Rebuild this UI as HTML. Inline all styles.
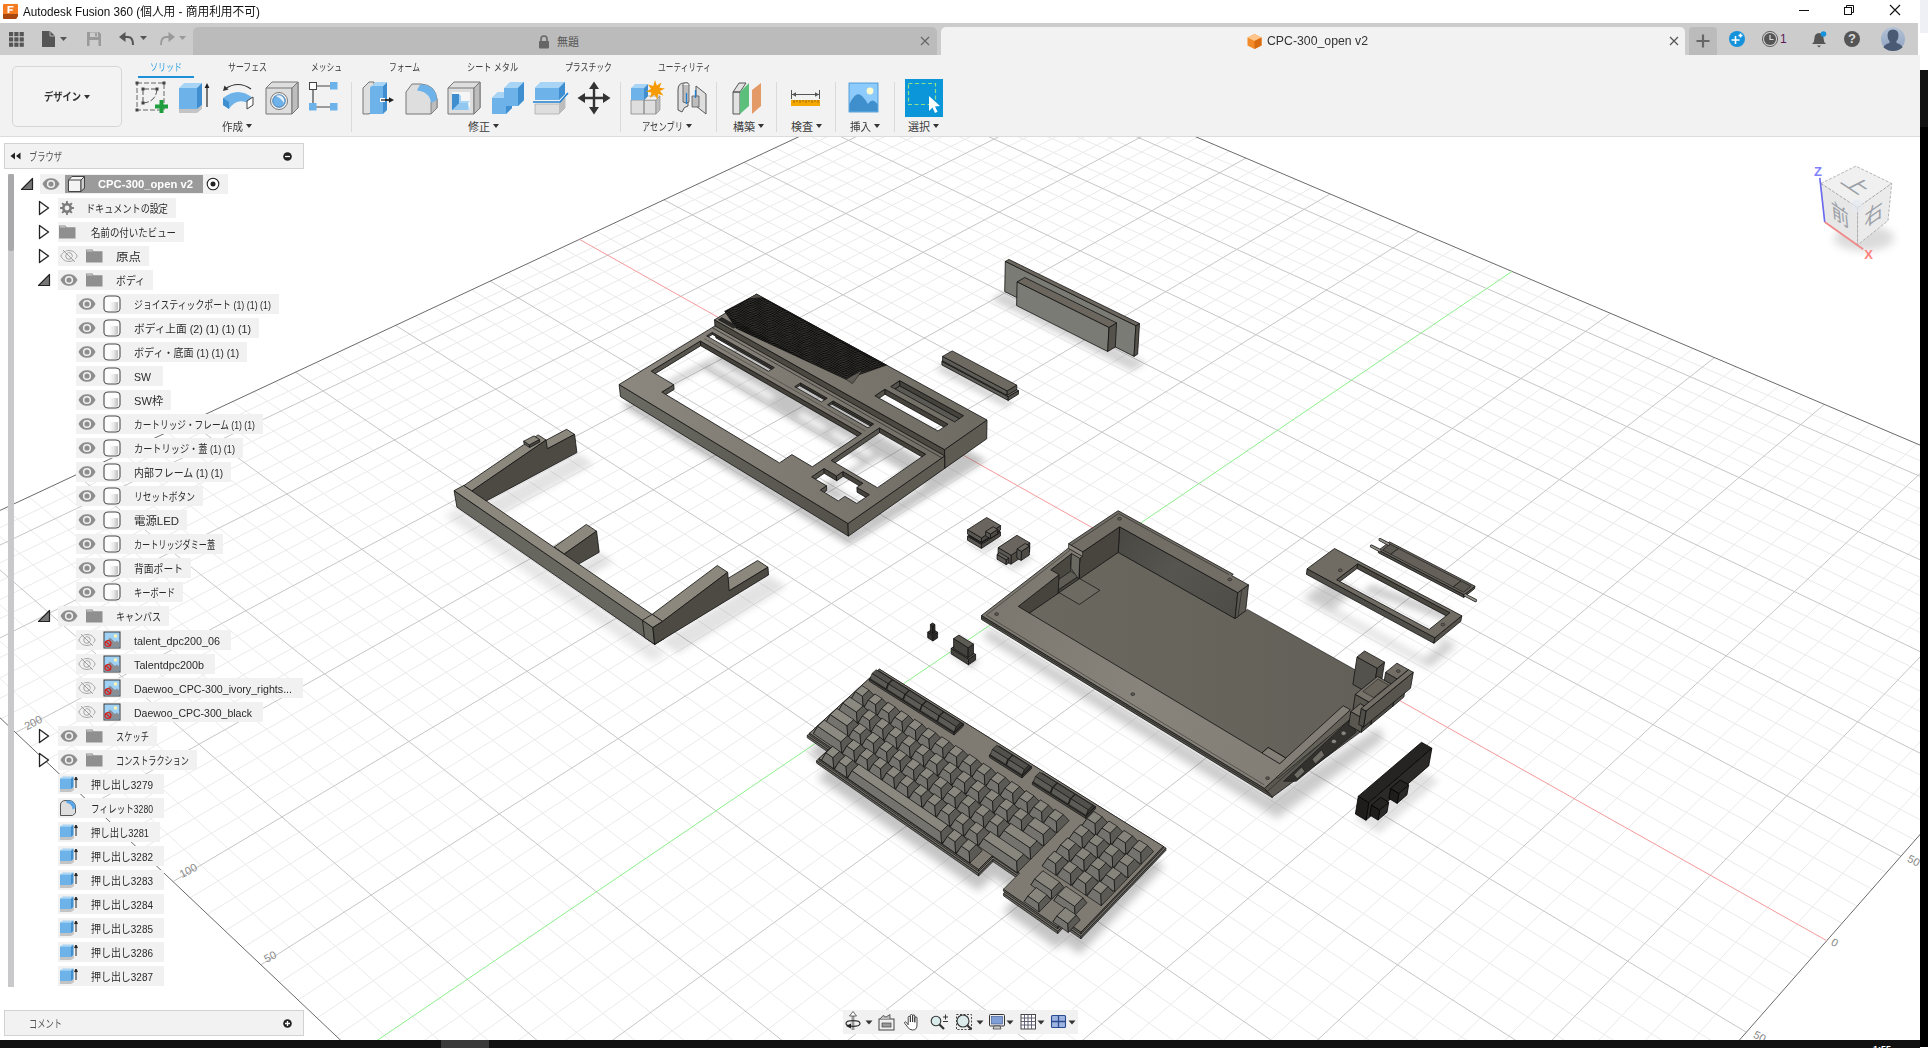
<!DOCTYPE html>
<html lang="ja"><head><meta charset="utf-8"><title>Autodesk Fusion 360</title>
<style>
html,body{margin:0;padding:0;background:#000;}html{width:1928px;height:1048px;overflow:hidden}
body{width:1928px;height:1048px;position:relative;overflow:hidden;font-family:"Liberation Sans","Noto Sans CJK JP",sans-serif;font-size:11px;color:#333;}
.abs{position:absolute;}
#win{position:absolute;left:0;top:0;width:1920px;height:1040px;background:#fff;overflow:hidden;}
#title{position:absolute;left:0;top:0;width:1920px;height:23px;background:#fff;}
#title .t{position:absolute;left:23px;top:2px;font-size:12px;color:#111;white-space:nowrap;display:inline-block}
#qbar{position:absolute;left:0;top:23px;width:1918px;height:32px;background:#cccccc;}
#tab1{position:absolute;left:193px;top:4px;width:744px;height:28px;background:#bbbbbb;border-radius:5px 5px 0 0;}
#tab2{position:absolute;left:941px;top:4px;width:744px;height:28px;background:#f2f2f2;border-radius:5px 5px 0 0;}
#plus{position:absolute;left:1689px;top:4px;width:28px;height:28px;background:#bbbbbb;border-radius:4px 4px 0 0;}
#tbar{position:absolute;left:0;top:55px;width:1920px;height:82px;background:#f2f2f2;border-bottom:1px solid #dcdcdc;box-sizing:border-box;}
.tabl{position:absolute;top:59px;font-size:10.5px;color:#3c3c3c;white-space:nowrap;display:inline-block}
.grp{position:absolute;top:118px;font-size:11px;color:#3c3c3c;white-space:nowrap;display:inline-block}
.dd{position:absolute;top:124px;border:3.5px solid transparent;border-top:4px solid #333;border-bottom:0}
.sep{position:absolute;top:82px;width:1px;height:50px;background:#dadada}
.ico{position:absolute;top:80px;width:36px;height:36px}
#design{position:absolute;left:12px;top:66px;width:108px;height:59px;border:1px solid #d6d6d6;border-radius:5px;background:#f3f3f3;box-sizing:content-box}
#design span{position:absolute;left:31px;top:21px;font-size:11px;font-weight:bold;color:#333;white-space:nowrap;display:inline-block}
#design i{position:absolute;left:71px;top:28px;border:3.5px solid transparent;border-top:4px solid #333;border-bottom:0}
#view{position:absolute;left:0;top:137px;width:1920px;height:903px;background:#fff;overflow:hidden}
.panel{position:absolute;left:4px;width:298px;height:24px;background:#f2f2f2;border:1px solid #d2d2d2;box-sizing:content-box}
.panel span{position:absolute;left:24px;top:4px;font-size:11px;color:#555;white-space:nowrap;display:inline-block}
.row{position:absolute;height:20px;background:#f1f1f1;white-space:nowrap}
.row .tx{position:absolute;top:3px;line-height:16px;height:16px;font-size:11px;color:#2a2a2a;white-space:nowrap;display:inline-block}
.row svg{position:absolute}
.arr{position:absolute}
#nav{position:absolute;left:843px;top:1010px;width:235px;height:24px;background:#f1f1f1}
</style></head><body>
<div id="win">

<div id="view"><svg width="1920" height="903" viewBox="0 137 1920 903" style="position:absolute;left:0;top:0"><defs><filter id="sh" x="-20%" y="-20%" width="140%" height="140%"><feGaussianBlur stdDeviation="4.5"/></filter><filter id="sh3" x="-20%" y="-20%" width="140%" height="140%"><feGaussianBlur stdDeviation="3.2"/></filter><filter id="sh2" x="-20%" y="-20%" width="140%" height="140%"><feGaussianBlur stdDeviation="3"/></filter></defs><path d="M-134.1 590.9L1002.0 54.3M-108.4 615.1L1030.5 66.5M-95.4 627.5L1044.9 72.6M-82.2 640.0L1059.5 78.8M-68.7 652.7L1074.3 85.1M-41.4 678.6L1104.1 97.8M-27.4 691.8L1119.3 104.2M-13.3 705.2L1134.5 110.8M1.1 718.8L1150.0 117.3M30.4 746.6L1181.3 130.7M45.3 760.7L1197.2 137.4M60.5 775.1L1213.2 144.2M75.9 789.7L1229.4 151.1M107.4 819.4L1262.3 165.1M123.4 834.6L1279.0 172.2M139.7 850.1L1295.8 179.4M156.3 865.7L1312.8 186.7M190.1 897.8L1347.4 201.4M207.4 914.2L1364.9 208.8M225.0 930.8L1382.6 216.4M242.8 947.7L1400.5 224.0M279.4 982.3L1436.9 239.5M298.0 1000.0L1455.4 247.3M317.0 1017.9L1474.0 255.3M336.3 1036.2L1492.9 263.3M375.9 1073.6L1531.2 279.6M396.1 1092.8L1550.7 287.9M416.7 1112.3L1570.4 296.3M437.6 1132.1L1590.3 304.8M480.5 1172.7L1630.7 322.0M502.5 1193.6L1651.3 330.7M524.9 1214.8L1672.1 339.6M547.7 1236.3L1693.1 348.5M594.5 1280.6L1735.8 366.7M618.5 1303.4L1757.6 376.0M643.0 1326.5L1779.6 385.4M667.8 1350.1L1801.8 394.8M719.0 1398.5L1847.1 414.1M745.3 1423.4L1870.1 423.9M772.1 1448.8L1893.4 433.8M799.4 1474.6L1917.0 443.8M855.6 1527.9L1965.0 464.3M884.6 1555.3L1989.4 474.7M914.1 1583.2L2014.1 485.2M944.2 1611.7L2039.1 495.8M1006.2 1670.4L2090.1 517.6M1038.2 1700.7L2116.1 528.6M1070.9 1731.6L2142.4 539.8M-120.5 566.8L1133.1 1730.2M-94.8 554.7L1161.5 1698.0M-69.4 542.9L1189.2 1666.5M-19.6 519.6L1242.8 1605.4M4.8 508.2L1268.8 1575.8M28.9 496.9L1294.3 1546.8M52.7 485.8L1319.3 1518.4M99.4 463.9L1367.7 1463.3M122.3 453.2L1391.1 1436.6M144.9 442.6L1414.2 1410.4M167.2 432.2L1436.7 1384.7M211.0 411.7L1480.6 1334.7M232.6 401.6L1501.9 1310.5M253.8 391.7L1522.8 1286.7M274.8 381.9L1543.3 1263.3M316.1 362.6L1583.3 1217.9M336.4 353.1L1602.7 1195.7M356.4 343.7L1621.8 1174.0M376.2 334.5L1640.5 1152.7M415.1 316.3L1677.0 1111.1M434.2 307.3L1694.8 1090.9M453.1 298.5L1712.3 1071.0M471.7 289.8L1729.5 1051.4M508.5 272.6L1763.0 1013.3M526.5 264.1L1779.3 994.7M544.4 255.8L1795.4 976.4M562.0 247.5L1811.2 958.4M596.8 231.3L1842.1 923.3M613.9 223.3L1857.1 906.1M630.8 215.4L1872.0 889.2M647.5 207.6L1886.6 872.6M680.4 192.2L1915.1 840.1M696.6 184.6L1929.0 824.3M712.6 177.1L1942.7 808.7M728.5 169.7L1956.3 793.3M759.7 155.1L1982.7 763.2M775.1 147.9L1995.6 748.5M790.3 140.8L2008.4 734.0M805.3 133.7L2020.9 719.7M835.0 119.9L2045.5 691.7M849.6 113.1L2057.5 678.0M864.0 106.3L2069.4 664.5M878.4 99.6L2081.0 651.2M906.6 86.4L2103.9 625.2M920.4 79.9L2115.2 612.4M934.2 73.5L2126.2 599.8M947.8 67.1L2137.1 587.4M974.7 54.5L2158.5 563.1" stroke="#eaeaea" stroke-width="1" fill="none"/>
<path d="M-121.3 602.9L1016.2 60.4M-55.2 665.6L1089.1 91.4M15.6 732.6L1165.6 124.0M91.5 804.4L1245.8 158.1M173.1 881.6L1330.0 194.0M261.0 964.8L1418.6 231.7M458.9 1152.2L1610.4 313.3M570.9 1258.3L1714.4 357.6M693.2 1374.1L1824.3 404.4M827.3 1501.0L1940.8 454.0M974.9 1640.8L2064.5 506.6M-44.3 531.1L1216.3 1635.6M76.2 474.8L1343.7 1490.6M189.3 421.9L1458.9 1359.5M295.6 372.2L1563.5 1240.4M395.7 325.3L1658.9 1131.7M490.2 281.1L1746.4 1032.2M664.0 199.8L1900.9 856.2M744.2 162.4L1969.6 778.1M820.2 126.8L2033.3 705.6M892.5 93.0L2092.6 638.1M961.3 60.8L2147.9 575.1" stroke="#c6c6c6" stroke-width="1" fill="none"/>
<polygon points="-146.6,579.0 1104.2,1763.2 2169.0,551.1 987.9,48.3" fill="none" stroke="#6a6a6a" stroke-width="1"/>
<path d="M579.5 239.4L1826.8 940.7" stroke="#f59a9a" stroke-width="1"/>
<path d="M355.9 1054.8L1512.0 271.4" stroke="#8cf08c" stroke-width="1"/>
<text x="35" y="726" transform="rotate(-28 35 726)" font-size="11" fill="#8a8a8a" font-family="Liberation Sans, sans-serif" text-anchor="middle">200</text>
<text x="190" y="874" transform="rotate(-28 190 874)" font-size="11" fill="#8a8a8a" font-family="Liberation Sans, sans-serif" text-anchor="middle">100</text>
<text x="272" y="960" transform="rotate(-28 272 960)" font-size="11" fill="#8a8a8a" font-family="Liberation Sans, sans-serif" text-anchor="middle">50</text>
<text x="1912" y="864" transform="rotate(28 1912 864)" font-size="11" fill="#8a8a8a" font-family="Liberation Sans, sans-serif" text-anchor="middle">50</text>
<text x="1833" y="946" transform="rotate(28 1833 946)" font-size="11" fill="#8a8a8a" font-family="Liberation Sans, sans-serif" text-anchor="middle">0</text>
<text x="1758" y="1040" transform="rotate(28 1758 1040)" font-size="11" fill="#8a8a8a" font-family="Liberation Sans, sans-serif" text-anchor="middle">50</text><defs><linearGradient id="tbTop" gradientUnits="userSpaceOnUse" x1="620" y1="0" x2="990" y2="0"><stop offset="0" stop-color="#8c887f"/><stop offset="0.5" stop-color="#7d7970"/><stop offset="1" stop-color="#6d6a62"/></linearGradient><linearGradient id="tbV" gradientUnits="userSpaceOnUse" x1="620" y1="0" x2="850" y2="0"><stop offset="0" stop-color="#6b6b63"/><stop offset="1" stop-color="#53504a"/></linearGradient><linearGradient id="bcFloor" gradientUnits="userSpaceOnUse" x1="1000" y1="0" x2="1400" y2="0"><stop offset="0" stop-color="#6b685f"/><stop offset="0.5" stop-color="#67645c"/><stop offset="1" stop-color="#625f58"/></linearGradient><linearGradient id="bcWall" gradientUnits="userSpaceOnUse" x1="1120" y1="530" x2="1240" y2="620"><stop offset="0" stop-color="#4a4843"/><stop offset="0.45" stop-color="#57554f"/><stop offset="1" stop-color="#4e4c46"/></linearGradient><linearGradient id="bcRim" gradientUnits="userSpaceOnUse" x1="980" y1="620" x2="1280" y2="790"><stop offset="0" stop-color="#7b776e"/><stop offset="0.5" stop-color="#88847b"/><stop offset="1" stop-color="#827e75"/></linearGradient><linearGradient id="kbTop" gradientUnits="userSpaceOnUse" x1="800" y1="0" x2="1170" y2="0"><stop offset="0" stop-color="#8d8a81"/><stop offset="1" stop-color="#85827a"/></linearGradient></defs><path d="M990.5 299.4 L1131.9 371.1 L1145.9 362.5 L1004.6 291.6Z" fill="#555" fill-rule="evenodd" opacity="0.25" filter="url(#sh2)"/>
<polygon points="1004.7,291.5 1134.0,356.4 1135.9,325.7 1005.3,261.4" fill="#7b7b75" stroke="#111" stroke-width="0.8" stroke-linejoin="round" />
<polygon points="1134.0,356.4 1137.6,354.2 1139.5,323.5 1135.9,325.7" fill="#55524b" stroke="#111" stroke-width="0.8" stroke-linejoin="round" />
<path d="M1005.3 261.4 L1135.9 325.7 L1139.5 323.5 L1008.9 259.4Z" fill="#6b675f" fill-rule="evenodd" stroke="#111" stroke-width="0.8" stroke-linejoin="round" />
<polygon points="1016.6,305.6 1107.7,351.5 1109.0,327.4 1017.1,281.8" fill="#7b7b75" stroke="#111" stroke-width="0.8" stroke-linejoin="round" />
<polygon points="1107.7,351.5 1115.3,347.0 1116.6,322.9 1109.0,327.4" fill="#55524b" stroke="#111" stroke-width="0.8" stroke-linejoin="round" />
<path d="M1017.1 281.8 L1109.0 327.4 L1116.6 322.9 L1024.8 277.5Z" fill="#6b675f" fill-rule="evenodd" stroke="#111" stroke-width="0.8" stroke-linejoin="round" />
<path d="M935.1 369.4 L1005.3 407.2 L1013.7 402.2 L943.5 364.6Z" fill="#555" fill-rule="evenodd" opacity="0.25" filter="url(#sh2)"/>
<polygon points="941.9,364.9 1008.2,400.4 1008.2,396.7 941.9,361.3" fill="#5d5c56" stroke="#111" stroke-width="0.8" stroke-linejoin="round" />
<polygon points="1008.2,400.4 1018.4,394.2 1018.5,390.6 1008.2,396.7" fill="#55524b" stroke="#111" stroke-width="0.8" stroke-linejoin="round" />
<path d="M941.9 361.3 L1008.2 396.7 L1018.5 390.6 L952.2 355.4Z" fill="#6e6a62" fill-rule="evenodd" stroke="#111" stroke-width="0.8" stroke-linejoin="round" />
<polygon points="942.6,360.9 1007.1,395.4 1007.2,390.9 942.6,356.4" fill="#5d5c56" stroke="#111" stroke-width="0.8" stroke-linejoin="round" />
<polygon points="1007.1,395.4 1016.7,389.6 1016.8,385.2 1007.2,390.9" fill="#55524b" stroke="#111" stroke-width="0.8" stroke-linejoin="round" />
<path d="M942.6 356.4 L1007.2 390.9 L1016.8 385.2 L952.2 350.9Z" fill="#6e6a62" fill-rule="evenodd" stroke="#111" stroke-width="0.8" stroke-linejoin="round" />
<path d="M621.5 405.7 L848.7 545.5 L986.5 460.5 L759.1 333.2Z M702.6 368.7 L653.4 394.7 L675.9 408.3 L663.9 414.7 L780.8 485.9 L793.2 478.7 L813.4 490.9 L862.3 462.0Z M708.8 364.2 L770.3 399.9 L776.0 396.7 L714.6 361.2Z M796.2 415.4 L822.7 430.7 L828.4 427.5 L801.9 412.2Z M828.7 433.6 L868.8 456.9 L874.3 453.6 L834.2 430.4Z M832.2 485.8 L878.0 513.2 L925.9 483.9 L880.1 457.4Z M812.8 500.3 L825.1 493.0 L837.5 500.5 L844.0 496.6 L863.7 508.4 L857.7 512.0 L870.1 519.4 L857.6 527.1 L845.8 519.9 L839.2 523.9 L821.3 513.0 L827.5 509.3Z M875.9 433.1 L938.2 468.7 L948.0 462.7 L885.7 427.3Z" fill="#555" fill-rule="evenodd" opacity="0.34" filter="url(#sh3)"/>
<polygon points="890.8,391.7 954.6,427.1 963.5,420.9 899.8,385.8" fill="#5b5953" stroke="#111" stroke-width="0.8" stroke-linejoin="round" />
<polygon points="899.8,385.8 890.8,391.7 890.7,386.6 899.7,380.6" fill="#55524b" stroke="#111" stroke-width="0.8" stroke-linejoin="round" />
<polygon points="963.5,420.9 899.8,385.8 899.7,380.6 963.6,415.7" fill="#45423c" stroke="#111" stroke-width="0.8" stroke-linejoin="round" />
<polygon points="885.0,394.3 875.1,400.9 874.9,395.8 884.9,389.2" fill="#55524b" stroke="#111" stroke-width="0.8" stroke-linejoin="round" />
<polygon points="948.0,429.4 885.0,394.3 884.9,389.2 948.0,424.2" fill="#45423c" stroke="#111" stroke-width="0.8" stroke-linejoin="round" />
<polygon points="715.9,337.9 944.7,468.4 944.6,449.6 714.5,319.8" fill="#4c4943" stroke="#111" stroke-width="0.8" stroke-linejoin="round" />
<polygon points="944.7,468.4 986.7,438.8 987.0,420.0 944.6,449.6" fill="#5e5b53" stroke="#111" stroke-width="0.8" stroke-linejoin="round" />
<path d="M714.5 319.8 L944.6 449.6 L987.0 420.0 L756.6 294.1Z M874.9 395.8 L938.0 431.0 L948.0 424.2 L884.9 389.2Z M890.7 386.6 L954.6 421.9 L963.6 415.7 L899.7 380.6Z" fill="url(#tbTop)" fill-rule="evenodd" stroke="#111" stroke-width="0.8" stroke-linejoin="round" />
<polygon points="756.5,294.3 724.7,311.3 736.2,328.3 845.9,379.3 886.5,365.1" fill="#2b2a28" stroke="#111" stroke-width="0.6"/>
<clipPath id="ventclip"><polygon points="756.5,294.3 724.7,311.3 736.2,328.3 845.9,379.3 886.5,365.1"/></clipPath>
<g clip-path="url(#ventclip)"><path d="M689.8 316.6 L693.4 313.8 L697.0 310.5 L700.6 309.0 L704.2 308.4 L707.8 306.0 L711.4 302.5 L715.0 300.7 L718.6 300.2 L722.2 298.2 L725.8 294.7 L729.4 292.4 L733.0 291.9 L736.6 290.3 L740.2 286.9 L743.8 284.2 L747.4 283.5 L751.0 282.3M692.1 317.6 L695.7 314.1 L699.3 311.6 L702.9 311.0 L706.5 309.6 L710.1 306.3 L713.7 303.5 L717.3 302.6 L720.9 301.6 L724.5 298.6 L728.1 295.4 L731.7 294.3 L735.3 293.5 L738.9 290.8 L742.5 287.4 L746.1 285.9 L749.7 285.3 L753.3 283.0M694.4 318.0 L698.0 314.7 L701.6 313.4 L705.2 312.7 L708.8 310.2 L712.4 306.7 L716.0 305.1 L719.6 304.5 L723.2 302.4 L726.8 298.9 L730.4 296.8 L734.0 296.2 L737.6 294.5 L741.2 291.1 L744.8 288.5 L748.4 287.9 L752.0 286.6 L755.6 283.3M696.7 318.3 L700.3 316.0 L703.9 315.4 L707.5 313.9 L711.1 310.5 L714.7 307.8 L718.3 307.0 L721.9 305.9 L725.5 302.7 L729.1 299.7 L732.7 298.7 L736.3 297.8 L739.9 295.0 L743.5 291.6 L747.1 290.3 L750.7 289.7 L754.3 287.2 L757.9 283.7M699.0 318.9 L702.6 317.8 L706.2 317.1 L709.8 314.4 L713.4 311.0 L717.0 309.4 L720.6 308.9 L724.2 306.6 L727.8 303.1 L731.4 301.1 L735.0 300.6 L738.6 298.7 L742.2 295.2 L745.8 292.9 L749.4 292.3 L753.0 290.8 L756.6 287.5 L760.2 284.7M701.3 320.3 L704.9 319.7 L708.5 318.1 L712.1 314.6 L715.7 312.1 L719.3 311.4 L722.9 310.1 L726.5 306.9 L730.1 303.9 L733.7 303.0 L737.3 302.1 L740.9 299.1 L744.5 295.9 L748.1 294.7 L751.7 294.0 L755.3 291.4 L758.9 287.9 L762.5 286.3M703.6 322.2 L707.2 321.3 L710.8 318.5 L714.4 315.2 L718.0 313.8 L721.6 313.2 L725.2 310.8 L728.8 307.3 L732.4 305.5 L736.0 304.9 L739.6 302.9 L743.2 299.4 L746.8 297.2 L750.4 296.6 L754.0 295.0 L757.6 291.6 L761.2 289.0 L764.8 288.3M705.9 324.1 L709.5 322.3 L713.1 318.8 L716.7 316.4 L720.3 315.8 L723.9 314.4 L727.5 311.0 L731.1 308.2 L734.7 307.4 L738.3 306.4 L741.9 303.3 L745.5 300.1 L749.1 299.0 L752.7 298.3 L756.3 295.5 L759.9 292.1 L763.5 290.7 L767.1 290.1M708.2 325.6 L711.8 322.7 L715.4 319.4 L719.0 318.2 L722.6 317.5 L726.2 314.9 L729.8 311.5 L733.4 309.8 L737.0 309.3 L740.6 307.1 L744.2 303.6 L747.8 301.5 L751.4 301.0 L755.0 299.3 L758.6 295.8 L762.2 293.3 L765.8 292.7 L769.4 291.3M710.5 326.5 L714.1 323.0 L717.7 320.7 L721.3 320.1 L724.9 318.6 L728.5 315.2 L732.1 312.5 L735.7 311.8 L739.3 310.6 L742.9 307.4 L746.5 304.4 L750.1 303.4 L753.7 302.6 L757.3 299.7 L760.9 296.4 L764.5 295.0 L768.1 294.4 L771.7 291.9M712.8 326.9 L716.4 323.7 L720.0 322.5 L723.6 321.8 L727.2 319.1 L730.8 315.7 L734.4 314.2 L738.0 313.6 L741.6 311.3 L745.2 307.8 L748.8 305.9 L752.4 305.4 L756.0 303.5 L759.6 300.0 L763.2 297.6 L766.8 297.0 L770.4 295.6 L774.0 292.2M715.1 327.2 L718.7 325.0 L722.3 324.5 L725.9 322.8 L729.5 319.4 L733.1 316.8 L736.7 316.2 L740.3 314.9 L743.9 311.6 L747.5 308.7 L751.1 307.8 L754.7 306.8 L758.3 303.8 L761.9 300.6 L765.5 299.4 L769.1 298.7 L772.7 296.1 L776.3 292.7M717.4 327.9 L721.0 326.9 L724.6 326.1 L728.2 323.3 L731.8 319.9 L735.4 318.6 L739.0 317.9 L742.6 315.5 L746.2 312.0 L749.8 310.2 L753.4 309.7 L757.0 307.7 L760.6 304.2 L764.2 301.9 L767.8 301.4 L771.4 299.8 L775.0 296.4 L778.6 293.7M719.7 329.4 L723.3 328.9 L726.9 327.0 L730.5 323.5 L734.1 321.1 L737.7 320.5 L741.3 319.1 L744.9 315.8 L748.5 313.0 L752.1 312.2 L755.7 311.1 L759.3 308.0 L762.9 304.9 L766.5 303.8 L770.1 303.0 L773.7 300.2 L777.3 296.9 L780.9 295.4M722.0 331.3 L725.6 330.4 L729.2 327.4 L732.8 324.2 L736.4 322.9 L740.0 322.3 L743.6 319.7 L747.2 316.2 L750.8 314.6 L754.4 314.0 L758.0 311.9 L761.6 308.3 L765.2 306.3 L768.8 305.8 L772.4 304.0 L776.0 300.5 L779.6 298.0 L783.2 297.4M724.3 333.2 L727.9 331.2 L731.5 327.7 L735.1 325.5 L738.7 324.9 L742.3 323.3 L745.9 319.9 L749.5 317.3 L753.1 316.6 L756.7 315.4 L760.3 312.2 L763.9 309.2 L767.5 308.2 L771.1 307.3 L774.7 304.4 L778.3 301.1 L781.9 299.8 L785.5 299.2M726.6 334.7 L730.2 331.6 L733.8 328.4 L737.4 327.3 L741.0 326.6 L744.6 323.8 L748.2 320.4 L751.8 318.9 L755.4 318.4 L759.0 316.0 L762.6 312.5 L766.2 310.6 L769.8 310.1 L773.4 308.2 L777.0 304.7 L780.6 302.4 L784.2 301.8 L787.8 300.3M728.9 335.4 L732.5 331.9 L736.1 329.8 L739.7 329.3 L743.3 327.6 L746.9 324.1 L750.5 321.6 L754.1 320.9 L757.7 319.6 L761.3 316.3 L764.9 313.4 L768.5 312.6 L772.1 311.6 L775.7 308.6 L779.3 305.4 L782.9 304.2 L786.5 303.5 L790.1 300.8M731.2 335.7 L734.8 332.7 L738.4 331.7 L742.0 330.8 L745.6 328.0 L749.2 324.7 L752.8 323.3 L756.4 322.7 L760.0 320.2 L763.6 316.7 L767.2 315.0 L770.8 314.5 L774.4 312.4 L778.0 308.9 L781.6 306.7 L785.2 306.2 L788.8 304.5 L792.4 301.1M733.5 336.1 L737.1 334.1 L740.7 333.6 L744.3 331.8 L747.9 328.3 L751.5 325.9 L755.1 325.3 L758.7 323.9 L762.3 320.5 L765.9 317.7 L769.5 316.9 L773.1 315.9 L776.7 312.7 L780.3 309.6 L783.9 308.6 L787.5 307.8 L791.1 305.0 L794.7 301.6M735.8 337.0 L739.4 336.1 L743.0 335.1 L746.6 332.2 L750.2 328.9 L753.8 327.7 L757.4 327.0 L761.0 324.4 L764.6 321.0 L768.2 319.3 L771.8 318.8 L775.4 316.6 L779.0 313.1 L782.6 311.0 L786.2 310.5 L789.8 308.7 L793.4 305.3 L797.0 302.8M738.1 338.5 L741.7 338.0 L745.3 336.0 L748.9 332.5 L752.5 330.2 L756.1 329.7 L759.7 328.1 L763.3 324.7 L766.9 322.0 L770.5 321.3 L774.1 320.1 L777.7 316.9 L781.3 313.9 L784.9 312.9 L788.5 312.1 L792.1 309.1 L795.7 305.9 L799.3 304.6M740.4 340.4 L744.0 339.4 L747.6 336.3 L751.2 333.2 L754.8 332.1 L758.4 331.3 L762.0 328.6 L765.6 325.2 L769.2 323.7 L772.8 323.1 L776.4 320.8 L780.0 317.3 L783.6 315.4 L787.2 314.9 L790.8 312.9 L794.4 309.4 L798.0 307.1 L801.6 306.6M742.7 342.3 L746.3 340.2 L749.9 336.6 L753.5 334.6 L757.1 334.0 L760.7 332.3 L764.3 328.8 L767.9 326.3 L771.5 325.7 L775.1 324.4 L778.7 321.1 L782.3 318.2 L785.9 317.3 L789.5 316.3 L793.1 313.3 L796.7 310.1 L800.3 309.0 L803.9 308.2M745.0 343.7 L748.6 340.5 L752.2 337.4 L755.8 336.4 L759.4 335.6 L763.0 332.7 L766.6 329.4 L770.2 328.1 L773.8 327.4 L777.4 324.9 L781.0 321.5 L784.6 319.7 L788.2 319.2 L791.8 317.1 L795.4 313.6 L799.0 311.5 L802.6 310.9 L806.2 309.3M747.3 344.3 L750.9 340.8 L754.5 338.9 L758.1 338.4 L761.7 336.5 L765.3 333.0 L768.9 330.6 L772.5 330.1 L776.1 328.6 L779.7 325.2 L783.3 322.5 L786.9 321.7 L790.5 320.6 L794.1 317.5 L797.7 314.4 L801.3 313.3 L804.9 312.5 L808.5 309.7M749.6 344.6 L753.2 341.7 L756.8 340.8 L760.4 339.9 L764.0 336.9 L767.6 333.7 L771.2 332.5 L774.8 331.8 L778.4 329.1 L782.0 325.7 L785.6 324.1 L789.2 323.6 L792.8 321.3 L796.4 317.8 L800.0 315.8 L803.6 315.3 L807.2 313.5 L810.8 310.0M751.9 345.0 L755.5 343.3 L759.1 342.7 L762.7 340.7 L766.3 337.2 L769.9 335.0 L773.5 334.4 L777.1 332.8 L780.7 329.4 L784.3 326.8 L787.9 326.1 L791.5 324.9 L795.1 321.6 L798.7 318.6 L802.3 317.7 L805.9 316.8 L809.5 313.9 L813.1 310.6M754.2 346.0 L757.8 345.2 L761.4 344.1 L765.0 341.0 L768.6 337.9 L772.2 336.8 L775.8 336.1 L779.4 333.3 L783.0 329.9 L786.6 328.5 L790.2 327.9 L793.8 325.5 L797.4 322.0 L801.0 320.1 L804.6 319.6 L808.2 317.7 L811.8 314.2 L815.4 311.9M756.5 347.6 L760.1 347.1 L763.7 344.9 L767.3 341.4 L770.9 339.3 L774.5 338.8 L778.1 337.0 L781.7 333.6 L785.3 331.1 L788.9 330.5 L792.5 329.1 L796.1 325.8 L799.7 322.9 L803.3 322.1 L806.9 321.1 L810.5 318.0 L814.1 314.9 L817.7 313.7M758.8 349.6 L762.4 348.4 L766.0 345.2 L769.6 342.2 L773.2 341.2 L776.8 340.3 L780.4 337.4 L784.0 334.2 L787.6 332.8 L791.2 332.2 L794.8 329.7 L798.4 326.2 L802.0 324.5 L805.6 324.0 L809.2 321.9 L812.8 318.3 L816.4 316.2 L820.0 315.7M761.1 351.4 L764.7 349.1 L768.3 345.6 L771.9 343.7 L775.5 343.1 L779.1 341.2 L782.7 337.7 L786.3 335.4 L789.9 334.8 L793.5 333.3 L797.1 329.9 L800.7 327.2 L804.3 326.5 L807.9 325.3 L811.5 322.2 L815.1 319.1 L818.7 318.1 L822.3 317.3M763.4 352.6 L767.0 349.4 L770.6 346.5 L774.2 345.6 L777.8 344.6 L781.4 341.6 L785.0 338.4 L788.6 337.2 L792.2 336.5 L795.8 333.8 L799.4 330.4 L803.0 328.9 L806.6 328.3 L810.2 326.1 L813.8 322.5 L817.4 320.6 L821.0 320.0 L824.6 318.2M765.7 353.2 L769.3 349.8 L772.9 348.0 L776.5 347.5 L780.1 345.4 L783.7 341.9 L787.3 339.7 L790.9 339.2 L794.5 337.6 L798.1 334.1 L801.7 331.5 L805.3 330.8 L808.9 329.6 L812.5 326.3 L816.1 323.4 L819.7 322.5 L823.3 321.6 L826.9 318.6M768.0 353.5 L771.6 350.8 L775.2 350.0 L778.8 348.9 L782.4 345.8 L786.0 342.7 L789.6 341.6 L793.2 340.8 L796.8 338.0 L800.4 334.7 L804.0 333.2 L807.6 332.6 L811.2 330.2 L814.8 326.7 L818.4 324.9 L822.0 324.4 L825.6 322.4 L829.2 318.9M770.3 354.0 L773.9 352.4 L777.5 351.8 L781.1 349.6 L784.7 346.1 L788.3 344.1 L791.9 343.6 L795.5 341.8 L799.1 338.3 L802.7 335.8 L806.3 335.2 L809.9 333.8 L813.5 330.5 L817.1 327.7 L820.7 326.9 L824.3 325.8 L827.9 322.8 L831.5 319.6M772.6 355.1 L776.2 354.4 L779.8 353.1 L783.4 349.9 L787.0 346.9 L790.6 346.0 L794.2 345.1 L797.8 342.2 L801.4 338.9 L805.0 337.6 L808.6 337.0 L812.2 334.4 L815.8 331.0 L819.4 329.3 L823.0 328.7 L826.6 326.6 L830.2 323.1 L833.8 321.0M774.9 356.7 L778.5 356.2 L782.1 353.8 L785.7 350.3 L789.3 348.4 L792.9 347.9 L796.5 346.0 L800.1 342.5 L803.7 340.2 L807.3 339.6 L810.9 338.1 L814.5 334.7 L818.1 332.0 L821.7 331.2 L825.3 330.1 L828.9 326.9 L832.5 323.9 L836.1 322.9M777.2 358.7 L780.8 357.4 L784.4 354.1 L788.0 351.2 L791.6 350.4 L795.2 349.4 L798.8 346.3 L802.4 343.1 L806.0 342.0 L809.6 341.3 L813.2 338.6 L816.8 335.2 L820.4 333.6 L824.0 333.1 L827.6 330.8 L831.2 327.3 L834.8 325.3 L838.4 324.8M779.5 360.5 L783.1 358.0 L786.7 354.5 L790.3 352.8 L793.9 352.2 L797.5 350.2 L801.1 346.6 L804.7 344.5 L808.3 344.0 L811.9 342.3 L815.5 338.8 L819.1 336.3 L822.7 335.6 L826.3 334.3 L829.9 331.1 L833.5 328.1 L837.1 327.2 L840.7 326.3M781.8 361.6 L785.4 358.3 L789.0 355.5 L792.6 354.7 L796.2 353.6 L799.8 350.5 L803.4 347.4 L807.0 346.4 L810.6 345.6 L814.2 342.7 L817.8 339.4 L821.4 338.0 L825.0 337.4 L828.6 335.0 L832.2 331.5 L835.8 329.7 L839.4 329.1 L843.0 327.1M784.1 362.1 L787.7 358.7 L791.3 357.1 L794.9 356.6 L798.5 354.4 L802.1 350.8 L805.7 348.8 L809.3 348.3 L812.9 346.5 L816.5 343.0 L820.1 340.6 L823.7 340.0 L827.3 338.6 L830.9 335.2 L834.5 332.4 L838.1 331.6 L841.7 330.6 L845.3 327.5M786.4 362.4 L790.0 359.8 L793.6 359.1 L797.2 357.9 L800.8 354.7 L804.4 351.7 L808.0 350.7 L811.6 349.8 L815.2 346.9 L818.8 343.6 L822.4 342.4 L826.0 341.7 L829.6 339.1 L833.2 335.7 L836.8 334.0 L840.4 333.5 L844.0 331.3 L847.6 327.8M788.7 363.0 L792.3 361.5 L795.9 360.9 L799.5 358.5 L803.1 355.0 L806.7 353.2 L810.3 352.7 L813.9 350.7 L817.5 347.2 L821.1 344.9 L824.7 344.4 L828.3 342.8 L831.9 339.4 L835.5 336.7 L839.1 336.0 L842.7 334.8 L846.3 331.6 L849.9 328.6M791.0 364.1 L794.6 363.5 L798.2 362.1 L801.8 358.8 L805.4 356.0 L809.0 355.1 L812.6 354.1 L816.2 351.1 L819.8 347.9 L823.4 346.7 L827.0 346.0 L830.6 343.3 L834.2 339.9 L837.8 338.4 L841.4 337.8 L845.0 335.5 L848.6 332.0 L852.2 330.1M793.3 365.9 L796.9 365.2 L800.5 362.7 L804.1 359.2 L807.7 357.5 L811.3 357.0 L814.9 354.9 L818.5 351.4 L822.1 349.2 L825.7 348.7 L829.3 347.0 L832.9 343.6 L836.5 341.0 L840.1 340.4 L843.7 339.1 L847.3 335.8 L850.9 332.9 L854.5 332.0M795.6 367.9 L799.2 366.4 L802.8 363.0 L806.4 360.3 L810.0 359.5 L813.6 358.4 L817.2 355.2 L820.8 352.2 L824.4 351.1 L828.0 350.3 L831.6 347.5 L835.2 344.1 L838.8 342.8 L842.4 342.1 L846.0 339.7 L849.6 336.2 L853.2 334.4 L856.8 333.9M797.9 369.5 L801.5 366.9 L805.1 363.5 L808.7 361.9 L812.3 361.3 L815.9 359.1 L819.5 355.6 L823.1 353.6 L826.7 353.1 L830.3 351.2 L833.9 347.7 L837.5 345.3 L841.1 344.7 L844.7 343.3 L848.3 340.0 L851.9 337.2 L855.5 336.4 L859.1 335.3M800.2 370.6 L803.8 367.1 L807.4 364.6 L811.0 363.9 L814.6 362.6 L818.2 359.4 L821.8 356.4 L825.4 355.5 L829.0 354.6 L832.6 351.6 L836.2 348.4 L839.8 347.1 L843.4 346.5 L847.0 343.9 L850.6 340.4 L854.2 338.8 L857.8 338.2 L861.4 336.1M802.5 371.0 L806.1 367.7 L809.7 366.3 L813.3 365.7 L816.9 363.3 L820.5 359.8 L824.1 357.9 L827.7 357.4 L831.3 355.4 L834.9 351.9 L838.5 349.7 L842.1 349.1 L845.7 347.5 L849.3 344.1 L852.9 341.5 L856.5 340.8 L860.1 339.6 L863.7 336.4M804.8 371.3 L808.4 368.9 L812.0 368.3 L815.6 366.9 L819.2 363.5 L822.8 360.7 L826.4 359.9 L830.0 358.9 L833.6 355.8 L837.2 352.6 L840.8 351.5 L844.4 350.8 L848.0 348.0 L851.6 344.6 L855.2 343.2 L858.8 342.6 L862.4 340.2 L866.0 336.7M807.1 371.9 L810.7 370.6 L814.3 370.0 L817.9 367.4 L821.5 364.0 L825.1 362.3 L828.7 361.8 L832.3 359.6 L835.9 356.1 L839.5 354.0 L843.1 353.5 L846.7 351.8 L850.3 348.3 L853.9 345.8 L857.5 345.1 L861.1 343.8 L864.7 340.5 L868.3 337.6M809.4 373.2 L813.0 372.6 L816.6 371.1 L820.2 367.7 L823.8 365.0 L827.4 364.3 L831.0 363.1 L834.6 359.9 L838.2 356.9 L841.8 355.9 L845.4 355.1 L849.0 352.2 L852.6 348.9 L856.2 347.5 L859.8 346.9 L863.4 344.4 L867.0 340.9 L870.6 339.2M811.7 375.0 L815.3 374.3 L818.9 371.6 L822.5 368.2 L826.1 366.7 L829.7 366.1 L833.3 363.8 L836.9 360.3 L840.5 358.3 L844.1 357.8 L847.7 356.0 L851.3 352.5 L854.9 350.1 L858.5 349.5 L862.1 348.1 L865.7 344.7 L869.3 341.9 L872.9 341.1M814.0 377.0 L817.6 375.3 L821.2 371.9 L824.8 369.3 L828.4 368.6 L832.0 367.4 L835.6 364.1 L839.2 361.2 L842.8 360.3 L846.4 359.3 L850.0 356.4 L853.6 353.1 L857.2 351.9 L860.8 351.2 L864.4 348.6 L868.0 345.2 L871.6 343.6 L875.2 343.0M816.3 378.6 L819.9 375.8 L823.5 372.4 L827.1 371.0 L830.7 370.4 L834.3 368.0 L837.9 364.5 L841.5 362.7 L845.1 362.2 L848.7 360.2 L852.3 356.7 L855.9 354.4 L859.5 353.9 L863.1 352.3 L866.7 348.9 L870.3 346.2 L873.9 345.5 L877.5 344.3M818.6 379.5 L822.2 376.1 L825.8 373.6 L829.4 373.0 L833.0 371.6 L836.6 368.3 L840.2 365.5 L843.8 364.7 L847.4 363.6 L851.0 360.5 L854.6 357.4 L858.2 356.3 L861.8 355.5 L865.4 352.8 L869.0 349.4 L872.6 347.9 L876.2 347.3 L879.8 345.0M820.9 379.9 L824.5 376.7 L828.1 375.4 L831.7 374.7 L835.3 372.2 L838.9 368.7 L842.5 367.1 L846.1 366.5 L849.7 364.4 L853.3 360.8 L856.9 358.8 L860.5 358.2 L864.1 356.5 L867.7 353.0 L871.3 350.5 L874.9 349.9 L878.5 348.6 L882.1 345.3M823.2 380.2 L826.8 377.9 L830.4 377.4 L834.0 375.8 L837.6 372.4 L841.2 369.8 L844.8 369.0 L848.4 367.9 L852.0 364.7 L855.6 361.6 L859.2 360.7 L862.8 359.8 L866.4 356.9 L870.0 353.6 L873.6 352.3 L877.2 351.7 L880.8 349.1 L884.4 345.7M825.5 380.9 L829.1 379.8 L832.7 379.0 L836.3 376.3 L839.9 372.9 L843.5 371.4 L847.1 370.9 L850.7 368.5 L854.3 365.0 L857.9 363.1 L861.5 362.6 L865.1 360.7 L868.7 357.2 L872.3 354.9 L875.9 354.3 L879.5 352.8 L883.1 349.4 L886.7 346.7M827.8 382.3 L831.4 381.7 L835.0 380.1 L838.6 376.6 L842.2 374.1 L845.8 373.4 L849.4 372.1 L853.0 368.8 L856.6 365.9 L860.2 365.0 L863.8 364.1 L867.4 361.1 L871.0 357.9 L874.6 356.7 L878.2 356.0 L881.8 353.3 L885.4 349.9 L889.0 348.3M830.1 384.2 L833.7 383.3 L837.3 380.5 L840.9 377.2 L844.5 375.8 L848.1 375.2 L851.7 372.7 L855.3 369.2 L858.9 367.5 L862.5 366.9 L866.1 364.9 L869.7 361.4 L873.3 359.2 L876.9 358.6 L880.5 357.0 L884.1 353.6 L887.7 351.0 L891.3 350.3M832.4 386.1 L836.0 384.3 L839.6 380.8 L843.2 378.4 L846.8 377.8 L850.4 376.4 L854.0 373.0 L857.6 370.2 L861.2 369.4 L864.8 368.3 L868.4 365.2 L872.0 362.1 L875.6 361.0 L879.2 360.3 L882.8 357.5 L886.4 354.1 L890.0 352.7 L893.6 352.1M834.7 387.6 L838.3 384.7 L841.9 381.4 L845.5 380.2 L849.1 379.5 L852.7 376.9 L856.3 373.5 L859.9 371.8 L863.5 371.3 L867.1 369.1 L870.7 365.6 L874.3 363.5 L877.9 363.0 L881.5 361.2 L885.1 357.8 L888.7 355.3 L892.3 354.7 L895.9 353.3M837.0 388.5 L840.6 385.0 L844.2 382.7 L847.8 382.1 L851.4 380.6 L855.0 377.2 L858.6 374.5 L862.2 373.8 L865.8 372.6 L869.4 369.4 L873.0 366.4 L876.6 365.4 L880.2 364.6 L883.8 361.7 L887.4 358.4 L891.0 357.1 L894.6 356.4 L898.2 353.9M839.3 388.8 L842.9 385.7 L846.5 384.5 L850.1 383.8 L853.7 381.1 L857.3 377.7 L860.9 376.2 L864.5 375.6 L868.1 373.3 L871.7 369.8 L875.3 367.9 L878.9 367.4 L882.5 365.4 L886.1 361.9 L889.7 359.6 L893.3 359.0 L896.9 357.5 L900.5 354.2M841.6 389.1 L845.2 387.0 L848.8 386.5 L852.4 384.8 L856.0 381.3 L859.6 378.8 L863.2 378.2 L866.8 376.9 L870.4 373.6 L874.0 370.7 L877.6 369.8 L881.2 368.8 L884.8 365.8 L888.4 362.6 L892.0 361.4 L895.6 360.7 L899.2 358.0 L902.8 354.6M843.9 389.9 L847.5 388.9 L851.1 388.1 L854.7 385.2 L858.3 381.9 L861.9 380.6 L865.5 379.9 L869.1 377.5 L872.7 374.0 L876.3 372.2 L879.9 371.7 L883.5 369.6 L887.1 366.1 L890.7 363.9 L894.3 363.4 L897.9 361.8 L901.5 358.3 L905.1 355.7M846.2 391.4 L849.8 390.9 L853.4 389.0 L857.0 385.5 L860.6 383.1 L864.2 382.5 L867.8 381.1 L871.4 377.7 L875.0 375.0 L878.6 374.2 L882.2 373.1 L885.8 370.0 L889.4 366.9 L893.0 365.8 L896.6 365.0 L900.2 362.2 L903.8 358.9 L907.4 357.4M848.5 393.3 L852.1 392.4 L855.7 389.4 L859.3 386.2 L862.9 384.9 L866.5 384.2 L870.1 381.6 L873.7 378.2 L877.3 376.6 L880.9 376.0 L884.5 373.8 L888.1 370.3 L891.7 368.3 L895.3 367.8 L898.9 366.0 L902.5 362.5 L906.1 360.0 L909.7 359.4M850.8 395.2 L854.4 393.2 L858.0 389.7 L861.6 387.5 L865.2 386.9 L868.8 385.3 L872.4 381.9 L876.0 379.3 L879.6 378.6 L883.2 377.4 L886.8 374.1 L890.4 371.1 L894.0 370.2 L897.6 369.3 L901.2 366.4 L904.8 363.1 L908.4 361.8 L912.0 361.2M853.1 396.6 L856.7 393.5 L860.3 390.4 L863.9 389.3 L867.5 388.5 L871.1 385.8 L874.7 382.4 L878.3 380.9 L881.9 380.4 L885.5 378.0 L889.1 374.5 L892.7 372.6 L896.3 372.1 L899.9 370.2 L903.5 366.7 L907.1 364.4 L910.7 363.8 L914.3 362.3M855.4 397.4 L859.0 393.9 L862.6 391.8 L866.2 391.3 L869.8 389.5 L873.4 386.1 L877.0 383.6 L880.6 382.9 L884.2 381.6 L887.8 378.3 L891.4 375.4 L895.0 374.6 L898.6 373.6 L902.2 370.5 L905.8 367.4 L909.4 366.2 L913.0 365.5 L916.6 362.8M857.7 397.7 L861.3 394.7 L864.9 393.7 L868.5 392.8 L872.1 390.0 L875.7 386.7 L879.3 385.3 L882.9 384.7 L886.5 382.2 L890.1 378.7 L893.7 377.0 L897.3 376.5 L900.9 374.4 L904.5 370.9 L908.1 368.7 L911.7 368.2 L915.3 366.5 L918.9 363.0M860.0 398.1 L863.6 396.1 L867.2 395.6 L870.8 393.7 L874.4 390.2 L878.0 387.9 L881.6 387.3 L885.2 385.8 L888.8 382.5 L892.4 379.7 L896.0 378.9 L899.6 377.8 L903.2 374.7 L906.8 371.6 L910.4 370.6 L914.0 369.8 L917.6 366.9 L921.2 363.6M862.3 399.0 L865.9 398.1 L869.5 397.1 L873.1 394.1 L876.7 390.9 L880.3 389.7 L883.9 389.0 L887.5 386.4 L891.1 382.9 L894.7 381.3 L898.3 380.8 L901.9 378.6 L905.5 375.0 L909.1 373.0 L912.7 372.5 L916.3 370.7 L919.9 367.2 L923.5 364.8M864.6 400.5 L868.2 400.0 L871.8 397.9 L875.4 394.4 L879.0 392.2 L882.6 391.7 L886.2 390.1 L889.8 386.6 L893.4 384.0 L897.0 383.3 L900.6 382.1 L904.2 378.9 L907.8 375.9 L911.4 374.9 L915.0 374.0 L918.6 371.1 L922.2 367.8 L925.8 366.6M866.9 402.4 L870.5 401.4 L874.1 398.3 L877.7 395.2 L881.3 394.1 L884.9 393.3 L888.5 390.5 L892.1 387.2 L895.7 385.7 L899.3 385.1 L902.9 382.7 L906.5 379.2 L910.1 377.4 L913.7 376.9 L917.3 374.9 L920.9 371.4 L924.5 369.1 L928.1 368.6M869.2 404.3 L872.8 402.1 L876.4 398.6 L880.0 396.6 L883.6 396.0 L887.2 394.3 L890.8 390.8 L894.4 388.3 L898.0 387.7 L901.6 386.3 L905.2 383.0 L908.8 380.2 L912.4 379.3 L916.0 378.3 L919.6 375.3 L923.2 372.1 L926.8 371.0 L930.4 370.2M871.5 405.6 L875.1 402.4 L878.7 399.4 L882.3 398.5 L885.9 397.6 L889.5 394.7 L893.1 391.4 L896.7 390.1 L900.3 389.4 L903.9 386.9 L907.5 383.5 L911.1 381.7 L914.7 381.2 L918.3 379.1 L921.9 375.6 L925.5 373.5 L929.1 372.9 L932.7 371.2" stroke="#0b0b0a" stroke-width="1.15" fill="none"/></g>
<g clip-path="url(#ventclip)"><path d="M724.0 313.0L859.0 388.6M726.1 311.9L861.1 387.5M728.2 310.7L863.2 386.3M730.3 309.6L865.3 385.2M732.4 308.4L867.4 384.0M734.5 307.2L869.5 382.9M736.6 306.1L871.6 381.7M738.7 304.9L873.7 380.6M740.8 303.8L875.8 379.4M742.9 302.6L877.9 378.2M745.0 301.5L880.0 377.1M747.1 300.4L882.1 376.0M749.2 299.2L884.2 374.8M751.3 298.1L886.3 373.7M753.4 296.9L888.4 372.5M755.5 295.8L890.5 371.4" stroke="#45433f" stroke-width="0.5" fill="none" opacity="0.8"/></g>
<polygon points="845.9,379.3 862.5,370 852.5,383.7" fill="#5f5c55" stroke="#111" stroke-width="0.5"/>
<polygon points="756.5,294.3 749,298.3 762,297.2" fill="#55524c" stroke="none"/>
<polygon points="718.3,319.8 733.5,328.3 737.0,326.1 721.9,317.6" fill="#2a2927" stroke="#111" stroke-width="0.5" stroke-linejoin="round" />
<polygon points="700.7,345.7 651.6,375.9 651.1,371.2 700.3,341.0" fill="#57544d" stroke="#111" stroke-width="0.8" stroke-linejoin="round" />
<polygon points="674.1,389.4 662.2,396.8 661.8,392.1 673.7,384.7" fill="#57544d" stroke="#111" stroke-width="0.8" stroke-linejoin="round" />
<polygon points="861.6,438.4 700.7,345.7 700.3,341.0 861.5,433.6" fill="#45423c" stroke="#111" stroke-width="0.8" stroke-linejoin="round" />
<polygon points="712.5,334.4 706.7,337.9 706.6,335.9 712.3,332.4" fill="#57544d" stroke="#111" stroke-width="0.8" stroke-linejoin="round" />
<polygon points="774.4,369.7 712.5,334.4 712.3,332.4 774.3,367.6" fill="#45423c" stroke="#111" stroke-width="0.8" stroke-linejoin="round" />
<polygon points="800.6,385.0 794.8,388.7 794.7,386.7 800.5,383.0" fill="#57544d" stroke="#111" stroke-width="0.8" stroke-linejoin="round" />
<polygon points="827.3,400.2 800.6,385.0 800.5,383.0 827.2,398.2" fill="#45423c" stroke="#111" stroke-width="0.8" stroke-linejoin="round" />
<polygon points="833.1,403.1 827.6,406.8 827.5,404.7 833.1,401.0" fill="#57544d" stroke="#111" stroke-width="0.8" stroke-linejoin="round" />
<polygon points="873.6,426.2 833.1,403.1 833.1,401.0 873.6,424.1" fill="#45423c" stroke="#111" stroke-width="0.8" stroke-linejoin="round" />
<polygon points="879.6,432.6 831.4,465.3 831.2,460.5 879.4,427.9" fill="#57544d" stroke="#111" stroke-width="0.8" stroke-linejoin="round" />
<polygon points="925.7,459.0 879.6,432.6 879.4,427.9 925.7,454.2" fill="#45423c" stroke="#111" stroke-width="0.8" stroke-linejoin="round" />
<polygon points="811.9,481.7 824.2,473.3 824.0,468.5 811.6,476.9" fill="#57544d" stroke="#111" stroke-width="0.8" stroke-linejoin="round" />
<polygon points="824.2,473.3 836.7,480.7 836.5,475.9 824.0,468.5" fill="#45423c" stroke="#111" stroke-width="0.8" stroke-linejoin="round" />
<polygon points="836.7,480.7 843.2,476.3 843.0,471.5 836.5,475.9" fill="#57544d" stroke="#111" stroke-width="0.8" stroke-linejoin="round" />
<polygon points="843.2,476.3 863.1,488.1 862.9,483.2 843.0,471.5" fill="#45423c" stroke="#111" stroke-width="0.8" stroke-linejoin="round" />
<polygon points="820.5,494.8 826.7,490.6 826.5,485.8 820.3,490.0" fill="#57544d" stroke="#111" stroke-width="0.8" stroke-linejoin="round" />
<polygon points="857.1,492.2 869.5,499.5 869.4,494.7 856.9,487.4" fill="#45423c" stroke="#111" stroke-width="0.8" stroke-linejoin="round" />
<polygon points="620.5,396.7 848.4,536.1 848.0,523.5 619.1,384.5" fill="url(#tbV)" stroke="#111" stroke-width="0.8" stroke-linejoin="round" />
<polygon points="848.4,536.1 944.7,468.4 944.7,455.9 848.0,523.5" fill="#5e5b53" stroke="#111" stroke-width="0.8" stroke-linejoin="round" />
<path d="M619.1 384.5 L848.0 523.5 L944.7 455.9 L715.0 325.9Z M700.3 341.0 L651.1 371.2 L673.7 384.7 L661.8 392.1 L779.5 462.9 L791.9 454.6 L812.3 466.8 L861.5 433.6Z M706.6 335.9 L768.5 371.3 L774.3 367.6 L712.3 332.4Z M794.7 386.7 L821.4 401.9 L827.2 398.2 L800.5 383.0Z M827.5 404.7 L868.0 427.9 L873.6 424.1 L833.1 401.0Z M831.2 460.5 L877.4 487.7 L925.7 454.2 L879.4 427.9Z M811.6 476.9 L824.0 468.5 L836.5 475.9 L843.0 471.5 L862.9 483.2 L856.9 487.4 L869.4 494.7 L856.8 503.5 L844.9 496.4 L838.3 500.9 L820.3 490.0 L826.5 485.8Z" fill="url(#tbTop)" fill-rule="evenodd" stroke="#111" stroke-width="0.8" stroke-linejoin="round" />
<polyline points="712.1,327.6 941.8,457.8" fill="none" stroke="#222" stroke-width="0.7"/>
<polyline points="704.1,338.7 865.3,431.0" fill="none" stroke="#333" stroke-width="0.5"/>
<path d="M475.6 508.3 L491.5 519.3 L594.2 463.7 L578.2 453.4Z" fill="#555" fill-rule="evenodd" opacity="0.16" filter="url(#sh2)"/><path d="M660.1 641.2 L678.1 653.6 L786.5 586.6 L768.5 575.0Z" fill="#555" fill-rule="evenodd" opacity="0.16" filter="url(#sh2)"/><path d="M566.5 571.0 L581.0 581.0 L613.7 562.1 L599.2 552.3Z" fill="#555" fill-rule="evenodd" opacity="0.16" filter="url(#sh2)"/><path d="M444.3 515.3 L653.1 661.8 L667.2 653.1 L458.2 507.9Z" fill="#555" fill-rule="evenodd" opacity="0.15" filter="url(#sh)"/>
<polygon points="566.6,429.3 574.6,434.4 547.3,448.8 539.4,443.7" fill="#8c887e" stroke="#111" stroke-width="0.8" stroke-linejoin="round" />
<polygon points="538.1,434.9 546.1,440.0 471.6,491.1 463.7,485.7" fill="#8c887e" stroke="#111" stroke-width="0.8" stroke-linejoin="round" />
<polygon points="463.7,485.7 471.6,491.1 474.3,507.4 466.5,502.0" fill="#67665f" stroke="#111" stroke-width="0.8" stroke-linejoin="round" />
<polygon points="474.3,507.4 576.9,452.6 574.6,434.4 547.3,448.8 546.1,440.0 471.6,491.1" fill="#4d4a44" stroke="#111" stroke-width="0.8" stroke-linejoin="round" />
<polygon points="524.0,443.8 529.6,447.4 529.3,444.9 523.7,441.2" fill="#67665f" stroke="#111" stroke-width="0.8" stroke-linejoin="round" />
<polygon points="529.6,447.4 539.9,442.0 539.5,439.5 529.3,444.9" fill="#4d4a44" stroke="#111" stroke-width="0.8" stroke-linejoin="round" />
<path d="M523.7 441.2 L529.3 444.9 L539.5 439.5 L534.0 435.9Z" fill="#8c887e" fill-rule="evenodd" stroke="#111" stroke-width="0.8" stroke-linejoin="round" />
<polygon points="586.3,524.4 596.6,531.2 564.2,554.0 554.0,547.1" fill="#8c887e" stroke="#111" stroke-width="0.8" stroke-linejoin="round" />
<polygon points="554.0,547.1 564.2,554.0 566.5,571.0 556.4,564.0" fill="#67665f" stroke="#111" stroke-width="0.8" stroke-linejoin="round" />
<polygon points="566.5,571.0 599.2,552.3 596.6,531.2 564.2,554.0" fill="#4d4a44" stroke="#111" stroke-width="0.8" stroke-linejoin="round" />
<polygon points="456.9,507.1 654.7,644.4 652.9,627.5 454.1,490.6" fill="#67665f" stroke="#111" stroke-width="0.8" stroke-linejoin="round" />
<polygon points="654.7,644.4 664.4,638.5 662.6,621.6 652.9,627.5" fill="#4d4a44" stroke="#111" stroke-width="0.8" stroke-linejoin="round" />
<path d="M454.1 490.6 L652.9 627.5 L662.6 621.6 L463.7 485.5Z" fill="#8c887e" fill-rule="evenodd" stroke="#111" stroke-width="0.8" stroke-linejoin="round" />
<polygon points="757.6,560.5 768.0,567.2 729.2,590.8 718.8,583.9" fill="#8c887e" stroke="#111" stroke-width="0.8" stroke-linejoin="round" />
<polygon points="717.3,565.5 727.7,572.3 662.6,621.4 652.2,614.3" fill="#8c887e" stroke="#111" stroke-width="0.8" stroke-linejoin="round" />
<polygon points="642.5,620.3 652.9,627.5 654.7,644.4 644.4,637.3" fill="#67665f" stroke="#111" stroke-width="0.8" stroke-linejoin="round" />
<polygon points="652.2,614.3 662.6,621.4 652.9,627.5 642.5,620.3" fill="#8c887e" stroke="#111" stroke-width="0.8" stroke-linejoin="round" />
<polygon points="654.7,644.4 768.5,575.0 768.0,567.2 729.2,590.8 727.7,572.3 662.6,621.4 652.9,627.5" fill="#4d4a44" stroke="#111" stroke-width="0.8" stroke-linejoin="round" />
<polygon points="1378.3,552.7 1463.7,597.4 1464.2,594.8 1378.7,550.2" fill="#504e48" stroke="#111" stroke-width="0.8" stroke-linejoin="round" />
<polygon points="1463.7,597.4 1474.5,588.7 1475.0,586.2 1464.2,594.8" fill="#55524b" stroke="#111" stroke-width="0.8" stroke-linejoin="round" />
<path d="M1378.7 550.2 L1464.2 594.8 L1475.0 586.2 L1389.6 541.9Z" fill="#6a665e" fill-rule="evenodd" stroke="#111" stroke-width="0.8" stroke-linejoin="round" />
<polygon points="1390.7,554.2 1453.3,586.9 1460.9,580.9 1398.3,548.4" fill="#65615a" stroke="#111" stroke-width="0.6" stroke-linejoin="round" />
<polygon points="1382.6,550.0 1390.7,554.2 1398.3,548.4 1390.2,544.2" fill="#5b5851" stroke="#111" stroke-width="0.6" stroke-linejoin="round" />
<polygon points="1453.3,586.9 1463.6,592.2 1471.2,586.2 1460.9,580.9" fill="#5b5851" stroke="#111" stroke-width="0.6" stroke-linejoin="round" />
<path d="M1380.1 539.7L1388.3 544.0" stroke="#222" stroke-width="3.2" stroke-linecap="round"/><path d="M1380.1 539.7L1388.3 544.0" stroke="#9a978f" stroke-width="1.8" stroke-linecap="round"/>
<path d="M1371.5 546.2L1379.8 550.5" stroke="#222" stroke-width="3.2" stroke-linecap="round"/><path d="M1371.5 546.2L1379.8 550.5" stroke="#9a978f" stroke-width="1.8" stroke-linecap="round"/>
<path d="M1465.2 595.1L1475.5 600.5" stroke="#222" stroke-width="3.2" stroke-linecap="round"/><path d="M1465.2 595.1L1475.5 600.5" stroke="#9a978f" stroke-width="1.8" stroke-linecap="round"/>
<path d="M1303.3 598.0 L1429.7 667.2 L1456.4 645.2 L1330.5 577.5Z M1332.6 608.9 L1424.1 658.9 L1444.7 642.1 L1353.4 592.9Z" fill="#555" fill-rule="evenodd" opacity="0.3" filter="url(#sh)"/>
<polygon points="1363,591 1372,584 1453,612 1444,621" fill="#666" opacity="0.3" filter="url(#sh2)"/>
<polygon points="1357.0,568.5 1336.0,584.4 1336.6,579.8 1357.7,563.8" fill="#57544d" stroke="#111" stroke-width="0.8" stroke-linejoin="round" />
<polygon points="1449.2,617.4 1357.0,568.5 1357.7,563.8 1450.0,612.7" fill="#494740" stroke="#111" stroke-width="0.8" stroke-linejoin="round" />
<polygon points="1306.4,574.3 1433.9,643.3 1434.9,637.7 1307.1,568.8" fill="#504e48" stroke="#111" stroke-width="0.8" stroke-linejoin="round" />
<polygon points="1433.9,643.3 1460.8,621.3 1461.8,615.8 1434.9,637.7" fill="#55524b" stroke="#111" stroke-width="0.8" stroke-linejoin="round" />
<path d="M1307.1 568.8 L1434.9 637.7 L1461.8 615.8 L1334.5 548.5Z M1336.6 579.8 L1429.2 629.5 L1450.0 612.7 L1357.7 563.8Z" fill="#706c64" fill-rule="evenodd" stroke="#111" stroke-width="0.8" stroke-linejoin="round" />
<ellipse cx="1340.3" cy="570.3" rx="1.9" ry="1.4" fill="#5f5c55" stroke="#222" stroke-width="0.6"/>
<ellipse cx="1442.9" cy="624.6" rx="1.9" ry="1.4" fill="#5f5c55" stroke="#222" stroke-width="0.6"/>
<path d="M967.1 543.3 L984.4 553.6 L1004.4 540.6 L987.1 530.5Z" fill="#555" fill-rule="evenodd" opacity="0.2" filter="url(#sh2)"/>
<path d="M997.0 559.9 L1014.7 570.4 L1033.8 557.7 L1016.1 547.4Z" fill="#555" fill-rule="evenodd" opacity="0.2" filter="url(#sh2)"/>
<path d="M948.2 654.6 L970.7 668.7 L980.5 662.0 L958.0 647.9Z" fill="#555" fill-rule="evenodd" opacity="0.2" filter="url(#sh2)"/>
<polygon points="981.4,548.4 1000.4,536.0 1000.5,532.1 981.4,544.4" fill="#4e4b45" stroke="#111" stroke-width="0.8" stroke-linejoin="round" />
<polygon points="967.5,540.2 981.4,548.4 981.4,544.4 967.5,536.2" fill="#5a5852" stroke="#111" stroke-width="0.8" stroke-linejoin="round" />
<path d="M967.5 536.2 L981.4 544.4 L1000.5 532.1 L986.6 524.0Z" fill="#6a665f" fill-rule="evenodd" stroke="#111" stroke-width="0.8" stroke-linejoin="round" />
<polygon points="981.2,543.4 999.5,531.5 999.6,529.4 981.2,541.3" fill="#2b2a27" stroke="#111" stroke-width="0.8" stroke-linejoin="round" />
<polygon points="969.2,536.3 981.2,543.4 981.2,541.3 969.2,534.2" fill="#2b2a27" stroke="#111" stroke-width="0.8" stroke-linejoin="round" />
<path d="M969.2 534.2 L981.2 541.3 L999.6 529.4 L987.6 522.5Z" fill="#6a665f" fill-rule="evenodd" stroke="#111" stroke-width="0.8" stroke-linejoin="round" />
<polygon points="981.4,542.3 1000.5,530.0 1000.6,525.6 981.5,537.9" fill="#4e4b45" stroke="#111" stroke-width="0.8" stroke-linejoin="round" />
<polygon points="967.5,534.1 981.4,542.3 981.5,537.9 967.6,529.7" fill="#5a5852" stroke="#111" stroke-width="0.8" stroke-linejoin="round" />
<path d="M967.6 529.7 L981.5 537.9 L1000.6 525.6 L986.7 517.5Z" fill="#6a665f" fill-rule="evenodd" stroke="#111" stroke-width="0.8" stroke-linejoin="round" />
<polygon points="990.3,538.5 997.6,533.8 997.6,529.4 990.4,534.1" fill="#4e4b45" stroke="#111" stroke-width="0.8" stroke-linejoin="round" />
<polygon points="985.6,535.8 990.3,538.5 990.4,534.1 985.7,531.4" fill="#5a5852" stroke="#111" stroke-width="0.8" stroke-linejoin="round" />
<path d="M985.7 531.4 L990.4 534.1 L997.6 529.4 L993.0 526.7Z" fill="#6a665f" fill-rule="evenodd" stroke="#111" stroke-width="0.8" stroke-linejoin="round" />
<polygon points="1010.9,564.2 1029.6,551.9 1029.9,542.9 1011.1,555.2" fill="#4e4b45" stroke="#111" stroke-width="0.8" stroke-linejoin="round" />
<polygon points="998.0,556.6 1010.9,564.2 1011.1,555.2 998.2,547.6" fill="#5a5852" stroke="#111" stroke-width="0.8" stroke-linejoin="round" />
<path d="M998.2 547.6 L1011.1 555.2 L1029.9 542.9 L1016.9 535.3Z" fill="#6a665f" fill-rule="evenodd" stroke="#111" stroke-width="0.8" stroke-linejoin="round" />
<polygon points="997.0,559.2 1006.2,564.6 1006.3,559.8 997.1,554.4" fill="#5a5852" stroke="#111" stroke-width="0.8" stroke-linejoin="round" />
<polygon points="1006.2,564.6 1008.8,563.0 1008.9,558.1 1006.3,559.8" fill="#4e4b45" stroke="#111" stroke-width="0.8" stroke-linejoin="round" />
<path d="M997.1 554.4 L1006.3 559.8 L1008.9 558.1 L999.6 552.7Z" fill="#6a665f" fill-rule="evenodd" stroke="#111" stroke-width="0.8" stroke-linejoin="round" />
<polygon points="1021.1,560.4 1029.3,555.1 1029.5,546.0 1021.4,551.4" fill="#4e4b45" stroke="#111" stroke-width="0.8" stroke-linejoin="round" />
<polygon points="1016.8,557.9 1021.1,560.4 1021.4,551.4 1017.0,548.9" fill="#5a5852" stroke="#111" stroke-width="0.8" stroke-linejoin="round" />
<path d="M1017.0 548.9 L1021.4 551.4 L1029.5 546.0 L1025.2 543.5Z" fill="#6a665f" fill-rule="evenodd" stroke="#111" stroke-width="0.8" stroke-linejoin="round" />
<polygon points="927.7,637.7 932.9,641.0 932.9,635.5 927.7,632.2" fill="#33322f" stroke="#111" stroke-width="0.8" stroke-linejoin="round" />
<polygon points="932.9,641.0 937.6,637.9 937.6,632.3 932.9,635.5" fill="#2b2a28" stroke="#111" stroke-width="0.8" stroke-linejoin="round" />
<path d="M927.7 632.2 L932.9 635.5 L937.6 632.3 L932.4 629.1Z" fill="#3a3936" fill-rule="evenodd" stroke="#111" stroke-width="0.8" stroke-linejoin="round" />
<polygon points="930.4,632.2 932.8,633.7 932.8,625.9 930.4,624.4" fill="#33322f" stroke="#111" stroke-width="0.8" stroke-linejoin="round" />
<polygon points="932.8,633.7 935.0,632.2 934.9,624.5 932.8,625.9" fill="#2b2a28" stroke="#111" stroke-width="0.8" stroke-linejoin="round" />
<path d="M930.4 624.4 L932.8 625.9 L934.9 624.5 L932.5 623.0Z" fill="#3a3936" fill-rule="evenodd" stroke="#111" stroke-width="0.8" stroke-linejoin="round" />
<polygon points="951.2,653.9 968.5,664.8 968.6,659.2 951.2,648.3" fill="#45433e" stroke="#111" stroke-width="0.8" stroke-linejoin="round" />
<polygon points="968.5,664.8 975.6,660.0 975.6,654.4 968.6,659.2" fill="#3a3936" stroke="#111" stroke-width="0.8" stroke-linejoin="round" />
<path d="M951.2 648.3 L968.6 659.2 L975.6 654.4 L958.3 643.5Z" fill="#5f5c55" fill-rule="evenodd" stroke="#111" stroke-width="0.8" stroke-linejoin="round" />
<polygon points="953.6,648.5 968.1,657.6 968.2,647.7 953.6,638.6" fill="#45433e" stroke="#111" stroke-width="0.8" stroke-linejoin="round" />
<polygon points="968.1,657.6 973.4,654.0 973.5,644.1 968.2,647.7" fill="#3a3936" stroke="#111" stroke-width="0.8" stroke-linejoin="round" />
<path d="M953.6 638.6 L968.2 647.7 L973.5 644.1 L958.9 635.1Z" fill="#5f5c55" fill-rule="evenodd" stroke="#111" stroke-width="0.8" stroke-linejoin="round" />
<path d="M983.4 637.2 L1277.1 818.6 L1383.9 739.5 L1378.8 727.0 L1270.9 796.2 L988.8 628.3Z" fill="#555" fill-rule="evenodd" opacity="0.3" filter="url(#sh)"/>
<polygon points="981.5,619.5 1272.3,797.7 1272.9,793.5 981.5,615.5" fill="#55534c" stroke="#111" stroke-width="0.8" stroke-linejoin="round" />
<polyline points="981.5,617.4 1272.6,795.5" fill="none" stroke="#111" stroke-width="0.6"/>
<polygon points="1264.4,788.4 1350.3,709.9 1359.9,732.3 1272.4,797.0" fill="#5b5851" stroke="#111" stroke-width="0.8" stroke-linejoin="round" />
<polyline points="1267.2,791.5 1352.7,714.8" fill="none" stroke="#222" stroke-width="0.6"/>
<polygon points="1283.6,781.2 1350.6,718.9 1356.3,732.1 1296.2,781.3" fill="#32312e" stroke="#111" stroke-width="0.6" stroke-linejoin="round" />
<polygon points="1293.9,774.7 1301.6,766.9 1304.9,771.4 1297.3,778.8" fill="#6f6c65" stroke="#111" stroke-width="0.5" stroke-linejoin="round" />
<polygon points="1312.1,759.2 1321.5,749.9 1324.6,755.2 1315.3,764.1" fill="#6f6c65" stroke="#111" stroke-width="0.5" stroke-linejoin="round" />
<ellipse cx="1333.9" cy="741.4" rx="2.6" ry="2.2" fill="#8a877f" stroke="#222" stroke-width="0.6"/>
<ellipse cx="1343.6" cy="733.2" rx="2.6" ry="2.2" fill="#8a877f" stroke="#222" stroke-width="0.6"/>
<polygon points="1017.9,620.9 1277.9,778.3 1387.9,688.2 1247.4,609.4 1235.1,618.5 1118.2,552.4" fill="url(#bcFloor)" stroke="#111" stroke-width="0.6" stroke-linejoin="round" />
<polygon points="1118.2,552.4 1235.1,618.5 1237.8,592.6 1119.7,526.8" fill="url(#bcWall)" stroke="#111" stroke-width="0.8" stroke-linejoin="round" />
<polygon points="1078.8,579.3 1118.2,552.4 1119.7,526.8 1080.0,553.6" fill="#48453f" stroke="#111" stroke-width="0.8" stroke-linejoin="round" />
<polygon points="1050.1,585.1 1058.4,590.0 1079.0,575.9 1070.7,571.2" fill="#5f5c55" stroke="#111" stroke-width="0.6" stroke-linejoin="round" />
<polygon points="1050.1,585.1 1070.7,571.2 1071.5,553.6 1050.7,569.8" fill="#4a4741" stroke="#111" stroke-width="0.6" stroke-linejoin="round" />
<polygon points="1070.7,571.2 1079.0,575.9 1080.0,553.6 1071.7,548.8" fill="#68675f" stroke="#111" stroke-width="0.6" stroke-linejoin="round" />
<polygon points="1078.7,579.2 1078.8,579.3 1080.0,553.6 1079.9,553.5" fill="#68675f" stroke="#111" stroke-width="0.6" stroke-linejoin="round" />
<polygon points="1017.9,620.9 1058.2,593.3 1059.0,574.7 1018.3,606.4" fill="#47443e" stroke="#111" stroke-width="0.8" stroke-linejoin="round" />
<polygon points="1058.2,593.3 1078.8,579.3 1079.0,575.9 1058.4,590.0" fill="#47443e" stroke="#111" stroke-width="0.8" stroke-linejoin="round" />
<polygon points="1070.9,568.2 1078.8,579.3 1080.0,553.6 1071.7,548.8" fill="#6a6962" stroke="#111" stroke-width="0.6" stroke-linejoin="round" />
<polygon points="1059.1,592.6 1079.4,604.5 1099.9,590.3 1079.7,578.6" fill="#6d6a61" stroke="#111" stroke-width="0.7" stroke-linejoin="round" />
<polygon points="1235.1,618.5 1245.7,610.7 1248.5,584.9 1237.8,592.6" fill="#5b5851" stroke="#111" stroke-width="0.8" stroke-linejoin="round" />
<polyline points="1238.0,616.4 1241.8,589.8" fill="none" stroke="#111" stroke-width="0.5"/>
<polygon points="981.5,615.5 1264.4,788.4 1350.4,709.8 1343.2,705.7 1279.7,763.6 1018.3,606.4 1059.0,574.7 1050.7,569.8 1071.5,553.6 1079.8,558.4 1082.5,556.3 1068.4,548.2" fill="url(#bcRim)" stroke="#111" stroke-width="0.8" stroke-linejoin="round" />
<polygon points="1068.4,548.3 1082.5,556.4 1082.7,551.8 1068.6,543.7" fill="#8a867d" stroke="#111" stroke-width="0.6" stroke-linejoin="round" />
<polygon points="1068.6,543.7 1082.7,551.8 1119.7,526.8 1237.8,592.6 1248.5,584.9 1231.6,575.5 1233.3,574.3 1118.1,510.7" fill="#726e66" stroke="#111" stroke-width="0.8" stroke-linejoin="round" />
<polyline points="1071.2,545.2 1118.6,513.5 1229.1,574.6" fill="none" stroke="#222" stroke-width="0.6"/>
<polyline points="1069.9,550.3 986.2,615.2 1264.3,784.9" fill="none" stroke="#333" stroke-width="0.6"/>
<ellipse cx="996.6" cy="614.1" rx="1.9" ry="1.4" fill="#5f5c55" stroke="#222" stroke-width="0.6"/>
<ellipse cx="1119.5" cy="518.8" rx="1.9" ry="1.4" fill="#5f5c55" stroke="#222" stroke-width="0.6"/>
<ellipse cx="1229.8" cy="579.5" rx="1.9" ry="1.4" fill="#5f5c55" stroke="#222" stroke-width="0.6"/>
<ellipse cx="1132.8" cy="694.2" rx="1.9" ry="1.4" fill="#5f5c55" stroke="#222" stroke-width="0.6"/>
<ellipse cx="1267.6" cy="778.2" rx="1.9" ry="1.4" fill="#5f5c55" stroke="#222" stroke-width="0.6"/>
<polygon points="1262.0,752.9 1279.7,763.6 1285.9,758.0 1268.1,747.4" fill="url(#bcRim)" stroke="#111" stroke-width="0.6" stroke-linejoin="round" />
<polyline points="1262.0,752.9 1268.1,747.4 1285.9,758.0" fill="none" stroke="#111" stroke-width="0.7"/>
<polygon points="1352.9,684.4 1372.8,695.7 1377.2,668.2 1357.0,657.0" fill="#54524c" stroke="#111" stroke-width="0.8" stroke-linejoin="round" />
<polygon points="1372.8,695.7 1380.2,689.6 1384.6,662.2 1377.2,668.2" fill="#4a4842" stroke="#111" stroke-width="0.8" stroke-linejoin="round" />
<path d="M1357.0 657.0 L1377.2 668.2 L1384.6 662.2 L1364.5 651.0Z" fill="#67635b" fill-rule="evenodd" stroke="#111" stroke-width="0.8" stroke-linejoin="round" />
<polygon points="1392.7,706.4 1403.8,697.1 1408.5,669.7 1397.2,678.9" fill="#58554e" stroke="#111" stroke-width="0.8" stroke-linejoin="round" />
<polygon points="1381.1,699.9 1392.7,706.4 1397.2,678.9 1385.6,672.4" fill="#514f49" stroke="#111" stroke-width="0.8" stroke-linejoin="round" />
<path d="M1385.6 672.4 L1397.2 678.9 L1408.5 669.7 L1396.9 663.2Z" fill="#726e66" fill-rule="evenodd" stroke="#111" stroke-width="0.8" stroke-linejoin="round" />
<polygon points="1370.7,724.6 1392.7,706.4 1395.9,686.7 1373.8,704.8" fill="#4f4d47" stroke="#111" stroke-width="0.8" stroke-linejoin="round" />
<polygon points="1352.3,714.1 1370.7,724.6 1373.8,704.8 1355.3,694.3" fill="#5a5750" stroke="#111" stroke-width="0.8" stroke-linejoin="round" />
<path d="M1355.3 694.3 L1373.8 704.8 L1395.9 686.7 L1377.5 676.4Z" fill="#77736a" fill-rule="evenodd" stroke="#111" stroke-width="0.8" stroke-linejoin="round" />
<polygon points="1362.8,691.4 1373.5,697.5 1388.8,685.0 1378.1,679.0" fill="#67635b" stroke="#111" stroke-width="0.5" stroke-linejoin="round" />
<polygon points="1361.2,732.4 1370.7,724.6 1372.9,710.9 1363.4,718.7" fill="#4f4d47" stroke="#111" stroke-width="0.8" stroke-linejoin="round" />
<polygon points="1348.7,725.2 1361.2,732.4 1363.4,718.7 1350.8,711.5" fill="#5a5750" stroke="#111" stroke-width="0.8" stroke-linejoin="round" />
<path d="M1350.8 711.5 L1363.4 718.7 L1372.9 710.9 L1360.3 703.7Z" fill="#77736a" fill-rule="evenodd" stroke="#111" stroke-width="0.8" stroke-linejoin="round" />
<polygon points="1363.5,727.1 1410.5,688.3 1413.3,672.3 1366.0,711.1" fill="#58554e" stroke="#111" stroke-width="0.8" stroke-linejoin="round" />
<polygon points="1358.7,724.4 1363.5,727.1 1366.0,711.1 1361.2,708.4" fill="#514f49" stroke="#111" stroke-width="0.8" stroke-linejoin="round" />
<path d="M1361.2 708.4 L1366.0 711.1 L1413.3 672.3 L1408.5 669.7Z" fill="#726e66" fill-rule="evenodd" stroke="#111" stroke-width="0.8" stroke-linejoin="round" />
<ellipse cx="1398.3" cy="671.1" rx="1.9" ry="1.4" fill="#5f5c55" stroke="#222" stroke-width="0.6"/>
<path d="M1353.9 818.6 L1379.0 833.8 L1439.0 781.1 L1414.1 766.7Z" fill="#555" fill-rule="evenodd" opacity="0.16" filter="url(#sh2)"/>
<polygon points="1365.9,820.3 1428.7,765.9 1431.9,748.2 1368.8,802.5" fill="#2b2a28" stroke="#000" stroke-width="0.8" stroke-linejoin="round" />
<polygon points="1355.4,814.0 1365.9,820.3 1368.8,802.5 1358.3,796.2" fill="#1e1d1b" stroke="#000" stroke-width="0.8" stroke-linejoin="round" />
<path d="M1358.3 796.2 L1368.8 802.5 L1431.9 748.2 L1421.5 742.3Z" fill="#252422" fill-rule="evenodd" stroke="#000" stroke-width="0.8" stroke-linejoin="round" />
<polygon points="1378.0,820.1 1387.0,812.3 1388.7,802.2 1379.7,810.0" fill="#2b2a28" stroke="#000" stroke-width="0.8" stroke-linejoin="round" />
<polygon points="1369.7,815.1 1378.0,820.1 1379.7,810.0 1371.4,805.1" fill="#1e1d1b" stroke="#000" stroke-width="0.8" stroke-linejoin="round" />
<path d="M1371.4 805.1 L1379.7 810.0 L1388.7 802.2 L1380.4 797.3Z" fill="#252422" fill-rule="evenodd" stroke="#000" stroke-width="0.8" stroke-linejoin="round" />
<polygon points="1397.1,803.4 1406.9,794.9 1408.7,784.9 1398.9,793.4" fill="#2b2a28" stroke="#000" stroke-width="0.8" stroke-linejoin="round" />
<polygon points="1388.9,798.5 1397.1,803.4 1398.9,793.4 1390.6,788.5" fill="#1e1d1b" stroke="#000" stroke-width="0.8" stroke-linejoin="round" />
<path d="M1390.6 788.5 L1398.9 793.4 L1408.7 784.9 L1400.4 780.1Z" fill="#252422" fill-rule="evenodd" stroke="#000" stroke-width="0.8" stroke-linejoin="round" />
<path d="M808.1 752.8 L829.1 767.3 L817.4 778.2 L978.4 891.1 L992.8 876.8 L1019.1 894.9 L1003.2 911.0 L1057.0 948.8 L1063.3 942.4 L1080.1 954.1 L1164.4 865.9 L879.8 686.8Z" fill="#555" fill-rule="evenodd" opacity="0.34" filter="url(#sh)"/>
<polygon points="807.3,737.8 828.4,752.3 828.3,749.9 807.2,735.4" fill="#66655f" stroke="#111" stroke-width="0.7" stroke-linejoin="round" />
<polygon points="816.7,763.2 978.6,875.9 978.7,873.5 816.5,760.8" fill="#66655f" stroke="#111" stroke-width="0.7" stroke-linejoin="round" />
<polygon points="978.6,875.9 993.0,861.6 993.1,859.2 978.7,873.5" fill="#5a5852" stroke="#111" stroke-width="0.7" stroke-linejoin="round" />
<polygon points="993.0,861.6 1019.5,879.7 1019.6,877.3 993.1,859.2" fill="#66655f" stroke="#111" stroke-width="0.7" stroke-linejoin="round" />
<polygon points="1080.9,938.8 1165.8,850.5 1166.0,848.1 1081.0,936.4" fill="#5a5852" stroke="#111" stroke-width="0.7" stroke-linejoin="round" />
<polygon points="1003.5,895.8 1057.7,933.6 1057.8,931.2 1003.6,893.4" fill="#66655f" stroke="#111" stroke-width="0.7" stroke-linejoin="round" />
<polygon points="1057.7,933.6 1064.0,927.1 1064.1,924.7 1057.8,931.2" fill="#5a5852" stroke="#111" stroke-width="0.7" stroke-linejoin="round" />
<polygon points="1064.0,927.1 1080.9,938.8 1081.0,936.4 1064.1,924.7" fill="#66655f" stroke="#111" stroke-width="0.7" stroke-linejoin="round" />
<path d="M807.2 735.4 L828.3 749.9 L816.5 760.8 L978.7 873.5 L993.1 859.2 L1019.6 877.3 L1003.6 893.4 L1057.8 931.2 L1064.1 924.7 L1081.0 936.4 L1166.0 848.1 L879.4 669.3Z" fill="#7a766d" fill-rule="evenodd" stroke="#111" stroke-width="0.7" stroke-linejoin="round" />
<polygon points="809.6,735.1 830.8,749.6 830.7,747.7 809.5,733.2" fill="#66655f" stroke="#111" stroke-width="0.7" stroke-linejoin="round" />
<polygon points="819.0,760.5 978.6,871.3 978.6,869.4 818.9,758.6" fill="#66655f" stroke="#111" stroke-width="0.7" stroke-linejoin="round" />
<polygon points="978.6,871.3 993.0,857.0 993.0,855.0 978.6,869.4" fill="#5a5852" stroke="#111" stroke-width="0.7" stroke-linejoin="round" />
<polygon points="993.0,857.0 1019.5,875.1 1019.5,873.1 993.0,855.0" fill="#66655f" stroke="#111" stroke-width="0.7" stroke-linejoin="round" />
<polygon points="1080.9,934.1 1163.2,848.4 1163.4,846.4 1081.0,932.1" fill="#5a5852" stroke="#111" stroke-width="0.7" stroke-linejoin="round" />
<polygon points="1003.5,891.2 1057.7,928.9 1057.8,926.9 1003.5,889.2" fill="#66655f" stroke="#111" stroke-width="0.7" stroke-linejoin="round" />
<polygon points="1057.7,928.9 1064.0,922.4 1064.1,920.4 1057.8,926.9" fill="#5a5852" stroke="#111" stroke-width="0.7" stroke-linejoin="round" />
<polygon points="1064.0,922.4 1080.9,934.1 1081.0,932.1 1064.1,920.4" fill="#66655f" stroke="#111" stroke-width="0.7" stroke-linejoin="round" />
<path d="M809.5 733.2 L830.7 747.7 L818.9 758.6 L978.6 869.4 L993.0 855.0 L1019.5 873.1 L1003.5 889.2 L1057.8 926.9 L1064.1 920.4 L1081.0 932.1 L1163.4 846.4 L879.4 669.1Z" fill="#7f7b72" fill-rule="evenodd" stroke="#111" stroke-width="0.7" stroke-linejoin="round" />
<polygon points="869.4,681.2 954.1,735.0 954.1,732.8 869.3,679.0" fill="#484641" stroke="#111" stroke-width="0.7" stroke-linejoin="round" />
<polygon points="954.1,735.0 963.5,726.0 963.5,723.8 954.1,732.8" fill="#3d3b38" stroke="#111" stroke-width="0.7" stroke-linejoin="round" />
<path d="M869.3 679.0 L954.1 732.8 L963.5 723.8 L878.5 670.6Z" fill="#4d4b46" fill-rule="evenodd" stroke="#111" stroke-width="0.7" stroke-linejoin="round" />
<polygon points="870.2,678.7 886.2,688.8 888.1,683.5 872.0,673.4" fill="#5d5b55" stroke="#111" stroke-width="0.6" stroke-linejoin="round" />
<polygon points="886.2,688.8 894.2,681.4 892.2,679.7 888.1,683.5" fill="#3b3936" stroke="#111" stroke-width="0.6" stroke-linejoin="round" />
<polygon points="872.0,673.4 888.1,683.5 892.2,679.7 876.2,669.7" fill="#52504b" stroke="#111" stroke-width="0.6" stroke-linejoin="round" />
<polygon points="886.8,689.2 902.9,699.4 904.9,694.1 888.7,683.9" fill="#5d5b55" stroke="#111" stroke-width="0.6" stroke-linejoin="round" />
<polygon points="902.9,699.4 911.0,691.9 909.0,690.2 904.9,694.1" fill="#3b3936" stroke="#111" stroke-width="0.6" stroke-linejoin="round" />
<polygon points="888.7,683.9 904.9,694.1 909.0,690.2 892.8,680.1" fill="#52504b" stroke="#111" stroke-width="0.6" stroke-linejoin="round" />
<polygon points="903.6,699.8 919.9,710.2 921.9,704.8 905.5,694.5" fill="#5d5b55" stroke="#111" stroke-width="0.6" stroke-linejoin="round" />
<polygon points="919.9,710.2 928.0,702.6 926.0,700.9 921.9,704.8" fill="#3b3936" stroke="#111" stroke-width="0.6" stroke-linejoin="round" />
<polygon points="905.5,694.5 921.9,704.8 926.0,700.9 909.6,690.6" fill="#52504b" stroke="#111" stroke-width="0.6" stroke-linejoin="round" />
<polygon points="920.5,710.6 937.1,721.0 939.0,715.6 922.5,705.2" fill="#5d5b55" stroke="#111" stroke-width="0.6" stroke-linejoin="round" />
<polygon points="937.1,721.0 945.2,713.3 943.2,711.7 939.0,715.6" fill="#3b3936" stroke="#111" stroke-width="0.6" stroke-linejoin="round" />
<polygon points="922.5,705.2 939.0,715.6 943.2,711.7 926.7,701.3" fill="#52504b" stroke="#111" stroke-width="0.6" stroke-linejoin="round" />
<polygon points="937.7,721.4 954.4,732.0 956.4,726.6 939.7,716.0" fill="#5d5b55" stroke="#111" stroke-width="0.6" stroke-linejoin="round" />
<polygon points="954.4,732.0 962.6,724.2 960.6,722.6 956.4,726.6" fill="#3b3936" stroke="#111" stroke-width="0.6" stroke-linejoin="round" />
<polygon points="939.7,716.0 956.4,726.6 960.6,722.6 943.9,712.1" fill="#52504b" stroke="#111" stroke-width="0.6" stroke-linejoin="round" />
<polygon points="989.4,757.3 1022.0,778.0 1022.1,775.8 989.4,755.1" fill="#484641" stroke="#111" stroke-width="0.7" stroke-linejoin="round" />
<polygon points="1022.0,778.0 1031.5,768.7 1031.6,766.5 1022.1,775.8" fill="#3d3b38" stroke="#111" stroke-width="0.7" stroke-linejoin="round" />
<path d="M989.4 755.1 L1022.1 775.8 L1031.6 766.5 L998.9 746.0Z" fill="#4d4b46" fill-rule="evenodd" stroke="#111" stroke-width="0.7" stroke-linejoin="round" />
<polygon points="990.4,754.7 1005.9,764.6 1008.0,759.1 992.4,749.3" fill="#5d5b55" stroke="#111" stroke-width="0.6" stroke-linejoin="round" />
<polygon points="1005.9,764.6 1014.2,756.5 1012.3,755.0 1008.0,759.1" fill="#3b3936" stroke="#111" stroke-width="0.6" stroke-linejoin="round" />
<polygon points="992.4,749.3 1008.0,759.1 1012.3,755.0 996.7,745.2" fill="#52504b" stroke="#111" stroke-width="0.6" stroke-linejoin="round" />
<polygon points="1006.6,765.0 1022.3,775.0 1024.5,769.5 1008.7,759.5" fill="#5d5b55" stroke="#111" stroke-width="0.6" stroke-linejoin="round" />
<polygon points="1022.3,775.0 1030.7,766.8 1028.8,765.3 1024.5,769.5" fill="#3b3936" stroke="#111" stroke-width="0.6" stroke-linejoin="round" />
<polygon points="1008.7,759.5 1024.5,769.5 1028.8,765.3 1013.0,755.4" fill="#52504b" stroke="#111" stroke-width="0.6" stroke-linejoin="round" />
<polygon points="1032.3,784.5 1085.8,818.5 1085.9,816.2 1032.4,782.3" fill="#484641" stroke="#111" stroke-width="0.7" stroke-linejoin="round" />
<polygon points="1085.8,818.5 1095.5,808.7 1095.6,806.5 1085.9,816.2" fill="#3d3b38" stroke="#111" stroke-width="0.7" stroke-linejoin="round" />
<path d="M1032.4 782.3 L1085.9 816.2 L1095.6 806.5 L1041.9 772.9Z" fill="#4d4b46" fill-rule="evenodd" stroke="#111" stroke-width="0.7" stroke-linejoin="round" />
<polygon points="1033.3,781.9 1050.3,792.7 1052.5,787.1 1035.5,776.4" fill="#5d5b55" stroke="#111" stroke-width="0.6" stroke-linejoin="round" />
<polygon points="1050.3,792.7 1058.7,784.4 1056.8,782.8 1052.5,787.1" fill="#3b3936" stroke="#111" stroke-width="0.6" stroke-linejoin="round" />
<polygon points="1035.5,776.4 1052.5,787.1 1056.8,782.8 1039.7,772.2" fill="#52504b" stroke="#111" stroke-width="0.6" stroke-linejoin="round" />
<polygon points="1051.0,793.1 1068.1,804.0 1070.4,798.4 1053.2,787.5" fill="#5d5b55" stroke="#111" stroke-width="0.6" stroke-linejoin="round" />
<polygon points="1068.1,804.0 1076.5,795.6 1074.7,794.1 1070.4,798.4" fill="#3b3936" stroke="#111" stroke-width="0.6" stroke-linejoin="round" />
<polygon points="1053.2,787.5 1070.4,798.4 1074.7,794.1 1057.5,783.3" fill="#52504b" stroke="#111" stroke-width="0.6" stroke-linejoin="round" />
<polygon points="1068.8,804.4 1086.2,815.4 1088.4,809.8 1071.1,798.8" fill="#5d5b55" stroke="#111" stroke-width="0.6" stroke-linejoin="round" />
<polygon points="1086.2,815.4 1094.6,806.9 1092.8,805.4 1088.4,809.8" fill="#3b3936" stroke="#111" stroke-width="0.6" stroke-linejoin="round" />
<polygon points="1071.1,798.8 1088.4,809.8 1092.8,805.4 1075.4,794.5" fill="#52504b" stroke="#111" stroke-width="0.6" stroke-linejoin="round" />
<polygon points="862.8,688.5 851.1,699.2 855.4,691.6 861.9,685.6" fill="#7d7c76" stroke="#111" stroke-width="0.7" stroke-linejoin="round" />
<polygon points="851.1,699.2 863.3,707.1 862.4,696.2 855.4,691.6" fill="#74736d" stroke="#111" stroke-width="0.7" stroke-linejoin="round" />
<polygon points="863.3,707.1 875.0,696.3 869.0,690.1 862.4,696.2" fill="#5c5a54" stroke="#111" stroke-width="0.7" stroke-linejoin="round" />
<polygon points="855.4,691.6 862.4,696.2 869.0,690.1 861.9,685.6" fill="url(#kbTop)" stroke="#111" stroke-width="0.7" stroke-linejoin="round" />
<polygon points="875.7,696.8 864.0,707.6 868.4,700.0 875.0,694.0" fill="#7d7c76" stroke="#111" stroke-width="0.7" stroke-linejoin="round" />
<polygon points="864.0,707.6 876.3,715.6 875.5,704.6 868.4,700.0" fill="#74736d" stroke="#111" stroke-width="0.7" stroke-linejoin="round" />
<polygon points="876.3,715.6 888.1,704.7 882.1,698.5 875.5,704.6" fill="#5c5a54" stroke="#111" stroke-width="0.7" stroke-linejoin="round" />
<polygon points="868.4,700.0 875.5,704.6 882.1,698.5 875.0,694.0" fill="url(#kbTop)" stroke="#111" stroke-width="0.7" stroke-linejoin="round" />
<polygon points="888.8,705.2 877.1,716.1 881.5,708.5 888.1,702.4" fill="#7d7c76" stroke="#111" stroke-width="0.7" stroke-linejoin="round" />
<polygon points="877.1,716.1 889.5,724.2 888.7,713.2 881.5,708.5" fill="#74736d" stroke="#111" stroke-width="0.7" stroke-linejoin="round" />
<polygon points="889.5,724.2 901.3,713.2 895.3,707.0 888.7,713.2" fill="#5c5a54" stroke="#111" stroke-width="0.7" stroke-linejoin="round" />
<polygon points="881.5,708.5 888.7,713.2 895.3,707.0 888.1,702.4" fill="url(#kbTop)" stroke="#111" stroke-width="0.7" stroke-linejoin="round" />
<polygon points="902.0,713.6 890.2,724.6 894.7,717.1 901.4,710.9" fill="#7d7c76" stroke="#111" stroke-width="0.7" stroke-linejoin="round" />
<polygon points="890.2,724.6 902.8,732.8 902.0,721.7 894.7,717.1" fill="#74736d" stroke="#111" stroke-width="0.7" stroke-linejoin="round" />
<polygon points="902.8,732.8 914.6,721.7 908.6,715.5 902.0,721.7" fill="#5c5a54" stroke="#111" stroke-width="0.7" stroke-linejoin="round" />
<polygon points="894.7,717.1 902.0,721.7 908.6,715.5 901.4,710.9" fill="url(#kbTop)" stroke="#111" stroke-width="0.7" stroke-linejoin="round" />
<polygon points="915.4,722.2 903.5,733.3 908.1,725.7 914.7,719.4" fill="#7d7c76" stroke="#111" stroke-width="0.7" stroke-linejoin="round" />
<polygon points="903.5,733.3 916.2,741.5 915.4,730.4 908.1,725.7" fill="#74736d" stroke="#111" stroke-width="0.7" stroke-linejoin="round" />
<polygon points="916.2,741.5 928.0,730.3 922.1,724.1 915.4,730.4" fill="#5c5a54" stroke="#111" stroke-width="0.7" stroke-linejoin="round" />
<polygon points="908.1,725.7 915.4,730.4 922.1,724.1 914.7,719.4" fill="url(#kbTop)" stroke="#111" stroke-width="0.7" stroke-linejoin="round" />
<polygon points="928.8,730.8 916.9,742.0 921.6,734.4 928.2,728.1" fill="#7d7c76" stroke="#111" stroke-width="0.7" stroke-linejoin="round" />
<polygon points="916.9,742.0 929.7,750.3 928.9,739.1 921.6,734.4" fill="#74736d" stroke="#111" stroke-width="0.7" stroke-linejoin="round" />
<polygon points="929.7,750.3 941.6,738.9 935.6,732.8 928.9,739.1" fill="#5c5a54" stroke="#111" stroke-width="0.7" stroke-linejoin="round" />
<polygon points="921.6,734.4 928.9,739.1 935.6,732.8 928.2,728.1" fill="url(#kbTop)" stroke="#111" stroke-width="0.7" stroke-linejoin="round" />
<polygon points="942.4,739.4 930.5,750.8 935.1,743.1 941.9,736.8" fill="#7d7c76" stroke="#111" stroke-width="0.7" stroke-linejoin="round" />
<polygon points="930.5,750.8 943.3,759.1 942.6,748.0 935.1,743.1" fill="#74736d" stroke="#111" stroke-width="0.7" stroke-linejoin="round" />
<polygon points="943.3,759.1 955.3,747.7 949.3,741.6 942.6,748.0" fill="#5c5a54" stroke="#111" stroke-width="0.7" stroke-linejoin="round" />
<polygon points="935.1,743.1 942.6,748.0 949.3,741.6 941.9,736.8" fill="url(#kbTop)" stroke="#111" stroke-width="0.7" stroke-linejoin="round" />
<polygon points="956.1,748.2 944.1,759.6 948.8,752.0 955.6,745.6" fill="#7d7c76" stroke="#111" stroke-width="0.7" stroke-linejoin="round" />
<polygon points="944.1,759.6 957.1,768.1 956.4,756.9 948.8,752.0" fill="#74736d" stroke="#111" stroke-width="0.7" stroke-linejoin="round" />
<polygon points="957.1,768.1 969.1,756.5 963.1,750.4 956.4,756.9" fill="#5c5a54" stroke="#111" stroke-width="0.7" stroke-linejoin="round" />
<polygon points="948.8,752.0 956.4,756.9 963.1,750.4 955.6,745.6" fill="url(#kbTop)" stroke="#111" stroke-width="0.7" stroke-linejoin="round" />
<polygon points="969.9,757.0 957.9,768.6 962.7,760.9 969.4,754.4" fill="#7d7c76" stroke="#111" stroke-width="0.7" stroke-linejoin="round" />
<polygon points="957.9,768.6 970.9,777.1 970.3,765.8 962.7,760.9" fill="#74736d" stroke="#111" stroke-width="0.7" stroke-linejoin="round" />
<polygon points="970.9,777.1 983.0,765.4 977.0,759.3 970.3,765.8" fill="#5c5a54" stroke="#111" stroke-width="0.7" stroke-linejoin="round" />
<polygon points="962.7,760.9 970.3,765.8 977.0,759.3 969.4,754.4" fill="url(#kbTop)" stroke="#111" stroke-width="0.7" stroke-linejoin="round" />
<polygon points="983.8,766.0 971.7,777.6 976.6,769.9 983.4,763.4" fill="#7d7c76" stroke="#111" stroke-width="0.7" stroke-linejoin="round" />
<polygon points="971.7,777.6 984.9,786.2 984.3,774.9 976.6,769.9" fill="#74736d" stroke="#111" stroke-width="0.7" stroke-linejoin="round" />
<polygon points="984.9,786.2 997.0,774.4 991.1,768.3 984.3,774.9" fill="#5c5a54" stroke="#111" stroke-width="0.7" stroke-linejoin="round" />
<polygon points="976.6,769.9 984.3,774.9 991.1,768.3 983.4,763.4" fill="url(#kbTop)" stroke="#111" stroke-width="0.7" stroke-linejoin="round" />
<polygon points="997.8,774.9 985.7,786.7 990.7,779.0 997.5,772.4" fill="#7d7c76" stroke="#111" stroke-width="0.7" stroke-linejoin="round" />
<polygon points="985.7,786.7 999.1,795.4 998.4,784.0 990.7,779.0" fill="#74736d" stroke="#111" stroke-width="0.7" stroke-linejoin="round" />
<polygon points="999.1,795.4 1011.2,783.5 1005.3,777.4 998.4,784.0" fill="#5c5a54" stroke="#111" stroke-width="0.7" stroke-linejoin="round" />
<polygon points="990.7,779.0 998.4,784.0 1005.3,777.4 997.5,772.4" fill="url(#kbTop)" stroke="#111" stroke-width="0.7" stroke-linejoin="round" />
<polygon points="1012.0,784.0 999.9,795.9 1004.9,788.2 1011.7,781.5" fill="#7d7c76" stroke="#111" stroke-width="0.7" stroke-linejoin="round" />
<polygon points="999.9,795.9 1013.3,804.6 1012.7,793.2 1004.9,788.2" fill="#74736d" stroke="#111" stroke-width="0.7" stroke-linejoin="round" />
<polygon points="1013.3,804.6 1025.5,792.6 1019.6,786.5 1012.7,793.2" fill="#5c5a54" stroke="#111" stroke-width="0.7" stroke-linejoin="round" />
<polygon points="1004.9,788.2 1012.7,793.2 1019.6,786.5 1011.7,781.5" fill="url(#kbTop)" stroke="#111" stroke-width="0.7" stroke-linejoin="round" />
<polygon points="1026.3,793.2 1014.1,805.2 1019.3,797.5 1026.1,790.7" fill="#7d7c76" stroke="#111" stroke-width="0.7" stroke-linejoin="round" />
<polygon points="1014.1,805.2 1027.7,814.0 1027.1,802.5 1019.3,797.5" fill="#74736d" stroke="#111" stroke-width="0.7" stroke-linejoin="round" />
<polygon points="1027.7,814.0 1039.9,801.9 1034.0,795.8 1027.1,802.5" fill="#5c5a54" stroke="#111" stroke-width="0.7" stroke-linejoin="round" />
<polygon points="1019.3,797.5 1027.1,802.5 1034.0,795.8 1026.1,790.7" fill="url(#kbTop)" stroke="#111" stroke-width="0.7" stroke-linejoin="round" />
<polygon points="1040.7,802.4 1028.5,814.5 1033.7,806.8 1040.6,800.0" fill="#7d7c76" stroke="#111" stroke-width="0.7" stroke-linejoin="round" />
<polygon points="1028.5,814.5 1042.2,823.4 1041.7,811.9 1033.7,806.8" fill="#74736d" stroke="#111" stroke-width="0.7" stroke-linejoin="round" />
<polygon points="1042.2,823.4 1054.5,811.2 1048.5,805.1 1041.7,811.9" fill="#5c5a54" stroke="#111" stroke-width="0.7" stroke-linejoin="round" />
<polygon points="1033.7,806.8 1041.7,811.9 1048.5,805.1 1040.6,800.0" fill="url(#kbTop)" stroke="#111" stroke-width="0.7" stroke-linejoin="round" />
<polygon points="1055.3,811.7 1043.1,823.9 1048.3,816.2 1055.2,809.4" fill="#7d7c76" stroke="#111" stroke-width="0.7" stroke-linejoin="round" />
<polygon points="1043.1,823.9 1056.9,832.9 1056.3,821.4 1048.3,816.2" fill="#74736d" stroke="#111" stroke-width="0.7" stroke-linejoin="round" />
<polygon points="1056.9,832.9 1069.1,820.6 1063.2,814.5 1056.3,821.4" fill="#5c5a54" stroke="#111" stroke-width="0.7" stroke-linejoin="round" />
<polygon points="1048.3,816.2 1056.3,821.4 1063.2,814.5 1055.2,809.4" fill="url(#kbTop)" stroke="#111" stroke-width="0.7" stroke-linejoin="round" />
<polygon points="850.4,699.8 838.6,710.6 842.9,703.1 849.5,697.0" fill="#7d7c76" stroke="#111" stroke-width="0.7" stroke-linejoin="round" />
<polygon points="838.6,710.6 857.3,722.9 856.4,712.0 842.9,703.1" fill="#74736d" stroke="#111" stroke-width="0.7" stroke-linejoin="round" />
<polygon points="857.3,722.9 869.1,712.0 863.1,705.8 856.4,712.0" fill="#5c5a54" stroke="#111" stroke-width="0.7" stroke-linejoin="round" />
<polygon points="842.9,703.1 856.4,712.0 863.1,705.8 849.5,697.0" fill="url(#kbTop)" stroke="#111" stroke-width="0.7" stroke-linejoin="round" />
<polygon points="869.8,712.5 858.0,723.4 862.4,715.9 869.0,709.7" fill="#7d7c76" stroke="#111" stroke-width="0.7" stroke-linejoin="round" />
<polygon points="858.0,723.4 870.3,731.6 869.5,720.5 862.4,715.9" fill="#74736d" stroke="#111" stroke-width="0.7" stroke-linejoin="round" />
<polygon points="870.3,731.6 882.2,720.5 876.2,714.4 869.5,720.5" fill="#5c5a54" stroke="#111" stroke-width="0.7" stroke-linejoin="round" />
<polygon points="862.4,715.9 869.5,720.5 876.2,714.4 869.0,709.7" fill="url(#kbTop)" stroke="#111" stroke-width="0.7" stroke-linejoin="round" />
<polygon points="882.9,721.0 871.1,732.1 875.5,724.5 882.2,718.3" fill="#7d7c76" stroke="#111" stroke-width="0.7" stroke-linejoin="round" />
<polygon points="871.1,732.1 883.5,740.3 882.7,729.2 875.5,724.5" fill="#74736d" stroke="#111" stroke-width="0.7" stroke-linejoin="round" />
<polygon points="883.5,740.3 895.4,729.1 889.4,723.0 882.7,729.2" fill="#5c5a54" stroke="#111" stroke-width="0.7" stroke-linejoin="round" />
<polygon points="875.5,724.5 882.7,729.2 889.4,723.0 882.2,718.3" fill="url(#kbTop)" stroke="#111" stroke-width="0.7" stroke-linejoin="round" />
<polygon points="896.2,729.6 884.3,740.8 888.7,733.2 895.4,726.9" fill="#7d7c76" stroke="#111" stroke-width="0.7" stroke-linejoin="round" />
<polygon points="884.3,740.8 896.8,749.0 896.0,737.9 888.7,733.2" fill="#74736d" stroke="#111" stroke-width="0.7" stroke-linejoin="round" />
<polygon points="896.8,749.0 908.7,737.8 902.7,731.7 896.0,737.9" fill="#5c5a54" stroke="#111" stroke-width="0.7" stroke-linejoin="round" />
<polygon points="888.7,733.2 896.0,737.9 902.7,731.7 895.4,726.9" fill="url(#kbTop)" stroke="#111" stroke-width="0.7" stroke-linejoin="round" />
<polygon points="909.5,738.3 897.6,749.5 902.1,742.0 908.8,735.6" fill="#7d7c76" stroke="#111" stroke-width="0.7" stroke-linejoin="round" />
<polygon points="897.6,749.5 910.2,757.9 909.4,746.8 902.1,742.0" fill="#74736d" stroke="#111" stroke-width="0.7" stroke-linejoin="round" />
<polygon points="910.2,757.9 922.2,746.6 916.2,740.4 909.4,746.8" fill="#5c5a54" stroke="#111" stroke-width="0.7" stroke-linejoin="round" />
<polygon points="902.1,742.0 909.4,746.8 916.2,740.4 908.8,735.6" fill="url(#kbTop)" stroke="#111" stroke-width="0.7" stroke-linejoin="round" />
<polygon points="923.0,747.1 911.0,758.4 915.6,750.8 922.3,744.4" fill="#7d7c76" stroke="#111" stroke-width="0.7" stroke-linejoin="round" />
<polygon points="911.0,758.4 923.7,766.8 923.0,755.7 915.6,750.8" fill="#74736d" stroke="#111" stroke-width="0.7" stroke-linejoin="round" />
<polygon points="923.7,766.8 935.7,755.4 929.7,749.2 923.0,755.7" fill="#5c5a54" stroke="#111" stroke-width="0.7" stroke-linejoin="round" />
<polygon points="915.6,750.8 923.0,755.7 929.7,749.2 922.3,744.4" fill="url(#kbTop)" stroke="#111" stroke-width="0.7" stroke-linejoin="round" />
<polygon points="936.5,755.9 924.5,767.3 929.2,759.7 936.0,753.3" fill="#7d7c76" stroke="#111" stroke-width="0.7" stroke-linejoin="round" />
<polygon points="924.5,767.3 937.4,775.8 936.7,764.6 929.2,759.7" fill="#74736d" stroke="#111" stroke-width="0.7" stroke-linejoin="round" />
<polygon points="937.4,775.8 949.4,764.3 943.4,758.1 936.7,764.6" fill="#5c5a54" stroke="#111" stroke-width="0.7" stroke-linejoin="round" />
<polygon points="929.2,759.7 936.7,764.6 943.4,758.1 936.0,753.3" fill="url(#kbTop)" stroke="#111" stroke-width="0.7" stroke-linejoin="round" />
<polygon points="950.2,764.8 938.2,776.4 942.9,768.7 949.7,762.2" fill="#7d7c76" stroke="#111" stroke-width="0.7" stroke-linejoin="round" />
<polygon points="938.2,776.4 951.1,784.9 950.4,773.7 942.9,768.7" fill="#74736d" stroke="#111" stroke-width="0.7" stroke-linejoin="round" />
<polygon points="951.1,784.9 963.3,773.3 957.3,767.1 950.4,773.7" fill="#5c5a54" stroke="#111" stroke-width="0.7" stroke-linejoin="round" />
<polygon points="942.9,768.7 950.4,773.7 957.3,767.1 949.7,762.2" fill="url(#kbTop)" stroke="#111" stroke-width="0.7" stroke-linejoin="round" />
<polygon points="964.0,773.8 951.9,785.5 956.8,777.8 963.6,771.3" fill="#7d7c76" stroke="#111" stroke-width="0.7" stroke-linejoin="round" />
<polygon points="951.9,785.5 965.0,794.1 964.4,782.8 956.8,777.8" fill="#74736d" stroke="#111" stroke-width="0.7" stroke-linejoin="round" />
<polygon points="965.0,794.1 977.2,782.3 971.2,776.2 964.4,782.8" fill="#5c5a54" stroke="#111" stroke-width="0.7" stroke-linejoin="round" />
<polygon points="956.8,777.8 964.4,782.8 971.2,776.2 963.6,771.3" fill="url(#kbTop)" stroke="#111" stroke-width="0.7" stroke-linejoin="round" />
<polygon points="978.0,782.9 965.8,794.6 970.7,787.0 977.6,780.4" fill="#7d7c76" stroke="#111" stroke-width="0.7" stroke-linejoin="round" />
<polygon points="965.8,794.6 979.1,803.4 978.4,792.0 970.7,787.0" fill="#74736d" stroke="#111" stroke-width="0.7" stroke-linejoin="round" />
<polygon points="979.1,803.4 991.2,791.5 985.3,785.4 978.4,792.0" fill="#5c5a54" stroke="#111" stroke-width="0.7" stroke-linejoin="round" />
<polygon points="970.7,787.0 978.4,792.0 985.3,785.4 977.6,780.4" fill="url(#kbTop)" stroke="#111" stroke-width="0.7" stroke-linejoin="round" />
<polygon points="992.1,792.0 979.9,803.9 984.9,796.3 991.7,789.6" fill="#7d7c76" stroke="#111" stroke-width="0.7" stroke-linejoin="round" />
<polygon points="979.9,803.9 993.2,812.7 992.6,801.3 984.9,796.3" fill="#74736d" stroke="#111" stroke-width="0.7" stroke-linejoin="round" />
<polygon points="993.2,812.7 1005.4,800.7 999.5,794.6 992.6,801.3" fill="#5c5a54" stroke="#111" stroke-width="0.7" stroke-linejoin="round" />
<polygon points="984.9,796.3 992.6,801.3 999.5,794.6 991.7,789.6" fill="url(#kbTop)" stroke="#111" stroke-width="0.7" stroke-linejoin="round" />
<polygon points="1006.3,801.2 994.0,813.2 999.1,805.6 1006.0,798.8" fill="#7d7c76" stroke="#111" stroke-width="0.7" stroke-linejoin="round" />
<polygon points="994.0,813.2 1007.5,822.1 1006.9,810.7 999.1,805.6" fill="#74736d" stroke="#111" stroke-width="0.7" stroke-linejoin="round" />
<polygon points="1007.5,822.1 1019.8,810.0 1013.8,803.9 1006.9,810.7" fill="#5c5a54" stroke="#111" stroke-width="0.7" stroke-linejoin="round" />
<polygon points="999.1,805.6 1006.9,810.7 1013.8,803.9 1006.0,798.8" fill="url(#kbTop)" stroke="#111" stroke-width="0.7" stroke-linejoin="round" />
<polygon points="1020.6,810.6 1008.3,822.7 1013.4,815.0 1020.3,808.2" fill="#7d7c76" stroke="#111" stroke-width="0.7" stroke-linejoin="round" />
<polygon points="1008.3,822.7 1021.9,831.7 1021.3,820.2 1013.4,815.0" fill="#74736d" stroke="#111" stroke-width="0.7" stroke-linejoin="round" />
<polygon points="1021.9,831.7 1034.2,819.4 1028.2,813.3 1021.3,820.2" fill="#5c5a54" stroke="#111" stroke-width="0.7" stroke-linejoin="round" />
<polygon points="1013.4,815.0 1021.3,820.2 1028.2,813.3 1020.3,808.2" fill="url(#kbTop)" stroke="#111" stroke-width="0.7" stroke-linejoin="round" />
<polygon points="1035.0,820.0 1022.7,832.2 1027.9,824.5 1034.9,817.6" fill="#7d7c76" stroke="#111" stroke-width="0.7" stroke-linejoin="round" />
<polygon points="1022.7,832.2 1043.8,846.1 1043.2,834.6 1027.9,824.5" fill="#74736d" stroke="#111" stroke-width="0.7" stroke-linejoin="round" />
<polygon points="1043.8,846.1 1056.1,833.7 1050.2,827.6 1043.2,834.6" fill="#5c5a54" stroke="#111" stroke-width="0.7" stroke-linejoin="round" />
<polygon points="1027.9,824.5 1043.2,834.6 1050.2,827.6 1034.9,817.6" fill="url(#kbTop)" stroke="#111" stroke-width="0.7" stroke-linejoin="round" />
<polygon points="837.9,711.3 826.1,722.1 830.3,714.6 836.9,708.5" fill="#7d7c76" stroke="#111" stroke-width="0.7" stroke-linejoin="round" />
<polygon points="826.1,722.1 847.9,736.8 847.0,725.8 830.3,714.6" fill="#74736d" stroke="#111" stroke-width="0.7" stroke-linejoin="round" />
<polygon points="847.9,736.8 859.8,725.7 853.7,719.6 847.0,725.8" fill="#5c5a54" stroke="#111" stroke-width="0.7" stroke-linejoin="round" />
<polygon points="830.3,714.6 847.0,725.8 853.7,719.6 836.9,708.5" fill="url(#kbTop)" stroke="#111" stroke-width="0.7" stroke-linejoin="round" />
<polygon points="860.5,726.2 848.6,737.3 853.0,729.7 859.7,723.5" fill="#7d7c76" stroke="#111" stroke-width="0.7" stroke-linejoin="round" />
<polygon points="848.6,737.3 860.9,745.5 860.1,734.5 853.0,729.7" fill="#74736d" stroke="#111" stroke-width="0.7" stroke-linejoin="round" />
<polygon points="860.9,745.5 872.9,734.4 866.8,728.2 860.1,734.5" fill="#5c5a54" stroke="#111" stroke-width="0.7" stroke-linejoin="round" />
<polygon points="853.0,729.7 860.1,734.5 866.8,728.2 859.7,723.5" fill="url(#kbTop)" stroke="#111" stroke-width="0.7" stroke-linejoin="round" />
<polygon points="873.6,734.9 861.7,746.0 866.1,738.5 872.8,732.2" fill="#7d7c76" stroke="#111" stroke-width="0.7" stroke-linejoin="round" />
<polygon points="861.7,746.0 874.1,754.4 873.3,743.3 866.1,738.5" fill="#74736d" stroke="#111" stroke-width="0.7" stroke-linejoin="round" />
<polygon points="874.1,754.4 886.1,743.1 880.0,737.0 873.3,743.3" fill="#5c5a54" stroke="#111" stroke-width="0.7" stroke-linejoin="round" />
<polygon points="866.1,738.5 873.3,743.3 880.0,737.0 872.8,732.2" fill="url(#kbTop)" stroke="#111" stroke-width="0.7" stroke-linejoin="round" />
<polygon points="886.8,743.6 874.9,754.9 879.3,747.3 886.1,741.0" fill="#7d7c76" stroke="#111" stroke-width="0.7" stroke-linejoin="round" />
<polygon points="874.9,754.9 887.4,763.3 886.6,752.1 879.3,747.3" fill="#74736d" stroke="#111" stroke-width="0.7" stroke-linejoin="round" />
<polygon points="887.4,763.3 899.4,751.9 893.3,745.8 886.6,752.1" fill="#5c5a54" stroke="#111" stroke-width="0.7" stroke-linejoin="round" />
<polygon points="879.3,747.3 886.6,752.1 893.3,745.8 886.1,741.0" fill="url(#kbTop)" stroke="#111" stroke-width="0.7" stroke-linejoin="round" />
<polygon points="900.2,752.4 888.1,763.8 892.7,756.2 899.4,749.8" fill="#7d7c76" stroke="#111" stroke-width="0.7" stroke-linejoin="round" />
<polygon points="888.1,763.8 900.8,772.3 900.0,761.1 892.7,756.2" fill="#74736d" stroke="#111" stroke-width="0.7" stroke-linejoin="round" />
<polygon points="900.8,772.3 912.8,760.8 906.8,754.7 900.0,761.1" fill="#5c5a54" stroke="#111" stroke-width="0.7" stroke-linejoin="round" />
<polygon points="892.7,756.2 900.0,761.1 906.8,754.7 899.4,749.8" fill="url(#kbTop)" stroke="#111" stroke-width="0.7" stroke-linejoin="round" />
<polygon points="913.6,761.3 901.5,772.8 906.1,765.2 912.9,758.7" fill="#7d7c76" stroke="#111" stroke-width="0.7" stroke-linejoin="round" />
<polygon points="901.5,772.8 914.3,781.3 913.5,770.1 906.1,765.2" fill="#74736d" stroke="#111" stroke-width="0.7" stroke-linejoin="round" />
<polygon points="914.3,781.3 926.4,769.8 920.3,763.6 913.5,770.1" fill="#5c5a54" stroke="#111" stroke-width="0.7" stroke-linejoin="round" />
<polygon points="906.1,765.2 913.5,770.1 920.3,763.6 912.9,758.7" fill="url(#kbTop)" stroke="#111" stroke-width="0.7" stroke-linejoin="round" />
<polygon points="927.2,770.3 915.1,781.8 919.7,774.2 926.6,767.7" fill="#7d7c76" stroke="#111" stroke-width="0.7" stroke-linejoin="round" />
<polygon points="915.1,781.8 927.9,790.5 927.2,779.2 919.7,774.2" fill="#74736d" stroke="#111" stroke-width="0.7" stroke-linejoin="round" />
<polygon points="927.9,790.5 940.1,778.8 934.0,772.7 927.2,779.2" fill="#5c5a54" stroke="#111" stroke-width="0.7" stroke-linejoin="round" />
<polygon points="919.7,774.2 927.2,779.2 934.0,772.7 926.6,767.7" fill="url(#kbTop)" stroke="#111" stroke-width="0.7" stroke-linejoin="round" />
<polygon points="940.9,779.3 928.7,791.0 933.4,783.4 940.3,776.8" fill="#7d7c76" stroke="#111" stroke-width="0.7" stroke-linejoin="round" />
<polygon points="928.7,791.0 941.7,799.7 941.0,788.4 933.4,783.4" fill="#74736d" stroke="#111" stroke-width="0.7" stroke-linejoin="round" />
<polygon points="941.7,799.7 953.9,787.9 947.8,781.8 941.0,788.4" fill="#5c5a54" stroke="#111" stroke-width="0.7" stroke-linejoin="round" />
<polygon points="933.4,783.4 941.0,788.4 947.8,781.8 940.3,776.8" fill="url(#kbTop)" stroke="#111" stroke-width="0.7" stroke-linejoin="round" />
<polygon points="954.7,788.5 942.5,800.2 947.3,792.6 954.2,786.0" fill="#7d7c76" stroke="#111" stroke-width="0.7" stroke-linejoin="round" />
<polygon points="942.5,800.2 955.6,809.0 954.9,797.7 947.3,792.6" fill="#74736d" stroke="#111" stroke-width="0.7" stroke-linejoin="round" />
<polygon points="955.6,809.0 967.8,797.1 961.8,791.0 954.9,797.7" fill="#5c5a54" stroke="#111" stroke-width="0.7" stroke-linejoin="round" />
<polygon points="947.3,792.6 954.9,797.7 961.8,791.0 954.2,786.0" fill="url(#kbTop)" stroke="#111" stroke-width="0.7" stroke-linejoin="round" />
<polygon points="968.6,797.7 956.4,809.6 961.3,801.9 968.1,795.2" fill="#7d7c76" stroke="#111" stroke-width="0.7" stroke-linejoin="round" />
<polygon points="956.4,809.6 969.6,818.4 968.9,807.0 961.3,801.9" fill="#74736d" stroke="#111" stroke-width="0.7" stroke-linejoin="round" />
<polygon points="969.6,818.4 981.8,806.4 975.8,800.3 968.9,807.0" fill="#5c5a54" stroke="#111" stroke-width="0.7" stroke-linejoin="round" />
<polygon points="961.3,801.9 968.9,807.0 975.8,800.3 968.1,795.2" fill="url(#kbTop)" stroke="#111" stroke-width="0.7" stroke-linejoin="round" />
<polygon points="982.7,807.0 970.4,819.0 975.3,811.3 982.3,804.6" fill="#7d7c76" stroke="#111" stroke-width="0.7" stroke-linejoin="round" />
<polygon points="970.4,819.0 983.7,827.9 983.1,816.5 975.3,811.3" fill="#74736d" stroke="#111" stroke-width="0.7" stroke-linejoin="round" />
<polygon points="983.7,827.9 996.0,815.8 990.0,809.7 983.1,816.5" fill="#5c5a54" stroke="#111" stroke-width="0.7" stroke-linejoin="round" />
<polygon points="975.3,811.3 983.1,816.5 990.0,809.7 982.3,804.6" fill="url(#kbTop)" stroke="#111" stroke-width="0.7" stroke-linejoin="round" />
<polygon points="996.8,816.3 984.5,828.5 989.6,820.8 996.5,814.0" fill="#7d7c76" stroke="#111" stroke-width="0.7" stroke-linejoin="round" />
<polygon points="984.5,828.5 998.0,837.5 997.4,826.0 989.6,820.8" fill="#74736d" stroke="#111" stroke-width="0.7" stroke-linejoin="round" />
<polygon points="998.0,837.5 1010.3,825.3 1004.3,819.2 997.4,826.0" fill="#5c5a54" stroke="#111" stroke-width="0.7" stroke-linejoin="round" />
<polygon points="989.6,820.8 997.4,826.0 1004.3,819.2 996.5,814.0" fill="url(#kbTop)" stroke="#111" stroke-width="0.7" stroke-linejoin="round" />
<polygon points="1011.2,825.8 998.8,838.0 1003.9,830.4 1010.9,823.5" fill="#7d7c76" stroke="#111" stroke-width="0.7" stroke-linejoin="round" />
<polygon points="998.8,838.0 1030.6,859.4 1030.0,847.8 1003.9,830.4" fill="#74736d" stroke="#111" stroke-width="0.7" stroke-linejoin="round" />
<polygon points="1030.6,859.4 1043.0,846.8 1037.0,840.8 1030.0,847.8" fill="#5c5a54" stroke="#111" stroke-width="0.7" stroke-linejoin="round" />
<polygon points="1003.9,830.4 1030.0,847.8 1037.0,840.8 1010.9,823.5" fill="url(#kbTop)" stroke="#111" stroke-width="0.7" stroke-linejoin="round" />
<polygon points="825.3,722.8 813.4,733.7 817.6,726.2 824.3,720.1" fill="#7d7c76" stroke="#111" stroke-width="0.7" stroke-linejoin="round" />
<polygon points="813.4,733.7 841.7,753.0 840.8,741.9 817.6,726.2" fill="#74736d" stroke="#111" stroke-width="0.7" stroke-linejoin="round" />
<polygon points="841.7,753.0 853.7,741.8 847.6,735.7 840.8,741.9" fill="#5c5a54" stroke="#111" stroke-width="0.7" stroke-linejoin="round" />
<polygon points="817.6,726.2 840.8,741.9 847.6,735.7 824.3,720.1" fill="url(#kbTop)" stroke="#111" stroke-width="0.7" stroke-linejoin="round" />
<polygon points="854.4,742.3 842.4,753.5 846.8,745.9 853.5,739.7" fill="#7d7c76" stroke="#111" stroke-width="0.7" stroke-linejoin="round" />
<polygon points="842.4,753.5 854.7,761.9 853.9,750.8 846.8,745.9" fill="#74736d" stroke="#111" stroke-width="0.7" stroke-linejoin="round" />
<polygon points="854.7,761.9 866.8,750.6 860.7,744.5 853.9,750.8" fill="#5c5a54" stroke="#111" stroke-width="0.7" stroke-linejoin="round" />
<polygon points="846.8,745.9 853.9,750.8 860.7,744.5 853.5,739.7" fill="url(#kbTop)" stroke="#111" stroke-width="0.7" stroke-linejoin="round" />
<polygon points="867.5,751.1 855.5,762.4 859.9,754.8 866.7,748.5" fill="#7d7c76" stroke="#111" stroke-width="0.7" stroke-linejoin="round" />
<polygon points="855.5,762.4 867.9,770.8 867.1,759.7 859.9,754.8" fill="#74736d" stroke="#111" stroke-width="0.7" stroke-linejoin="round" />
<polygon points="867.9,770.8 880.0,759.5 873.9,753.3 867.1,759.7" fill="#5c5a54" stroke="#111" stroke-width="0.7" stroke-linejoin="round" />
<polygon points="859.9,754.8 867.1,759.7 873.9,753.3 866.7,748.5" fill="url(#kbTop)" stroke="#111" stroke-width="0.7" stroke-linejoin="round" />
<polygon points="880.7,760.0 868.7,771.4 873.1,763.8 879.9,757.4" fill="#7d7c76" stroke="#111" stroke-width="0.7" stroke-linejoin="round" />
<polygon points="868.7,771.4 881.2,779.9 880.4,768.7 873.1,763.8" fill="#74736d" stroke="#111" stroke-width="0.7" stroke-linejoin="round" />
<polygon points="881.2,779.9 893.3,768.4 887.2,762.3 880.4,768.7" fill="#5c5a54" stroke="#111" stroke-width="0.7" stroke-linejoin="round" />
<polygon points="873.1,763.8 880.4,768.7 887.2,762.3 879.9,757.4" fill="url(#kbTop)" stroke="#111" stroke-width="0.7" stroke-linejoin="round" />
<polygon points="894.1,769.0 882.0,780.4 886.5,772.9 893.3,766.4" fill="#7d7c76" stroke="#111" stroke-width="0.7" stroke-linejoin="round" />
<polygon points="882.0,780.4 894.6,789.1 893.8,777.8 886.5,772.9" fill="#74736d" stroke="#111" stroke-width="0.7" stroke-linejoin="round" />
<polygon points="894.6,789.1 906.8,777.5 900.7,771.4 893.8,777.8" fill="#5c5a54" stroke="#111" stroke-width="0.7" stroke-linejoin="round" />
<polygon points="886.5,772.9 893.8,777.8 900.7,771.4 893.3,766.4" fill="url(#kbTop)" stroke="#111" stroke-width="0.7" stroke-linejoin="round" />
<polygon points="907.5,778.0 895.4,789.6 900.0,782.0 906.8,775.5" fill="#7d7c76" stroke="#111" stroke-width="0.7" stroke-linejoin="round" />
<polygon points="895.4,789.6 908.1,798.3 907.4,787.0 900.0,782.0" fill="#74736d" stroke="#111" stroke-width="0.7" stroke-linejoin="round" />
<polygon points="908.1,798.3 920.3,786.6 914.2,780.5 907.4,787.0" fill="#5c5a54" stroke="#111" stroke-width="0.7" stroke-linejoin="round" />
<polygon points="900.0,782.0 907.4,787.0 914.2,780.5 906.8,775.5" fill="url(#kbTop)" stroke="#111" stroke-width="0.7" stroke-linejoin="round" />
<polygon points="921.1,787.1 908.9,798.8 913.6,791.2 920.5,784.7" fill="#7d7c76" stroke="#111" stroke-width="0.7" stroke-linejoin="round" />
<polygon points="908.9,798.8 921.8,807.6 921.0,796.3 913.6,791.2" fill="#74736d" stroke="#111" stroke-width="0.7" stroke-linejoin="round" />
<polygon points="921.8,807.6 934.0,795.8 927.9,789.7 921.0,796.3" fill="#5c5a54" stroke="#111" stroke-width="0.7" stroke-linejoin="round" />
<polygon points="913.6,791.2 921.0,796.3 927.9,789.7 920.5,784.7" fill="url(#kbTop)" stroke="#111" stroke-width="0.7" stroke-linejoin="round" />
<polygon points="934.8,796.3 922.6,808.1 927.3,800.5 934.2,793.9" fill="#7d7c76" stroke="#111" stroke-width="0.7" stroke-linejoin="round" />
<polygon points="922.6,808.1 935.6,817.0 934.8,805.6 927.3,800.5" fill="#74736d" stroke="#111" stroke-width="0.7" stroke-linejoin="round" />
<polygon points="935.6,817.0 947.9,805.1 941.8,799.0 934.8,805.6" fill="#5c5a54" stroke="#111" stroke-width="0.7" stroke-linejoin="round" />
<polygon points="927.3,800.5 934.8,805.6 941.8,799.0 934.2,793.9" fill="url(#kbTop)" stroke="#111" stroke-width="0.7" stroke-linejoin="round" />
<polygon points="948.7,805.6 936.4,817.5 941.2,809.9 948.1,803.2" fill="#7d7c76" stroke="#111" stroke-width="0.7" stroke-linejoin="round" />
<polygon points="936.4,817.5 949.5,826.5 948.8,815.1 941.2,809.9" fill="#74736d" stroke="#111" stroke-width="0.7" stroke-linejoin="round" />
<polygon points="949.5,826.5 961.8,814.4 955.7,808.3 948.8,815.1" fill="#5c5a54" stroke="#111" stroke-width="0.7" stroke-linejoin="round" />
<polygon points="941.2,809.9 948.8,815.1 955.7,808.3 948.1,803.2" fill="url(#kbTop)" stroke="#111" stroke-width="0.7" stroke-linejoin="round" />
<polygon points="962.6,815.0 950.3,827.0 955.2,819.4 962.1,812.6" fill="#7d7c76" stroke="#111" stroke-width="0.7" stroke-linejoin="round" />
<polygon points="950.3,827.0 963.5,836.0 962.8,824.6 955.2,819.4" fill="#74736d" stroke="#111" stroke-width="0.7" stroke-linejoin="round" />
<polygon points="963.5,836.0 975.9,823.9 969.8,817.8 962.8,824.6" fill="#5c5a54" stroke="#111" stroke-width="0.7" stroke-linejoin="round" />
<polygon points="955.2,819.4 962.8,824.6 969.8,817.8 962.1,812.6" fill="url(#kbTop)" stroke="#111" stroke-width="0.7" stroke-linejoin="round" />
<polygon points="976.7,824.4 964.3,836.6 969.3,829.0 976.2,822.1" fill="#7d7c76" stroke="#111" stroke-width="0.7" stroke-linejoin="round" />
<polygon points="964.3,836.6 977.7,845.7 977.0,834.2 969.3,829.0" fill="#74736d" stroke="#111" stroke-width="0.7" stroke-linejoin="round" />
<polygon points="977.7,845.7 990.1,833.4 984.0,827.3 977.0,834.2" fill="#5c5a54" stroke="#111" stroke-width="0.7" stroke-linejoin="round" />
<polygon points="969.3,829.0 977.0,834.2 984.0,827.3 976.2,822.1" fill="url(#kbTop)" stroke="#111" stroke-width="0.7" stroke-linejoin="round" />
<polygon points="990.9,834.0 978.5,846.3 983.5,838.6 990.5,831.7" fill="#7d7c76" stroke="#111" stroke-width="0.7" stroke-linejoin="round" />
<polygon points="978.5,846.3 1017.3,872.7 1016.7,861.1 983.5,838.6" fill="#74736d" stroke="#111" stroke-width="0.7" stroke-linejoin="round" />
<polygon points="1017.3,872.7 1029.8,860.1 1023.7,854.1 1016.7,861.1" fill="#5c5a54" stroke="#111" stroke-width="0.7" stroke-linejoin="round" />
<polygon points="983.5,838.6 1016.7,861.1 1023.7,854.1 990.5,831.7" fill="url(#kbTop)" stroke="#111" stroke-width="0.7" stroke-linejoin="round" />
<polygon points="833.7,749.1 821.6,760.2 825.9,752.7 832.6,746.4" fill="#7d7c76" stroke="#111" stroke-width="0.7" stroke-linejoin="round" />
<polygon points="821.6,760.2 833.8,768.7 832.9,757.6 825.9,752.7" fill="#74736d" stroke="#111" stroke-width="0.7" stroke-linejoin="round" />
<polygon points="833.8,768.7 845.9,757.4 839.7,751.3 832.9,757.6" fill="#5c5a54" stroke="#111" stroke-width="0.7" stroke-linejoin="round" />
<polygon points="825.9,752.7 832.9,757.6 839.7,751.3 832.6,746.4" fill="url(#kbTop)" stroke="#111" stroke-width="0.7" stroke-linejoin="round" />
<polygon points="846.6,757.9 834.5,769.2 838.9,761.7 845.7,755.3" fill="#7d7c76" stroke="#111" stroke-width="0.7" stroke-linejoin="round" />
<polygon points="834.5,769.2 846.9,777.7 846.0,766.6 838.9,761.7" fill="#74736d" stroke="#111" stroke-width="0.7" stroke-linejoin="round" />
<polygon points="846.9,777.7 859.0,766.4 852.8,760.2 846.0,766.6" fill="#5c5a54" stroke="#111" stroke-width="0.7" stroke-linejoin="round" />
<polygon points="838.9,761.7 846.0,766.6 852.8,760.2 845.7,755.3" fill="url(#kbTop)" stroke="#111" stroke-width="0.7" stroke-linejoin="round" />
<polygon points="859.7,766.9 847.6,778.2 852.0,770.7 858.8,764.3" fill="#7d7c76" stroke="#111" stroke-width="0.7" stroke-linejoin="round" />
<polygon points="847.6,778.2 941.6,843.4 940.9,832.0 852.0,770.7" fill="#74736d" stroke="#111" stroke-width="0.7" stroke-linejoin="round" />
<polygon points="941.6,843.4 954.0,831.3 947.9,825.2 940.9,832.0" fill="#5c5a54" stroke="#111" stroke-width="0.7" stroke-linejoin="round" />
<polygon points="852.0,770.7 940.9,832.0 947.9,825.2 858.8,764.3" fill="url(#kbTop)" stroke="#111" stroke-width="0.7" stroke-linejoin="round" />
<polygon points="954.9,831.8 942.4,844.0 947.3,836.4 954.3,829.6" fill="#7d7c76" stroke="#111" stroke-width="0.7" stroke-linejoin="round" />
<polygon points="942.4,844.0 955.6,853.2 955.0,841.7 947.3,836.4" fill="#74736d" stroke="#111" stroke-width="0.7" stroke-linejoin="round" />
<polygon points="955.6,853.2 968.1,840.9 962.0,834.8 955.0,841.7" fill="#5c5a54" stroke="#111" stroke-width="0.7" stroke-linejoin="round" />
<polygon points="947.3,836.4 955.0,841.7 962.0,834.8 954.3,829.6" fill="url(#kbTop)" stroke="#111" stroke-width="0.7" stroke-linejoin="round" />
<polygon points="968.9,841.4 956.4,853.7 961.4,846.1 968.4,839.2" fill="#7d7c76" stroke="#111" stroke-width="0.7" stroke-linejoin="round" />
<polygon points="956.4,853.7 969.8,863.0 969.2,851.5 961.4,846.1" fill="#74736d" stroke="#111" stroke-width="0.7" stroke-linejoin="round" />
<polygon points="969.8,863.0 982.3,850.6 976.2,844.5 969.2,851.5" fill="#5c5a54" stroke="#111" stroke-width="0.7" stroke-linejoin="round" />
<polygon points="961.4,846.1 969.2,851.5 976.2,844.5 968.4,839.2" fill="url(#kbTop)" stroke="#111" stroke-width="0.7" stroke-linejoin="round" />
<polygon points="1093.7,813.9 1081.5,826.2 1087.0,818.5 1093.8,811.5" fill="#7d7c76" stroke="#111" stroke-width="0.7" stroke-linejoin="round" />
<polygon points="1081.5,826.2 1095.6,835.2 1095.1,823.6 1087.0,818.5" fill="#74736d" stroke="#111" stroke-width="0.7" stroke-linejoin="round" />
<polygon points="1095.6,835.2 1107.8,822.8 1102.0,816.7 1095.1,823.6" fill="#5c5a54" stroke="#111" stroke-width="0.7" stroke-linejoin="round" />
<polygon points="1087.0,818.5 1095.1,823.6 1102.0,816.7 1093.8,811.5" fill="url(#kbTop)" stroke="#111" stroke-width="0.7" stroke-linejoin="round" />
<polygon points="1108.7,823.3 1096.5,835.7 1102.0,828.0 1108.9,821.0" fill="#7d7c76" stroke="#111" stroke-width="0.7" stroke-linejoin="round" />
<polygon points="1096.5,835.7 1110.7,844.8 1110.2,833.2 1102.0,828.0" fill="#74736d" stroke="#111" stroke-width="0.7" stroke-linejoin="round" />
<polygon points="1110.7,844.8 1122.9,832.3 1117.1,826.2 1110.2,833.2" fill="#5c5a54" stroke="#111" stroke-width="0.7" stroke-linejoin="round" />
<polygon points="1102.0,828.0 1110.2,833.2 1117.1,826.2 1108.9,821.0" fill="url(#kbTop)" stroke="#111" stroke-width="0.7" stroke-linejoin="round" />
<polygon points="1123.8,832.8 1111.5,845.4 1117.1,837.6 1124.0,830.5" fill="#7d7c76" stroke="#111" stroke-width="0.7" stroke-linejoin="round" />
<polygon points="1111.5,845.4 1125.9,854.5 1125.4,842.9 1117.1,837.6" fill="#74736d" stroke="#111" stroke-width="0.7" stroke-linejoin="round" />
<polygon points="1125.9,854.5 1138.2,841.8 1132.4,835.8 1125.4,842.9" fill="#5c5a54" stroke="#111" stroke-width="0.7" stroke-linejoin="round" />
<polygon points="1117.1,837.6 1125.4,842.9 1132.4,835.8 1124.0,830.5" fill="url(#kbTop)" stroke="#111" stroke-width="0.7" stroke-linejoin="round" />
<polygon points="1139.0,842.4 1126.7,855.1 1132.4,847.3 1139.3,840.2" fill="#7d7c76" stroke="#111" stroke-width="0.7" stroke-linejoin="round" />
<polygon points="1126.7,855.1 1141.2,864.3 1140.8,852.6 1132.4,847.3" fill="#74736d" stroke="#111" stroke-width="0.7" stroke-linejoin="round" />
<polygon points="1141.2,864.3 1153.5,851.5 1147.7,845.5 1140.8,852.6" fill="#5c5a54" stroke="#111" stroke-width="0.7" stroke-linejoin="round" />
<polygon points="1132.4,847.3 1140.8,852.6 1147.7,845.5 1139.3,840.2" fill="url(#kbTop)" stroke="#111" stroke-width="0.7" stroke-linejoin="round" />
<polygon points="1080.8,827.0 1068.5,839.4 1073.9,831.6 1080.8,824.7" fill="#7d7c76" stroke="#111" stroke-width="0.7" stroke-linejoin="round" />
<polygon points="1068.5,839.4 1082.5,848.5 1082.0,836.9 1073.9,831.6" fill="#74736d" stroke="#111" stroke-width="0.7" stroke-linejoin="round" />
<polygon points="1082.5,848.5 1094.9,836.0 1089.0,829.9 1082.0,836.9" fill="#5c5a54" stroke="#111" stroke-width="0.7" stroke-linejoin="round" />
<polygon points="1073.9,831.6 1082.0,836.9 1089.0,829.9 1080.8,824.7" fill="url(#kbTop)" stroke="#111" stroke-width="0.7" stroke-linejoin="round" />
<polygon points="1095.7,836.5 1083.4,849.0 1088.9,841.3 1095.8,834.3" fill="#7d7c76" stroke="#111" stroke-width="0.7" stroke-linejoin="round" />
<polygon points="1083.4,849.0 1097.5,858.2 1097.1,846.6 1088.9,841.3" fill="#74736d" stroke="#111" stroke-width="0.7" stroke-linejoin="round" />
<polygon points="1097.5,858.2 1109.9,845.6 1104.0,839.5 1097.1,846.6" fill="#5c5a54" stroke="#111" stroke-width="0.7" stroke-linejoin="round" />
<polygon points="1088.9,841.3 1097.1,846.6 1104.0,839.5 1095.8,834.3" fill="url(#kbTop)" stroke="#111" stroke-width="0.7" stroke-linejoin="round" />
<polygon points="1110.8,846.1 1098.4,858.8 1104.0,851.1 1110.9,843.9" fill="#7d7c76" stroke="#111" stroke-width="0.7" stroke-linejoin="round" />
<polygon points="1098.4,858.8 1112.7,868.1 1112.3,856.4 1104.0,851.1" fill="#74736d" stroke="#111" stroke-width="0.7" stroke-linejoin="round" />
<polygon points="1112.7,868.1 1125.1,855.3 1119.2,849.2 1112.3,856.4" fill="#5c5a54" stroke="#111" stroke-width="0.7" stroke-linejoin="round" />
<polygon points="1104.0,851.1 1112.3,856.4 1119.2,849.2 1110.9,843.9" fill="url(#kbTop)" stroke="#111" stroke-width="0.7" stroke-linejoin="round" />
<polygon points="1126.0,855.9 1113.6,868.6 1119.2,860.9 1126.2,853.7" fill="#7d7c76" stroke="#111" stroke-width="0.7" stroke-linejoin="round" />
<polygon points="1113.6,868.6 1128.0,878.0 1127.6,866.3 1119.2,860.9" fill="#74736d" stroke="#111" stroke-width="0.7" stroke-linejoin="round" />
<polygon points="1128.0,878.0 1140.4,865.1 1134.6,859.1 1127.6,866.3" fill="#5c5a54" stroke="#111" stroke-width="0.7" stroke-linejoin="round" />
<polygon points="1119.2,860.9 1127.6,866.3 1134.6,859.1 1126.2,853.7" fill="url(#kbTop)" stroke="#111" stroke-width="0.7" stroke-linejoin="round" />
<polygon points="1067.7,840.1 1055.4,852.6 1060.7,844.9 1067.7,837.9" fill="#7d7c76" stroke="#111" stroke-width="0.7" stroke-linejoin="round" />
<polygon points="1055.4,852.6 1069.4,861.9 1068.9,850.3 1060.7,844.9" fill="#74736d" stroke="#111" stroke-width="0.7" stroke-linejoin="round" />
<polygon points="1069.4,861.9 1081.8,849.2 1075.8,843.2 1068.9,850.3" fill="#5c5a54" stroke="#111" stroke-width="0.7" stroke-linejoin="round" />
<polygon points="1060.7,844.9 1068.9,850.3 1075.8,843.2 1067.7,837.9" fill="url(#kbTop)" stroke="#111" stroke-width="0.7" stroke-linejoin="round" />
<polygon points="1082.6,849.8 1070.2,862.4 1075.7,854.7 1082.7,847.6" fill="#7d7c76" stroke="#111" stroke-width="0.7" stroke-linejoin="round" />
<polygon points="1070.2,862.4 1084.3,871.7 1083.9,860.1 1075.7,854.7" fill="#74736d" stroke="#111" stroke-width="0.7" stroke-linejoin="round" />
<polygon points="1084.3,871.7 1096.8,859.0 1090.9,852.9 1083.9,860.1" fill="#5c5a54" stroke="#111" stroke-width="0.7" stroke-linejoin="round" />
<polygon points="1075.7,854.7 1083.9,860.1 1090.9,852.9 1082.7,847.6" fill="url(#kbTop)" stroke="#111" stroke-width="0.7" stroke-linejoin="round" />
<polygon points="1097.7,859.6 1085.2,872.3 1090.7,864.6 1097.8,857.4" fill="#7d7c76" stroke="#111" stroke-width="0.7" stroke-linejoin="round" />
<polygon points="1085.2,872.3 1099.5,881.7 1099.0,870.0 1090.7,864.6" fill="#74736d" stroke="#111" stroke-width="0.7" stroke-linejoin="round" />
<polygon points="1099.5,881.7 1112.0,868.9 1106.0,862.8 1099.0,870.0" fill="#5c5a54" stroke="#111" stroke-width="0.7" stroke-linejoin="round" />
<polygon points="1090.7,864.6 1099.0,870.0 1106.0,862.8 1097.8,857.4" fill="url(#kbTop)" stroke="#111" stroke-width="0.7" stroke-linejoin="round" />
<polygon points="1112.8,869.4 1100.3,882.3 1106.0,874.6 1113.0,867.3" fill="#7d7c76" stroke="#111" stroke-width="0.7" stroke-linejoin="round" />
<polygon points="1100.3,882.3 1114.7,891.8 1114.3,880.0 1106.0,874.6" fill="#74736d" stroke="#111" stroke-width="0.7" stroke-linejoin="round" />
<polygon points="1114.7,891.8 1127.3,878.8 1121.3,872.8 1114.3,880.0" fill="#5c5a54" stroke="#111" stroke-width="0.7" stroke-linejoin="round" />
<polygon points="1106.0,874.6 1114.3,880.0 1121.3,872.8 1113.0,867.3" fill="url(#kbTop)" stroke="#111" stroke-width="0.7" stroke-linejoin="round" />
<polygon points="1054.6,853.4 1042.1,866.0 1047.5,858.3 1054.5,851.2" fill="#7d7c76" stroke="#111" stroke-width="0.7" stroke-linejoin="round" />
<polygon points="1042.1,866.0 1056.1,875.3 1055.6,863.7 1047.5,858.3" fill="#74736d" stroke="#111" stroke-width="0.7" stroke-linejoin="round" />
<polygon points="1056.1,875.3 1068.6,862.6 1062.6,856.6 1055.6,863.7" fill="#5c5a54" stroke="#111" stroke-width="0.7" stroke-linejoin="round" />
<polygon points="1047.5,858.3 1055.6,863.7 1062.6,856.6 1054.5,851.2" fill="url(#kbTop)" stroke="#111" stroke-width="0.7" stroke-linejoin="round" />
<polygon points="1069.5,863.2 1056.9,875.9 1062.4,868.2 1069.4,861.1" fill="#7d7c76" stroke="#111" stroke-width="0.7" stroke-linejoin="round" />
<polygon points="1056.9,875.9 1071.0,885.4 1070.5,873.7 1062.4,868.2" fill="#74736d" stroke="#111" stroke-width="0.7" stroke-linejoin="round" />
<polygon points="1071.0,885.4 1083.6,872.5 1077.6,866.5 1070.5,873.7" fill="#5c5a54" stroke="#111" stroke-width="0.7" stroke-linejoin="round" />
<polygon points="1062.4,868.2 1070.5,873.7 1077.6,866.5 1069.4,861.1" fill="url(#kbTop)" stroke="#111" stroke-width="0.7" stroke-linejoin="round" />
<polygon points="1084.4,873.1 1071.9,885.9 1077.4,878.2 1084.5,871.0" fill="#7d7c76" stroke="#111" stroke-width="0.7" stroke-linejoin="round" />
<polygon points="1071.9,885.9 1086.1,895.5 1085.6,883.7 1077.4,878.2" fill="#74736d" stroke="#111" stroke-width="0.7" stroke-linejoin="round" />
<polygon points="1086.1,895.5 1098.7,882.5 1092.7,876.5 1085.6,883.7" fill="#5c5a54" stroke="#111" stroke-width="0.7" stroke-linejoin="round" />
<polygon points="1077.4,878.2 1085.6,883.7 1092.7,876.5 1084.5,871.0" fill="url(#kbTop)" stroke="#111" stroke-width="0.7" stroke-linejoin="round" />
<polygon points="1099.6,883.1 1087.0,896.1 1092.6,888.4 1099.7,881.1" fill="#7d7c76" stroke="#111" stroke-width="0.7" stroke-linejoin="round" />
<polygon points="1087.0,896.1 1101.3,905.7 1100.9,893.9 1092.6,888.4" fill="#74736d" stroke="#111" stroke-width="0.7" stroke-linejoin="round" />
<polygon points="1101.3,905.7 1114.0,892.6 1108.0,886.6 1100.9,893.9" fill="#5c5a54" stroke="#111" stroke-width="0.7" stroke-linejoin="round" />
<polygon points="1092.6,888.4 1100.9,893.9 1108.0,886.6 1099.7,881.1" fill="url(#kbTop)" stroke="#111" stroke-width="0.7" stroke-linejoin="round" />
<polygon points="1042.7,873.0 1030.9,884.9 1034.7,879.1 1042.9,870.8" fill="#7d7c76" stroke="#111" stroke-width="0.7" stroke-linejoin="round" />
<polygon points="1030.9,884.9 1051.8,899.2 1051.4,890.4 1034.7,879.1" fill="#74736d" stroke="#111" stroke-width="0.7" stroke-linejoin="round" />
<polygon points="1051.8,899.2 1063.6,887.1 1059.6,882.1 1051.4,890.4" fill="#5c5a54" stroke="#111" stroke-width="0.7" stroke-linejoin="round" />
<polygon points="1034.7,879.1 1051.4,890.4 1059.6,882.1 1042.9,870.8" fill="url(#kbTop)" stroke="#111" stroke-width="0.7" stroke-linejoin="round" />
<polygon points="1065.6,888.4 1053.8,900.6 1057.7,894.8 1065.9,886.3" fill="#7d7c76" stroke="#111" stroke-width="0.7" stroke-linejoin="round" />
<polygon points="1053.8,900.6 1075.0,915.0 1074.6,906.3 1057.7,894.8" fill="#74736d" stroke="#111" stroke-width="0.7" stroke-linejoin="round" />
<polygon points="1075.0,915.0 1086.9,902.8 1082.9,897.8 1074.6,906.3" fill="#5c5a54" stroke="#111" stroke-width="0.7" stroke-linejoin="round" />
<polygon points="1057.7,894.8 1074.6,906.3 1082.9,897.8 1065.9,886.3" fill="url(#kbTop)" stroke="#111" stroke-width="0.7" stroke-linejoin="round" />
<polygon points="1036.0,889.7 1024.1,901.7 1027.9,896.0 1036.2,887.6" fill="#7d7c76" stroke="#111" stroke-width="0.7" stroke-linejoin="round" />
<polygon points="1024.1,901.7 1039.1,912.1 1038.7,903.4 1027.9,896.0" fill="#74736d" stroke="#111" stroke-width="0.7" stroke-linejoin="round" />
<polygon points="1039.1,912.1 1051.0,899.9 1046.9,894.9 1038.7,903.4" fill="#5c5a54" stroke="#111" stroke-width="0.7" stroke-linejoin="round" />
<polygon points="1027.9,896.0 1038.7,903.4 1046.9,894.9 1036.2,887.6" fill="url(#kbTop)" stroke="#111" stroke-width="0.7" stroke-linejoin="round" />
<polygon points="1065.0,909.5 1053.0,921.8 1056.9,916.0 1065.3,907.5" fill="#7d7c76" stroke="#111" stroke-width="0.7" stroke-linejoin="round" />
<polygon points="1053.0,921.8 1068.3,932.4 1067.9,923.6 1056.9,916.0" fill="#74736d" stroke="#111" stroke-width="0.7" stroke-linejoin="round" />
<polygon points="1068.3,932.4 1080.2,920.0 1076.2,915.0 1067.9,923.6" fill="#5c5a54" stroke="#111" stroke-width="0.7" stroke-linejoin="round" />
<polygon points="1056.9,916.0 1067.9,923.6 1076.2,915.0 1065.3,907.5" fill="url(#kbTop)" stroke="#111" stroke-width="0.7" stroke-linejoin="round" /><ellipse cx="1864" cy="238" rx="30" ry="13" fill="#888" opacity="0.3" filter="url(#sh)"/><polygon points="1821.0,183.5 1855.8,166.1 1891.7,183.5 1857.6,207.7" fill="#f0f0f0" stroke="#9a9a9a" stroke-width="0.7" stroke-dasharray="3 1.5"/><polygon points="1821.0,183.5 1857.6,207.7 1857.6,244.9 1824.7,222.0" fill="#e7e7e7" stroke="#9a9a9a" stroke-width="0.7" stroke-dasharray="3 1.5"/><polygon points="1857.6,207.7 1891.7,183.5 1888.0,220.7 1857.6,244.9" fill="#ebebeb" stroke="#9a9a9a" stroke-width="0.7" stroke-dasharray="3 1.5"/><text transform="matrix(0.915 0.605 -0.870 0.435 1856.5 185.2)" x="0" y="8" font-size="22" text-anchor="middle" fill="#9a9ea6" font-family="Liberation Sans, Noto Sans CJK JP, sans-serif">上</text><text transform="matrix(0.823 0.573 0.092 0.963 1840.2 214.5)" x="0" y="8" font-size="22" text-anchor="middle" fill="#9a9ea6" font-family="Liberation Sans, Noto Sans CJK JP, sans-serif">前</text><text transform="matrix(0.853 -0.605 0.000 0.930 1873.7 214.2)" x="0" y="8" font-size="22" text-anchor="middle" fill="#9a9ea6" font-family="Liberation Sans, Noto Sans CJK JP, sans-serif">右</text><circle cx="1857" cy="206" r="6.5" fill="#e4e8f0" opacity="0.7"/><path d="M1824.7 222 L1819.8 177.9" stroke="#6a6af0" stroke-width="1.6"/><path d="M1824.7 222 L1863.2 249.3" stroke="#f08a8a" stroke-width="1.8"/><text x="1818" y="176" font-size="13" font-weight="bold" fill="#8080ff" text-anchor="middle" font-family="Liberation Sans, sans-serif">Z</text><text x="1868.5" y="259" font-size="13" font-weight="bold" fill="#ff8080" text-anchor="middle" font-family="Liberation Sans, sans-serif">X</text></svg></div>
<div id="title"><svg class="abs" style="left:2px;top:3px" width="17" height="17" viewBox="0 0 17 17"><path d="M2 1 H15 Q16 1 16 2 V13 L14 16 H2 Q1 16 1 15 V2 Q1 1 2 1Z" fill="#f47b20"/><path d="M1 11 H16 V13 L14 16 H2 Q1 16 1 15Z" fill="#a8480f"/><path d="M5.5 3 H11.5 V4.6 H7.4 V6.2 H10.8 V7.7 H7.4 V10 H5.5Z" fill="#fff"/></svg><span class="t fit" style=";transform-origin:0 50%;transform:scaleX(0.976)">Autodesk Fusion 360 (個人用 - 商用利用不可)</span><svg class="abs" style="left:1790px;top:0" width="130" height="23" viewBox="0 0 130 23"><path d="M9 10.5 H19" stroke="#111" stroke-width="1"/><rect x="54.5" y="7.5" width="7" height="7" fill="#fff" stroke="#111" stroke-width="1"/><path d="M56.5 7.5 V5.5 H63.5 V12.5 H61.5" fill="none" stroke="#111" stroke-width="1"/><path d="M100 5 L110 15 M110 5 L100 15" stroke="#111" stroke-width="1.1"/></svg></div>
<div id="qbar"><svg class="abs" style="left:8px;top:8px" width="17" height="17" viewBox="0 0 17 17"><rect x="1.0" y="1.0" width="4.2" height="4.2" fill="#555"/><rect x="1.0" y="6.3" width="4.2" height="4.2" fill="#555"/><rect x="1.0" y="11.6" width="4.2" height="4.2" fill="#555"/><rect x="6.3" y="1.0" width="4.2" height="4.2" fill="#555"/><rect x="6.3" y="6.3" width="4.2" height="4.2" fill="#555"/><rect x="6.3" y="11.6" width="4.2" height="4.2" fill="#555"/><rect x="11.6" y="1.0" width="4.2" height="4.2" fill="#555"/><rect x="11.6" y="6.3" width="4.2" height="4.2" fill="#555"/><rect x="11.6" y="11.6" width="4.2" height="4.2" fill="#555"/></svg><svg class="abs" style="left:41px;top:7px" width="30" height="18" viewBox="0 0 30 18"><path d="M1 1 H9 L14 6 V17 H1Z" fill="#555"/><path d="M9 1 V6 H14" fill="none" stroke="#ccc" stroke-width="0.8"/><path d="M19 7 H26 L22.5 11Z" fill="#555"/></svg><svg class="abs" style="left:86px;top:8px" width="16" height="16" viewBox="0 0 16 16"><path d="M1 1 H13 L15 3 V15 H1Z" fill="#9a9a9a"/><rect x="4" y="1.5" width="8" height="4.5" fill="#ccc"/><rect x="9" y="2.2" width="2" height="3" fill="#9a9a9a"/><rect x="3.5" y="9" width="9" height="6" fill="#ccc"/></svg><svg class="abs" style="left:118px;top:8px" width="72" height="16" viewBox="0 0 72 16"><path d="M4 6 H10 Q15 6 15 14" fill="none" stroke="#555" stroke-width="2"/><path d="M1 6 L7.5 1 V11Z" fill="#555"/><path d="M22 5 H29 L25.5 9Z" fill="#555"/><path d="M54 6 H48 Q43 6 43 14" fill="none" stroke="#999" stroke-width="1.8"/><path d="M57 6 L50.5 1 V11Z" fill="#999"/><path d="M61 5 H68 L64.5 9Z" fill="#999"/></svg><div id="tab1"><svg class="abs" style="left:345px;top:8px" width="12" height="14" viewBox="0 0 12 14"><rect x="1" y="6" width="10" height="7.5" rx="1" fill="#666"/><path d="M3 6 V4 Q3 1 6 1 Q9 1 9 4 V6" fill="none" stroke="#666" stroke-width="1.6"/></svg><span class="pt fit" style="position:absolute;left:364px;top:6px;font-size:11px;color:#555;transform-origin:0 50%;transform:scaleX(1.000)">無題</span><svg class="abs" style="left:727px;top:9px" width="10" height="10" viewBox="0 0 10 10"><path d="M1 1 L9 9 M9 1 L1 9" stroke="#666" stroke-width="1.2"/></svg></div><div id="tab2"><svg class="abs" style="left:305px;top:6px" width="17" height="17" viewBox="0 0 17 17"><path d="M8.5 1 L15.5 4.5 V12.5 L8.5 16 L1.5 12.5 V4.5Z" fill="#f28a2a"/><path d="M8.5 1 L15.5 4.5 L8.5 8 L1.5 4.5Z" fill="#ffc58a"/><path d="M8.5 8 L15.5 4.5 V12.5 L8.5 16Z" fill="#d86a10"/></svg><span class="pt fit" style="position:absolute;left:326px;top:7px;font-size:12px;color:#333;white-space:nowrap;display:inline-block;transform-origin:0 50%;transform:scaleX(1.023)">CPC-300_open v2</span><svg class="abs" style="left:728px;top:9px" width="10" height="10" viewBox="0 0 10 10"><path d="M1 1 L9 9 M9 1 L1 9" stroke="#555" stroke-width="1.2"/></svg></div><div id="plus"><svg class="abs" style="left:7px;top:7px" width="14" height="14" viewBox="0 0 14 14"><path d="M7 0.5 V13.5 M0.5 7 H13.5" stroke="#666" stroke-width="2.2"/></svg></div><svg class="abs" style="left:1725px;top:3px" width="190" height="28" viewBox="0 0 190 28"><defs><linearGradient id="av" x1="0" y1="0" x2="0" y2="1"><stop offset="0" stop-color="#b4c2d6"/><stop offset="1" stop-color="#8ea2c0"/></linearGradient></defs><circle cx="12" cy="13" r="8" fill="#1592dc"/><path d="M10.5 10 V18 M6.5 14 H14.5 M15.5 7.5 V11.5 M13.5 9.5 H17.5" stroke="#fff" stroke-width="1.6"/><circle cx="45" cy="13" r="7.6" fill="none" stroke="#555" stroke-width="0.9"/><circle cx="45" cy="13" r="6" fill="#555"/><path d="M45 9 V13.5 H48.5" stroke="#ddd" stroke-width="1.2" fill="none"/><path d="M87 18 Q89.5 16 89.5 12 Q89.5 7.5 94 7 Q98.5 7.5 98.5 12 Q98.5 16 101 18Z" fill="#555"/><path d="M92 19.5 H96 L94 21.5Z" fill="#555"/><circle cx="98.5" cy="8" r="2.8" fill="#1592dc"/><circle cx="127" cy="13" r="8" fill="#555"/><circle cx="168" cy="13" r="12" fill="url(#av)"/><path d="M168 3.5 Q173.5 3.5 173.5 9.5 Q173.5 13 171.5 15 V17 Q177 18.5 177.5 21.5 Q173 25 168 25 Q163 25 158.5 21.5 Q159 18.5 164.5 17 V15 Q162.5 13 162.5 9.5 Q162.5 3.5 168 3.5Z" fill="#4a5a74"/></svg><span class="abs" style="left:1780px;top:9px;font-size:12px;color:#5a1a5a">1</span><span class="abs" style="left:1848px;top:8px;font-size:13px;font-weight:bold;color:#ddd">?</span></div>
<div id="tbar"></div>
<svg class="ico" style="left:134.0px;top:80px;width:36px;height:36px" viewBox="0 0 36 36"><rect x="3" y="3" width="27" height="27" fill="none" stroke="#555" stroke-width="0.9" stroke-dasharray="5 2"/><rect x="1.5" y="1.5" width="3" height="3" fill="#444"/><rect x="28.5" y="1.5" width="3" height="3" fill="#444"/><rect x="1.5" y="28.5" width="3" height="3" fill="#444"/><path d="M9 9 V23 M9 9 H23 M23 9 Q22 22 9 23" fill="none" stroke="#555" stroke-width="1" stroke-dasharray="6 2"/><rect x="7.5" y="7.5" width="3" height="3" fill="#444"/><rect x="21.5" y="7.5" width="3" height="3" fill="#444"/><rect x="7.5" y="21.5" width="3" height="3" fill="#444"/><path d="M21 26.5 H34 M27.5 20 V33" stroke="#1e9e3c" stroke-width="4"/></svg>
<svg class="ico" style="left:177.0px;top:80px;width:36px;height:36px" viewBox="0 0 36 36"><path d="M2 29 H20 L25 25 V29 L20 33 H2Z" fill="#c4c4c4"/><path d="M2 8 L7 3 H25 L20 8Z" fill="#a8d4f6"/><path d="M20 8 L25 3 V25 L20 29Z" fill="#3f8fd0"/><rect x="2" y="8" width="18" height="21" fill="#6db3ea"/><path d="M30 6 V27" stroke="#222" stroke-width="1.2"/><path d="M27.6 8 L30 3 L32.4 8Z" fill="#222"/></svg>
<svg class="ico" style="left:220.0px;top:80px;width:36px;height:36px" viewBox="0 0 36 36"><path d="M3 18 Q18 6 33 18 V26 Q18 15 9 29 L3 25Z" fill="#6db3ea"/><path d="M3 18 L9 22 V29 L3 25Z" fill="#3f8fd0"/><path d="M9 22 Q18 10 33 18 L27 21 Q18 17 9 22Z" fill="#a8d4f6" opacity="0.0"/><path d="M27 21 L33 17 V25 L27 29Z" fill="#fff" stroke="#444" stroke-width="1"/><path d="M5 9 Q18 0 31 9" fill="none" stroke="#333" stroke-width="1.2"/><path d="M3 11 L4.5 5.5 L8.5 9.5Z" fill="#333"/></svg>
<svg class="ico" style="left:264.0px;top:80px;width:36px;height:36px" viewBox="0 0 36 36"><path d="M2 8 L8 2 H34 V28 L28 34 H2Z" fill="#dedede" stroke="#777" stroke-width="1"/><path d="M2 8 H28 V34 M28 8 L34 2" fill="none" stroke="#777" stroke-width="1"/><path d="M28 8 L34 2 V28 L28 34Z" fill="#bdbdbd" stroke="#777" stroke-width="1"/><circle cx="15" cy="21" r="8.5" fill="#f4f4f4" stroke="#777" stroke-width="1"/><circle cx="15" cy="21" r="6.3" fill="#6db3ea" stroke="#3a6fa0" stroke-width="0.8"/><path d="M12 16 Q17 18 20 23 Q21 19 18 16.5 Q15 14.5 12 16Z" fill="#e8f2fb"/></svg>
<svg class="ico" style="left:306.0px;top:80px;width:34px;height:36px" viewBox="0 0 34 36"><path d="M7 6 H27 M7 27 H27 M7 6 V27" stroke="#444" stroke-width="1.2" fill="none"/><rect x="3.5" y="2.5" width="7" height="7" fill="#fff" stroke="#444" stroke-width="1"/><rect x="24" y="2" width="7.5" height="7.5" fill="#6db3ea"/><rect x="3" y="23" width="7.5" height="7.5" fill="#6db3ea"/><rect x="24" y="23" width="7.5" height="7.5" fill="#6db3ea"/></svg>
<div class="sep" style="left:351px"></div>
<svg class="ico" style="left:360.0px;top:80px;width:36px;height:36px" viewBox="0 0 36 36"><path d="M3 8 L9 2 H14 V30 L9 34 H3Z" fill="#dedede" stroke="#777" stroke-width="1"/><path d="M10 8 L16 2 H24 L18 8Z" fill="#a8d4f6"/><path d="M23 6 L27 2 V30 L23 34Z" fill="#3f8fd0"/><rect x="10" y="6" width="13" height="28" fill="#6db3ea"/><path d="M10 8 L16 2 H27 L23 6 H10" fill="#a8d4f6"/><path d="M22 20 H31" stroke="#222" stroke-width="1.3"/><path d="M29 17.3 L34 20 L29 22.7Z" fill="#222"/><rect x="20" y="18" width="5" height="4" fill="#fff"/><path d="M21 20 H31" stroke="#222" stroke-width="1.3"/></svg>
<svg class="ico" style="left:403.0px;top:80px;width:36px;height:36px" viewBox="0 0 36 36"><path d="M3 34 V12 L9 4 H18 Q33 5 34 20 V28 L28 34Z" fill="#dedede" stroke="#777" stroke-width="1"/><path d="M28 34 V22 L34 18 V28Z" fill="#bdbdbd" stroke="#777" stroke-width="0.8"/><path d="M14 4.5 H18 Q33 5 34 20 L28 23 Q27 12 14 10.5 L17 4.5Z" fill="#6db3ea"/></svg>
<svg class="ico" style="left:446.0px;top:80px;width:36px;height:36px" viewBox="0 0 36 36"><path d="M2 8 L8 2 H34 V28 L28 34 H2Z" fill="#dedede" stroke="#777" stroke-width="1"/><path d="M2 8 H28 V34 M28 8 L34 2" fill="none" stroke="#777" stroke-width="1"/><path d="M28 8 L34 2 V28 L28 34Z" fill="#bdbdbd" stroke="#777" stroke-width="1"/><rect x="6" y="12" width="18" height="18" fill="#f6f6f6"/><path d="M6 14 H13 V23 H22 V30 H6Z" fill="#3f8fd0"/><path d="M13 23 L15 21 H24 L22 23Z M13 14 L15 16 V21 L13 23Z" fill="#a8d4f6"/><path d="M13 23 H22 L24 30 H6 L13 23" fill="#a8d4f6" opacity="0.8"/><path d="M6 14 H13 V23 L6 30Z" fill="#3f8fd0"/></svg>
<svg class="ico" style="left:490.0px;top:80px;width:36px;height:36px" viewBox="0 0 36 36"><path d="M2 18 L8 12 H16 L18 4 L24 2 H34 V20 L28 26 H22 V28 L16 34 H2Z" fill="#6db3ea"/><path d="M14 8 L20 2 H34 L28 8Z" fill="#a8d4f6"/><path d="M28 8 L34 2 V20 L28 26Z" fill="#3f8fd0"/><path d="M2 18 L8 12 H14 V18Z" fill="#a8d4f6"/><path d="M16 26 H22 V28 L16 34Z" fill="#3f8fd0"/><rect x="14" y="8" width="14" height="18" fill="#6db3ea"/><rect x="2" y="18" width="14" height="16" fill="#6db3ea"/></svg>
<svg class="ico" style="left:533.0px;top:80px;width:36px;height:36px" viewBox="0 0 36 36"><path d="M2 8 L8 2 H32 V14 L26 20 H2Z" fill="#6db3ea"/><path d="M2 8 L8 2 H32 L26 8Z" fill="#a8d4f6"/><path d="M26 8 L32 2 V14 L26 20Z" fill="#3f8fd0"/><path d="M2 24 H26 L32 18 V28 L26 34 H2Z" fill="#dedede" stroke="#999" stroke-width="0.6"/><path d="M26 24 L32 18 V28 L26 34Z" fill="#bdbdbd"/><path d="M0 22 H27 L35 13" fill="none" stroke="#1f7fd0" stroke-width="1.6"/></svg>
<svg class="ico" style="left:576.0px;top:80px;width:36px;height:36px" viewBox="0 0 36 36"><path d="M18 5 V31 M5 18 H31" stroke="#333" stroke-width="2.4"/><path d="M18 1.500 L23 9 H13Z M18 34.500 L23 27 H13Z M1.500 18 L9 13 V23Z M34.500 18 L27 13 V23Z" fill="#333"/></svg>
<div class="sep" style="left:620px"></div>
<svg class="ico" style="left:629.0px;top:80px;width:36px;height:36px" viewBox="0 0 36 36"><path d="M2 20 H15 V34 H2Z M15 20 H27 V34 H15Z" fill="#dedede" stroke="#888" stroke-width="0.8"/><path d="M15 20 L19 16 H31 L27 20Z" fill="#f2f2f2" stroke="#888" stroke-width="0.6"/><path d="M27 20 L31 16 V30 L27 34Z" fill="#bdbdbd" stroke="#888" stroke-width="0.6"/><path d="M2 8 L6 4 H19 L15 8Z" fill="#a8d4f6"/><path d="M15 8 L19 4 V16 L15 20Z" fill="#3f8fd0"/><rect x="2" y="8" width="13" height="12" fill="#6db3ea"/><path d="M26 0 L27.8 5.5 L32.5 2.5 L30.5 7.8 L36 8.5 L31 11 L34.5 15.5 L29 14 L28.5 19.5 L25.5 14.8 L21 18 L22.5 12.5 L17 11.5 L22 9 L19 4.5 L24.3 6Z" fill="#f59a00"/></svg>
<svg class="ico" style="left:674.0px;top:80px;width:34px;height:36px" viewBox="0 0 34 36"><path d="M4 30 V10 Q4 3 10 3 H14 V26 Q10 26 8 32Z" fill="#dedede" stroke="#555" stroke-width="1"/><ellipse cx="12" cy="5" rx="3.2" ry="2.2" fill="#f4f4f4" stroke="#555" stroke-width="0.8"/><path d="M9 5 V22 Q12 24 15 22 V5" fill="#bdbdbd" stroke="#555" stroke-width="0.8"/><path d="M22 6 L32 14 V34 L22 26Z" fill="#dedede" stroke="#555" stroke-width="1"/><path d="M18 16 H25 V27 H18Z" fill="#bdbdbd" stroke="#555" stroke-width="0.8"/><path d="M12.5 13 V24 M21.5 10 V18" stroke="#1f7fd0" stroke-width="1.3"/></svg>
<div class="sep" style="left:716px"></div>
<svg class="ico" style="left:730.0px;top:80px;width:34px;height:36px" viewBox="0 0 34 36"><path d="M3 12 L9 3 H16 L10 12Z M3 12 H10 V34 H3Z" fill="#e2e2e2" stroke="#555" stroke-width="1"/><path d="M10 12 L19 3 V26 L10 34Z" fill="#5cbf7c"/><path d="M22 10 L31 3 V26 L22 34Z" fill="#e39a66"/></svg>
<div class="sep" style="left:776px"></div>
<svg class="ico" style="left:788.0px;top:80px;width:36px;height:36px" viewBox="0 0 36 36"><rect x="3" y="20" width="29" height="6" fill="#f5a800"/><path d="M6 20 V23 M9 20 V22 M12 20 V23 M15 20 V22 M18 20 V23 M21 20 V22 M24 20 V23 M27 20 V22 M30 20 V23" stroke="#7a5200" stroke-width="0.7"/><path d="M3.5 10 V19 M31.5 10 V19 M4 14.5 H31" stroke="#555" stroke-width="1"/><path d="M4 14.5 L8 12.3 V16.7Z M31 14.5 L27 12.3 V16.7Z" fill="#555"/></svg>
<div class="sep" style="left:835px"></div>
<svg class="ico" style="left:846.0px;top:80px;width:36px;height:36px" viewBox="0 0 36 36"><rect x="3" y="3" width="29" height="29" fill="#8ccbfb" stroke="#3d8fd0" stroke-width="0.8"/><circle cx="24" cy="11" r="3.4" fill="#fffbd0"/><path d="M3.4 24 Q10 10 16 16 Q19 19 22 24 Q26 17 31.6 24 V31.6 H3.4Z" fill="#3f8fcc"/></svg>
<div class="sep" style="left:894px"></div>
<div class="abs" style="left:905px;top:79px;width:38px;height:38px;background:#0a96d8"></div>
<svg class="ico" style="left:905.0px;top:79px;width:38px;height:38px" viewBox="0 0 38 38"><rect x="3.5" y="4.5" width="27" height="21" fill="none" stroke="#8fe08a" stroke-width="1.2" stroke-dasharray="4 2.5"/><path d="M24 17 V32 L27.5 28.5 L30 34 L32.6 32.8 L30 27.5 L35 27Z" fill="#fff"/></svg>
<span class="grp fit" style="left:222px;transform-origin:0 50%;transform:scaleX(0.955)">作成</span>
<i class="dd" style="left:246px"></i>
<span class="grp fit" style="left:468px;transform-origin:0 50%;transform:scaleX(1.000)">修正</span>
<i class="dd" style="left:493px"></i>
<span class="grp fit" style="left:642px;transform-origin:0 50%;transform:scaleX(0.753)">アセンブリ</span>
<i class="dd" style="left:686px"></i>
<span class="grp fit" style="left:733px;transform-origin:0 50%;transform:scaleX(1.000)">構築</span>
<i class="dd" style="left:758px"></i>
<span class="grp fit" style="left:791px;transform-origin:0 50%;transform:scaleX(1.000)">検査</span>
<i class="dd" style="left:816px"></i>
<span class="grp fit" style="left:850px;transform-origin:0 50%;transform:scaleX(0.955)">挿入</span>
<i class="dd" style="left:874px"></i>
<span class="grp fit" style="left:908px;transform-origin:0 50%;transform:scaleX(1.000)">選択</span>
<i class="dd" style="left:933px"></i>
<span class="tabl fit" style="left:228px;transform-origin:0 50%;transform:scaleX(0.752)">サーフェス</span>
<span class="tabl fit" style="left:311px;transform-origin:0 50%;transform:scaleX(0.738)">メッシュ</span>
<span class="tabl fit" style="left:389px;transform-origin:0 50%;transform:scaleX(0.744)">フォーム</span>
<span class="tabl fit" style="left:467px;transform-origin:0 50%;transform:scaleX(0.774)">シート メタル</span>
<span class="tabl fit" style="left:565px;transform-origin:0 50%;transform:scaleX(0.748)">プラスチック</span>
<span class="tabl fit" style="left:658px;transform-origin:0 50%;transform:scaleX(0.734)">ユーティリティ</span>
<span class="tabl fit" style="left:150px;color:#2d9fe0;transform-origin:0 50%;transform:scaleX(0.762)">ソリッド</span>
<div class="abs" style="left:138px;top:76px;width:56px;height:2px;background:#1e90d8"></div>
<div id="design"><span class="dz fit" style=";transform-origin:0 50%;transform:scaleX(0.841)">デザイン</span><i></i></div>
<div class="panel" style="top:143px"><svg class="abs" style="left:5px;top:8px" width="11" height="8" viewBox="0 0 11 8"><path d="M5 0.5 V7.5 L0.5 4Z M10.5 0.5 V7.5 L6 4Z" fill="#222"/></svg><span class="pt fit" style=";transform-origin:0 50%;transform:scaleX(0.750)">ブラウザ</span><svg class="abs" style="left:278px;top:8px" width="9" height="9" viewBox="0 0 9 9"><circle cx="4.5" cy="4.5" r="4.3" fill="#222"/><path d="M2 4.5 H7" stroke="#fff" stroke-width="1.3"/></svg></div><div class="panel" style="top:1010px"><span class="pt fit" style=";transform-origin:0 50%;transform:scaleX(0.750)">コメント</span><svg class="abs" style="left:278px;top:8px" width="9" height="9" viewBox="0 0 9 9"><circle cx="4.5" cy="4.5" r="4.3" fill="#222"/><path d="M2 4.5 H7 M4.5 2 V7" stroke="#fff" stroke-width="1.3"/></svg></div><div class="abs" style="left:8px;top:174px;width:6px;height:813px;background:#c9c9cb"></div><div class="abs" style="left:8px;top:174px;width:6px;height:77px;background:#a9a9ab;border-radius:2px"></div>
<svg class="arr" style="left:20px;top:177px" width="14" height="14" viewBox="0 0 14 14"><path d="M12.5 1.5 V12.5 H1.5Z" fill="#777" stroke="#222" stroke-width="1.2" stroke-linejoin="round"/></svg>
<div class="row" style="left:40px;top:174px;width:188px"><svg style="left:2px;top:4px" width="18" height="12" viewBox="0 0 18 12"><path d="M0.5 6 C3 1.2 6 0.3 9 0.3 C12 0.3 15 1.2 17.5 6 C15 10.8 12 11.7 9 11.7 C6 11.7 3 10.8 0.5 6Z" fill="#8e8e8e"/><circle cx="9" cy="6" r="4.1" fill="#f4f4f4"/><circle cx="9" cy="6" r="2.6" fill="#8e8e8e"/></svg><div class="abs" style="left:25px;top:1px;width:138px;height:18px;background:#9b9b9b"></div><svg style="left:27px;top:1px" width="19" height="18" viewBox="0 0 19 18"><path d="M1.5 5 L5 1.5 H17.5 V13 L14 16.5 H1.5Z" fill="#f4f4f4" stroke="#444" stroke-width="1"/><path d="M1.5 5 H14 V16.5 M14 5 L17.5 1.5" fill="none" stroke="#444" stroke-width="1"/><path d="M14 5 L17.5 1.5 V13 L14 16.5Z" fill="#cfcfcf" stroke="#444" stroke-width="1"/></svg><span class="tx fit" style="left:58px;top:2px;color:#fff;font-weight:bold;transform-origin:0 50%;transform:scaleX(1.022)">CPC-300_open v2</span><svg style="left:166px;top:3px" width="14" height="14" viewBox="0 0 14 14"><circle cx="7" cy="7" r="5.8" fill="#fff" stroke="#222" stroke-width="1.1"/><circle cx="7" cy="7" r="2.5" fill="#222"/></svg></div>
<svg class="arr" style="left:38px;top:200px" width="12" height="16" viewBox="0 0 12 16"><path d="M1.5 1.5 L10.5 8 L1.5 14.5Z" fill="#fff" stroke="#222" stroke-width="1.3" stroke-linejoin="round"/></svg><div class="row" style="left:58px;top:198px;width:118px"><svg style="left:1px;top:2px" width="16" height="16" viewBox="0 0 16 16"><path d="M14.94 7.09 L14.94 8.91 L12.91 8.96 L12.15 10.79 L13.55 12.27 L12.27 13.55 L10.79 12.15 L8.96 12.91 L8.91 14.94 L7.09 14.94 L7.04 12.91 L5.21 12.15 L3.73 13.55 L2.45 12.27 L3.85 10.79 L3.09 8.96 L1.06 8.91 L1.06 7.09 L3.09 7.04 L3.85 5.21 L2.45 3.73 L3.73 2.45 L5.21 3.85 L7.04 3.09 L7.09 1.06 L8.91 1.06 L8.96 3.09 L10.79 3.85 L12.27 2.45 L13.55 3.73 L12.15 5.21 L12.91 7.04Z" fill="#7c7c7c"/><circle cx="8" cy="8" r="2.4" fill="#f1f1f1"/></svg><span class="tx fit" style="left:28px;transform-origin:0 50%;transform:scaleX(0.828)">ドキュメントの設定</span></div>
<svg class="arr" style="left:38px;top:224px" width="12" height="16" viewBox="0 0 12 16"><path d="M1.5 1.5 L10.5 8 L1.5 14.5Z" fill="#fff" stroke="#222" stroke-width="1.3" stroke-linejoin="round"/></svg><div class="row" style="left:58px;top:222px;width:126px"><svg style="left:1px;top:3px" width="17" height="14" viewBox="0 0 17 14"><path d="M0 0.5 H6.5 L7.5 2.2 H16.5 V13.5 H0Z" fill="#8f8f8f"/><path d="M0.8 1.3 H6 L6.8 2.6 H0.8Z" fill="#c9c9c9"/></svg><span class="tx fit" style="left:33px;transform-origin:0 50%;transform:scaleX(0.859)">名前の付いたビュー</span></div>
<svg class="arr" style="left:38px;top:248px" width="12" height="16" viewBox="0 0 12 16"><path d="M1.5 1.5 L10.5 8 L1.5 14.5Z" fill="#fff" stroke="#222" stroke-width="1.3" stroke-linejoin="round"/></svg><div class="row" style="left:58px;top:246px;width:91px"><svg style="left:2px;top:3px" width="18" height="14" viewBox="0 0 18 14"><path d="M0.8 7 C3 2.6 6 1.6 9 1.6 C12 1.6 15 2.6 17.2 7 C15 11.4 12 12.4 9 12.4 C6 12.4 3 11.4 0.8 7Z" fill="none" stroke="#9a9a9a" stroke-width="0.9"/><circle cx="9" cy="7" r="3.3" fill="none" stroke="#9a9a9a" stroke-width="0.9"/><path d="M3 1.2 L15 12.8" stroke="#9a9a9a" stroke-width="1"/><path d="M4.2 0.6 L16.2 12.2" stroke="#f1f1f1" stroke-width="1"/></svg><svg style="left:28px;top:3px" width="17" height="14" viewBox="0 0 17 14"><path d="M0 0.5 H6.5 L7.5 2.2 H16.5 V13.5 H0Z" fill="#8f8f8f"/><path d="M0.8 1.3 H6 L6.8 2.6 H0.8Z" fill="#c9c9c9"/></svg><span class="tx fit" style="left:58px;transform-origin:0 50%;transform:scaleX(1.136)">原点</span></div>
<svg class="arr" style="left:37px;top:273px" width="14" height="14" viewBox="0 0 14 14"><path d="M12.5 1.5 V12.5 H1.5Z" fill="#777" stroke="#222" stroke-width="1.2" stroke-linejoin="round"/></svg><div class="row" style="left:58px;top:270px;width:95px"><svg style="left:2px;top:4px" width="18" height="12" viewBox="0 0 18 12"><path d="M0.5 6 C3 1.2 6 0.3 9 0.3 C12 0.3 15 1.2 17.5 6 C15 10.8 12 11.7 9 11.7 C6 11.7 3 10.8 0.5 6Z" fill="#8e8e8e"/><circle cx="9" cy="6" r="4.1" fill="#f4f4f4"/><circle cx="9" cy="6" r="2.6" fill="#8e8e8e"/></svg><svg style="left:28px;top:3px" width="17" height="14" viewBox="0 0 17 14"><path d="M0 0.5 H6.5 L7.5 2.2 H16.5 V13.5 H0Z" fill="#8f8f8f"/><path d="M0.8 1.3 H6 L6.8 2.6 H0.8Z" fill="#c9c9c9"/></svg><span class="tx fit" style="left:58px;transform-origin:0 50%;transform:scaleX(0.900)">ボディ</span></div>
<div class="row" style="left:76px;top:294px;width:203px"><svg style="left:2px;top:4px" width="18" height="12" viewBox="0 0 18 12"><path d="M0.5 6 C3 1.2 6 0.3 9 0.3 C12 0.3 15 1.2 17.5 6 C15 10.8 12 11.7 9 11.7 C6 11.7 3 10.8 0.5 6Z" fill="#8e8e8e"/><circle cx="9" cy="6" r="4.1" fill="#f4f4f4"/><circle cx="9" cy="6" r="2.6" fill="#8e8e8e"/></svg><svg style="left:27px;top:1px" width="18" height="18" viewBox="0 0 18 18"><defs><linearGradient id="bg3610" x1="0" x2="1"><stop offset="0" stop-color="#fff"/><stop offset="0.55" stop-color="#e6e6e6"/><stop offset="1" stop-color="#bdbdbd"/></linearGradient></defs><rect x="1" y="1" width="16" height="16" rx="4.5" ry="3.5" fill="#fdfdfd" stroke="#4a4a4a" stroke-width="1.1"/><path d="M6 7 H15 V13.5 Q15 16 12.5 16 H6Z" fill="url(#bg3610)"/></svg><span class="tx fit" style="left:58px;transform-origin:0 50%;transform:scaleX(0.808)">ジョイスティックポート (1) (1) (1)</span></div>
<div class="row" style="left:76px;top:318px;width:183px"><svg style="left:2px;top:4px" width="18" height="12" viewBox="0 0 18 12"><path d="M0.5 6 C3 1.2 6 0.3 9 0.3 C12 0.3 15 1.2 17.5 6 C15 10.8 12 11.7 9 11.7 C6 11.7 3 10.8 0.5 6Z" fill="#8e8e8e"/><circle cx="9" cy="6" r="4.1" fill="#f4f4f4"/><circle cx="9" cy="6" r="2.6" fill="#8e8e8e"/></svg><svg style="left:27px;top:1px" width="18" height="18" viewBox="0 0 18 18"><defs><linearGradient id="bg3610" x1="0" x2="1"><stop offset="0" stop-color="#fff"/><stop offset="0.55" stop-color="#e6e6e6"/><stop offset="1" stop-color="#bdbdbd"/></linearGradient></defs><rect x="1" y="1" width="16" height="16" rx="4.5" ry="3.5" fill="#fdfdfd" stroke="#4a4a4a" stroke-width="1.1"/><path d="M6 7 H15 V13.5 Q15 16 12.5 16 H6Z" fill="url(#bg3610)"/></svg><span class="tx fit" style="left:58px;transform-origin:0 50%;transform:scaleX(0.973)">ボディ上面 (2) (1) (1) (1)</span></div>
<div class="row" style="left:76px;top:342px;width:171px"><svg style="left:2px;top:4px" width="18" height="12" viewBox="0 0 18 12"><path d="M0.5 6 C3 1.2 6 0.3 9 0.3 C12 0.3 15 1.2 17.5 6 C15 10.8 12 11.7 9 11.7 C6 11.7 3 10.8 0.5 6Z" fill="#8e8e8e"/><circle cx="9" cy="6" r="4.1" fill="#f4f4f4"/><circle cx="9" cy="6" r="2.6" fill="#8e8e8e"/></svg><svg style="left:27px;top:1px" width="18" height="18" viewBox="0 0 18 18"><defs><linearGradient id="bg3610" x1="0" x2="1"><stop offset="0" stop-color="#fff"/><stop offset="0.55" stop-color="#e6e6e6"/><stop offset="1" stop-color="#bdbdbd"/></linearGradient></defs><rect x="1" y="1" width="16" height="16" rx="4.5" ry="3.5" fill="#fdfdfd" stroke="#4a4a4a" stroke-width="1.1"/><path d="M6 7 H15 V13.5 Q15 16 12.5 16 H6Z" fill="url(#bg3610)"/></svg><span class="tx fit" style="left:58px;transform-origin:0 50%;transform:scaleX(0.915)">ボディ・底面 (1) (1) (1)</span></div>
<div class="row" style="left:76px;top:366px;width:87px"><svg style="left:2px;top:4px" width="18" height="12" viewBox="0 0 18 12"><path d="M0.5 6 C3 1.2 6 0.3 9 0.3 C12 0.3 15 1.2 17.5 6 C15 10.8 12 11.7 9 11.7 C6 11.7 3 10.8 0.5 6Z" fill="#8e8e8e"/><circle cx="9" cy="6" r="4.1" fill="#f4f4f4"/><circle cx="9" cy="6" r="2.6" fill="#8e8e8e"/></svg><svg style="left:27px;top:1px" width="18" height="18" viewBox="0 0 18 18"><defs><linearGradient id="bg3610" x1="0" x2="1"><stop offset="0" stop-color="#fff"/><stop offset="0.55" stop-color="#e6e6e6"/><stop offset="1" stop-color="#bdbdbd"/></linearGradient></defs><rect x="1" y="1" width="16" height="16" rx="4.5" ry="3.5" fill="#fdfdfd" stroke="#4a4a4a" stroke-width="1.1"/><path d="M6 7 H15 V13.5 Q15 16 12.5 16 H6Z" fill="url(#bg3610)"/></svg><span class="tx fit" style="left:58px;transform-origin:0 50%;transform:scaleX(0.959)">SW</span></div>
<div class="row" style="left:76px;top:390px;width:95px"><svg style="left:2px;top:4px" width="18" height="12" viewBox="0 0 18 12"><path d="M0.5 6 C3 1.2 6 0.3 9 0.3 C12 0.3 15 1.2 17.5 6 C15 10.8 12 11.7 9 11.7 C6 11.7 3 10.8 0.5 6Z" fill="#8e8e8e"/><circle cx="9" cy="6" r="4.1" fill="#f4f4f4"/><circle cx="9" cy="6" r="2.6" fill="#8e8e8e"/></svg><svg style="left:27px;top:1px" width="18" height="18" viewBox="0 0 18 18"><defs><linearGradient id="bg3610" x1="0" x2="1"><stop offset="0" stop-color="#fff"/><stop offset="0.55" stop-color="#e6e6e6"/><stop offset="1" stop-color="#bdbdbd"/></linearGradient></defs><rect x="1" y="1" width="16" height="16" rx="4.5" ry="3.5" fill="#fdfdfd" stroke="#4a4a4a" stroke-width="1.1"/><path d="M6 7 H15 V13.5 Q15 16 12.5 16 H6Z" fill="url(#bg3610)"/></svg><span class="tx fit" style="left:58px;transform-origin:0 50%;transform:scaleX(1.009)">SW枠</span></div>
<div class="row" style="left:76px;top:414px;width:187px"><svg style="left:2px;top:4px" width="18" height="12" viewBox="0 0 18 12"><path d="M0.5 6 C3 1.2 6 0.3 9 0.3 C12 0.3 15 1.2 17.5 6 C15 10.8 12 11.7 9 11.7 C6 11.7 3 10.8 0.5 6Z" fill="#8e8e8e"/><circle cx="9" cy="6" r="4.1" fill="#f4f4f4"/><circle cx="9" cy="6" r="2.6" fill="#8e8e8e"/></svg><svg style="left:27px;top:1px" width="18" height="18" viewBox="0 0 18 18"><defs><linearGradient id="bg3610" x1="0" x2="1"><stop offset="0" stop-color="#fff"/><stop offset="0.55" stop-color="#e6e6e6"/><stop offset="1" stop-color="#bdbdbd"/></linearGradient></defs><rect x="1" y="1" width="16" height="16" rx="4.5" ry="3.5" fill="#fdfdfd" stroke="#4a4a4a" stroke-width="1.1"/><path d="M6 7 H15 V13.5 Q15 16 12.5 16 H6Z" fill="url(#bg3610)"/></svg><span class="tx fit" style="left:58px;transform-origin:0 50%;transform:scaleX(0.787)">カートリッジ・フレーム (1) (1)</span></div>
<div class="row" style="left:76px;top:438px;width:167px"><svg style="left:2px;top:4px" width="18" height="12" viewBox="0 0 18 12"><path d="M0.5 6 C3 1.2 6 0.3 9 0.3 C12 0.3 15 1.2 17.5 6 C15 10.8 12 11.7 9 11.7 C6 11.7 3 10.8 0.5 6Z" fill="#8e8e8e"/><circle cx="9" cy="6" r="4.1" fill="#f4f4f4"/><circle cx="9" cy="6" r="2.6" fill="#8e8e8e"/></svg><svg style="left:27px;top:1px" width="18" height="18" viewBox="0 0 18 18"><defs><linearGradient id="bg3610" x1="0" x2="1"><stop offset="0" stop-color="#fff"/><stop offset="0.55" stop-color="#e6e6e6"/><stop offset="1" stop-color="#bdbdbd"/></linearGradient></defs><rect x="1" y="1" width="16" height="16" rx="4.5" ry="3.5" fill="#fdfdfd" stroke="#4a4a4a" stroke-width="1.1"/><path d="M6 7 H15 V13.5 Q15 16 12.5 16 H6Z" fill="url(#bg3610)"/></svg><span class="tx fit" style="left:58px;transform-origin:0 50%;transform:scaleX(0.835)">カートリッジ・蓋 (1) (1)</span></div>
<div class="row" style="left:76px;top:462px;width:155px"><svg style="left:2px;top:4px" width="18" height="12" viewBox="0 0 18 12"><path d="M0.5 6 C3 1.2 6 0.3 9 0.3 C12 0.3 15 1.2 17.5 6 C15 10.8 12 11.7 9 11.7 C6 11.7 3 10.8 0.5 6Z" fill="#8e8e8e"/><circle cx="9" cy="6" r="4.1" fill="#f4f4f4"/><circle cx="9" cy="6" r="2.6" fill="#8e8e8e"/></svg><svg style="left:27px;top:1px" width="18" height="18" viewBox="0 0 18 18"><defs><linearGradient id="bg3610" x1="0" x2="1"><stop offset="0" stop-color="#fff"/><stop offset="0.55" stop-color="#e6e6e6"/><stop offset="1" stop-color="#bdbdbd"/></linearGradient></defs><rect x="1" y="1" width="16" height="16" rx="4.5" ry="3.5" fill="#fdfdfd" stroke="#4a4a4a" stroke-width="1.1"/><path d="M6 7 H15 V13.5 Q15 16 12.5 16 H6Z" fill="url(#bg3610)"/></svg><span class="tx fit" style="left:58px;transform-origin:0 50%;transform:scaleX(0.902)">内部フレーム (1) (1)</span></div>
<div class="row" style="left:76px;top:486px;width:127px"><svg style="left:2px;top:4px" width="18" height="12" viewBox="0 0 18 12"><path d="M0.5 6 C3 1.2 6 0.3 9 0.3 C12 0.3 15 1.2 17.5 6 C15 10.8 12 11.7 9 11.7 C6 11.7 3 10.8 0.5 6Z" fill="#8e8e8e"/><circle cx="9" cy="6" r="4.1" fill="#f4f4f4"/><circle cx="9" cy="6" r="2.6" fill="#8e8e8e"/></svg><svg style="left:27px;top:1px" width="18" height="18" viewBox="0 0 18 18"><defs><linearGradient id="bg3610" x1="0" x2="1"><stop offset="0" stop-color="#fff"/><stop offset="0.55" stop-color="#e6e6e6"/><stop offset="1" stop-color="#bdbdbd"/></linearGradient></defs><rect x="1" y="1" width="16" height="16" rx="4.5" ry="3.5" fill="#fdfdfd" stroke="#4a4a4a" stroke-width="1.1"/><path d="M6 7 H15 V13.5 Q15 16 12.5 16 H6Z" fill="url(#bg3610)"/></svg><span class="tx fit" style="left:58px;transform-origin:0 50%;transform:scaleX(0.792)">リセットボタン</span></div>
<div class="row" style="left:76px;top:510px;width:111px"><svg style="left:2px;top:4px" width="18" height="12" viewBox="0 0 18 12"><path d="M0.5 6 C3 1.2 6 0.3 9 0.3 C12 0.3 15 1.2 17.5 6 C15 10.8 12 11.7 9 11.7 C6 11.7 3 10.8 0.5 6Z" fill="#8e8e8e"/><circle cx="9" cy="6" r="4.1" fill="#f4f4f4"/><circle cx="9" cy="6" r="2.6" fill="#8e8e8e"/></svg><svg style="left:27px;top:1px" width="18" height="18" viewBox="0 0 18 18"><defs><linearGradient id="bg3610" x1="0" x2="1"><stop offset="0" stop-color="#fff"/><stop offset="0.55" stop-color="#e6e6e6"/><stop offset="1" stop-color="#bdbdbd"/></linearGradient></defs><rect x="1" y="1" width="16" height="16" rx="4.5" ry="3.5" fill="#fdfdfd" stroke="#4a4a4a" stroke-width="1.1"/><path d="M6 7 H15 V13.5 Q15 16 12.5 16 H6Z" fill="url(#bg3610)"/></svg><span class="tx fit" style="left:58px;transform-origin:0 50%;transform:scaleX(1.037)">電源LED</span></div>
<div class="row" style="left:76px;top:534px;width:147px"><svg style="left:2px;top:4px" width="18" height="12" viewBox="0 0 18 12"><path d="M0.5 6 C3 1.2 6 0.3 9 0.3 C12 0.3 15 1.2 17.5 6 C15 10.8 12 11.7 9 11.7 C6 11.7 3 10.8 0.5 6Z" fill="#8e8e8e"/><circle cx="9" cy="6" r="4.1" fill="#f4f4f4"/><circle cx="9" cy="6" r="2.6" fill="#8e8e8e"/></svg><svg style="left:27px;top:1px" width="18" height="18" viewBox="0 0 18 18"><defs><linearGradient id="bg3610" x1="0" x2="1"><stop offset="0" stop-color="#fff"/><stop offset="0.55" stop-color="#e6e6e6"/><stop offset="1" stop-color="#bdbdbd"/></linearGradient></defs><rect x="1" y="1" width="16" height="16" rx="4.5" ry="3.5" fill="#fdfdfd" stroke="#4a4a4a" stroke-width="1.1"/><path d="M6 7 H15 V13.5 Q15 16 12.5 16 H6Z" fill="url(#bg3610)"/></svg><span class="tx fit" style="left:58px;transform-origin:0 50%;transform:scaleX(0.738)">カートリッジダミー蓋</span></div>
<div class="row" style="left:76px;top:558px;width:115px"><svg style="left:2px;top:4px" width="18" height="12" viewBox="0 0 18 12"><path d="M0.5 6 C3 1.2 6 0.3 9 0.3 C12 0.3 15 1.2 17.5 6 C15 10.8 12 11.7 9 11.7 C6 11.7 3 10.8 0.5 6Z" fill="#8e8e8e"/><circle cx="9" cy="6" r="4.1" fill="#f4f4f4"/><circle cx="9" cy="6" r="2.6" fill="#8e8e8e"/></svg><svg style="left:27px;top:1px" width="18" height="18" viewBox="0 0 18 18"><defs><linearGradient id="bg3610" x1="0" x2="1"><stop offset="0" stop-color="#fff"/><stop offset="0.55" stop-color="#e6e6e6"/><stop offset="1" stop-color="#bdbdbd"/></linearGradient></defs><rect x="1" y="1" width="16" height="16" rx="4.5" ry="3.5" fill="#fdfdfd" stroke="#4a4a4a" stroke-width="1.1"/><path d="M6 7 H15 V13.5 Q15 16 12.5 16 H6Z" fill="url(#bg3610)"/></svg><span class="tx fit" style="left:58px;transform-origin:0 50%;transform:scaleX(0.891)">背面ポート</span></div>
<div class="row" style="left:76px;top:582px;width:107px"><svg style="left:2px;top:4px" width="18" height="12" viewBox="0 0 18 12"><path d="M0.5 6 C3 1.2 6 0.3 9 0.3 C12 0.3 15 1.2 17.5 6 C15 10.8 12 11.7 9 11.7 C6 11.7 3 10.8 0.5 6Z" fill="#8e8e8e"/><circle cx="9" cy="6" r="4.1" fill="#f4f4f4"/><circle cx="9" cy="6" r="2.6" fill="#8e8e8e"/></svg><svg style="left:27px;top:1px" width="18" height="18" viewBox="0 0 18 18"><defs><linearGradient id="bg3610" x1="0" x2="1"><stop offset="0" stop-color="#fff"/><stop offset="0.55" stop-color="#e6e6e6"/><stop offset="1" stop-color="#bdbdbd"/></linearGradient></defs><rect x="1" y="1" width="16" height="16" rx="4.5" ry="3.5" fill="#fdfdfd" stroke="#4a4a4a" stroke-width="1.1"/><path d="M6 7 H15 V13.5 Q15 16 12.5 16 H6Z" fill="url(#bg3610)"/></svg><span class="tx fit" style="left:58px;transform-origin:0 50%;transform:scaleX(0.745)">キーボード</span></div>
<svg class="arr" style="left:37px;top:609px" width="14" height="14" viewBox="0 0 14 14"><path d="M12.5 1.5 V12.5 H1.5Z" fill="#777" stroke="#222" stroke-width="1.2" stroke-linejoin="round"/></svg><div class="row" style="left:58px;top:606px;width:111px"><svg style="left:2px;top:4px" width="18" height="12" viewBox="0 0 18 12"><path d="M0.5 6 C3 1.2 6 0.3 9 0.3 C12 0.3 15 1.2 17.5 6 C15 10.8 12 11.7 9 11.7 C6 11.7 3 10.8 0.5 6Z" fill="#8e8e8e"/><circle cx="9" cy="6" r="4.1" fill="#f4f4f4"/><circle cx="9" cy="6" r="2.6" fill="#8e8e8e"/></svg><svg style="left:28px;top:3px" width="17" height="14" viewBox="0 0 17 14"><path d="M0 0.5 H6.5 L7.5 2.2 H16.5 V13.5 H0Z" fill="#8f8f8f"/><path d="M0.8 1.3 H6 L6.8 2.6 H0.8Z" fill="#c9c9c9"/></svg><span class="tx fit" style="left:58px;transform-origin:0 50%;transform:scaleX(0.818)">キャンバス</span></div>
<div class="row" style="left:76px;top:630px;width:155px"><svg style="left:2px;top:3px" width="18" height="14" viewBox="0 0 18 14"><path d="M0.8 7 C3 2.6 6 1.6 9 1.6 C12 1.6 15 2.6 17.2 7 C15 11.4 12 12.4 9 12.4 C6 12.4 3 11.4 0.8 7Z" fill="none" stroke="#9a9a9a" stroke-width="0.9"/><circle cx="9" cy="7" r="3.3" fill="none" stroke="#9a9a9a" stroke-width="0.9"/><path d="M3 1.2 L15 12.8" stroke="#9a9a9a" stroke-width="1"/><path d="M4.2 0.6 L16.2 12.2" stroke="#f1f1f1" stroke-width="1"/></svg><svg style="left:27px;top:1px" width="18" height="18" viewBox="0 0 18 18"><rect x="1" y="1" width="16" height="16" fill="#9fd0f5" stroke="#3a3a3a" stroke-width="1"/><circle cx="12.5" cy="5" r="1.8" fill="#fff6b0"/><path d="M1.5 13 L7 6.5 L12 11 L14 9.5 L16.5 12 V16.5 H1.5Z" fill="#8a8f96"/><circle cx="5" cy="12.5" r="3" fill="none" stroke="#d42020" stroke-width="1.2"/><path d="M3 10.5 L7 14.5" stroke="#d42020" stroke-width="1.2"/></svg><span class="tx fit" style="left:58px;transform-origin:0 50%;transform:scaleX(0.983)">talent_dpc200_06</span></div>
<div class="row" style="left:76px;top:654px;width:139px"><svg style="left:2px;top:3px" width="18" height="14" viewBox="0 0 18 14"><path d="M0.8 7 C3 2.6 6 1.6 9 1.6 C12 1.6 15 2.6 17.2 7 C15 11.4 12 12.4 9 12.4 C6 12.4 3 11.4 0.8 7Z" fill="none" stroke="#9a9a9a" stroke-width="0.9"/><circle cx="9" cy="7" r="3.3" fill="none" stroke="#9a9a9a" stroke-width="0.9"/><path d="M3 1.2 L15 12.8" stroke="#9a9a9a" stroke-width="1"/><path d="M4.2 0.6 L16.2 12.2" stroke="#f1f1f1" stroke-width="1"/></svg><svg style="left:27px;top:1px" width="18" height="18" viewBox="0 0 18 18"><rect x="1" y="1" width="16" height="16" fill="#9fd0f5" stroke="#3a3a3a" stroke-width="1"/><circle cx="12.5" cy="5" r="1.8" fill="#fff6b0"/><path d="M1.5 13 L7 6.5 L12 11 L14 9.5 L16.5 12 V16.5 H1.5Z" fill="#8a8f96"/><circle cx="5" cy="12.5" r="3" fill="none" stroke="#d42020" stroke-width="1.2"/><path d="M3 10.5 L7 14.5" stroke="#d42020" stroke-width="1.2"/></svg><span class="tx fit" style="left:58px;transform-origin:0 50%;transform:scaleX(0.978)">Talentdpc200b</span></div>
<div class="row" style="left:76px;top:678px;width:227px"><svg style="left:2px;top:3px" width="18" height="14" viewBox="0 0 18 14"><path d="M0.8 7 C3 2.6 6 1.6 9 1.6 C12 1.6 15 2.6 17.2 7 C15 11.4 12 12.4 9 12.4 C6 12.4 3 11.4 0.8 7Z" fill="none" stroke="#9a9a9a" stroke-width="0.9"/><circle cx="9" cy="7" r="3.3" fill="none" stroke="#9a9a9a" stroke-width="0.9"/><path d="M3 1.2 L15 12.8" stroke="#9a9a9a" stroke-width="1"/><path d="M4.2 0.6 L16.2 12.2" stroke="#f1f1f1" stroke-width="1"/></svg><svg style="left:27px;top:1px" width="18" height="18" viewBox="0 0 18 18"><rect x="1" y="1" width="16" height="16" fill="#9fd0f5" stroke="#3a3a3a" stroke-width="1"/><circle cx="12.5" cy="5" r="1.8" fill="#fff6b0"/><path d="M1.5 13 L7 6.5 L12 11 L14 9.5 L16.5 12 V16.5 H1.5Z" fill="#8a8f96"/><circle cx="5" cy="12.5" r="3" fill="none" stroke="#d42020" stroke-width="1.2"/><path d="M3 10.5 L7 14.5" stroke="#d42020" stroke-width="1.2"/></svg><span class="tx fit" style="left:58px;transform-origin:0 50%;transform:scaleX(0.968)">Daewoo_CPC-300_ivory_rights...</span></div>
<div class="row" style="left:76px;top:702px;width:187px"><svg style="left:2px;top:3px" width="18" height="14" viewBox="0 0 18 14"><path d="M0.8 7 C3 2.6 6 1.6 9 1.6 C12 1.6 15 2.6 17.2 7 C15 11.4 12 12.4 9 12.4 C6 12.4 3 11.4 0.8 7Z" fill="none" stroke="#9a9a9a" stroke-width="0.9"/><circle cx="9" cy="7" r="3.3" fill="none" stroke="#9a9a9a" stroke-width="0.9"/><path d="M3 1.2 L15 12.8" stroke="#9a9a9a" stroke-width="1"/><path d="M4.2 0.6 L16.2 12.2" stroke="#f1f1f1" stroke-width="1"/></svg><svg style="left:27px;top:1px" width="18" height="18" viewBox="0 0 18 18"><rect x="1" y="1" width="16" height="16" fill="#9fd0f5" stroke="#3a3a3a" stroke-width="1"/><circle cx="12.5" cy="5" r="1.8" fill="#fff6b0"/><path d="M1.5 13 L7 6.5 L12 11 L14 9.5 L16.5 12 V16.5 H1.5Z" fill="#8a8f96"/><circle cx="5" cy="12.5" r="3" fill="none" stroke="#d42020" stroke-width="1.2"/><path d="M3 10.5 L7 14.5" stroke="#d42020" stroke-width="1.2"/></svg><span class="tx fit" style="left:58px;transform-origin:0 50%;transform:scaleX(0.955)">Daewoo_CPC-300_black</span></div>
<svg class="arr" style="left:38px;top:728px" width="12" height="16" viewBox="0 0 12 16"><path d="M1.5 1.5 L10.5 8 L1.5 14.5Z" fill="#fff" stroke="#222" stroke-width="1.3" stroke-linejoin="round"/></svg><div class="row" style="left:58px;top:726px;width:99px"><svg style="left:2px;top:4px" width="18" height="12" viewBox="0 0 18 12"><path d="M0.5 6 C3 1.2 6 0.3 9 0.3 C12 0.3 15 1.2 17.5 6 C15 10.8 12 11.7 9 11.7 C6 11.7 3 10.8 0.5 6Z" fill="#8e8e8e"/><circle cx="9" cy="6" r="4.1" fill="#f4f4f4"/><circle cx="9" cy="6" r="2.6" fill="#8e8e8e"/></svg><svg style="left:28px;top:3px" width="17" height="14" viewBox="0 0 17 14"><path d="M0 0.5 H6.5 L7.5 2.2 H16.5 V13.5 H0Z" fill="#8f8f8f"/><path d="M0.8 1.3 H6 L6.8 2.6 H0.8Z" fill="#c9c9c9"/></svg><span class="tx fit" style="left:58px;transform-origin:0 50%;transform:scaleX(0.750)">スケッチ</span></div>
<svg class="arr" style="left:38px;top:752px" width="12" height="16" viewBox="0 0 12 16"><path d="M1.5 1.5 L10.5 8 L1.5 14.5Z" fill="#fff" stroke="#222" stroke-width="1.3" stroke-linejoin="round"/></svg><div class="row" style="left:58px;top:750px;width:139px"><svg style="left:2px;top:4px" width="18" height="12" viewBox="0 0 18 12"><path d="M0.5 6 C3 1.2 6 0.3 9 0.3 C12 0.3 15 1.2 17.5 6 C15 10.8 12 11.7 9 11.7 C6 11.7 3 10.8 0.5 6Z" fill="#8e8e8e"/><circle cx="9" cy="6" r="4.1" fill="#f4f4f4"/><circle cx="9" cy="6" r="2.6" fill="#8e8e8e"/></svg><svg style="left:28px;top:3px" width="17" height="14" viewBox="0 0 17 14"><path d="M0 0.5 H6.5 L7.5 2.2 H16.5 V13.5 H0Z" fill="#8f8f8f"/><path d="M0.8 1.3 H6 L6.8 2.6 H0.8Z" fill="#c9c9c9"/></svg><span class="tx fit" style="left:58px;transform-origin:0 50%;transform:scaleX(0.739)">コンストラクション</span></div>
<div class="row" style="left:58px;top:774px;width:106px"><svg style="left:1px;top:1px" width="19" height="18" viewBox="0 0 19 18"><path d="M1 14 L12 14 L15 12 V15 L12 17 H1Z" fill="#c4c4c4"/><path d="M1 3.5 L4 1.5 H14.5 L12 3.5Z" fill="#a8d4f6"/><path d="M12 3.5 L14.5 1.5 V12 L12 14Z" fill="#3f8fd0"/><rect x="1" y="3.5" width="11" height="10.5" fill="#6db3ea"/><path d="M17 3 V13 M15.6 4.6 L17 2 L18.4 4.6Z" stroke="#222" stroke-width="1" fill="#222"/></svg><span class="tx fit" style="left:33px;transform-origin:0 50%;transform:scaleX(0.905)">押し出し3279</span></div>
<div class="row" style="left:58px;top:798px;width:106px"><svg style="left:1px;top:1px" width="18" height="18" viewBox="0 0 18 18"><path d="M1.5 16.5 V6 Q1.5 1.5 7 1.5 H10 Q16.5 2 16.5 9 V14 L13.5 16.5Z" fill="#dedede" stroke="#555" stroke-width="1"/><path d="M7.5 1.6 H10 Q16.4 2 16.5 9 L13.6 10.5 Q13 4.5 7.5 4Z" fill="#5aa5e6"/></svg><span class="tx fit" style="left:33px;transform-origin:0 50%;transform:scaleX(0.782)">フィレット3280</span></div>
<div class="row" style="left:58px;top:822px;width:102px"><svg style="left:1px;top:1px" width="19" height="18" viewBox="0 0 19 18"><path d="M1 14 L12 14 L15 12 V15 L12 17 H1Z" fill="#c4c4c4"/><path d="M1 3.5 L4 1.5 H14.5 L12 3.5Z" fill="#a8d4f6"/><path d="M12 3.5 L14.5 1.5 V12 L12 14Z" fill="#3f8fd0"/><rect x="1" y="3.5" width="11" height="10.5" fill="#6db3ea"/><path d="M17 3 V13 M15.6 4.6 L17 2 L18.4 4.6Z" stroke="#222" stroke-width="1" fill="#222"/></svg><span class="tx fit" style="left:33px;transform-origin:0 50%;transform:scaleX(0.847)">押し出し3281</span></div>
<div class="row" style="left:58px;top:846px;width:106px"><svg style="left:1px;top:1px" width="19" height="18" viewBox="0 0 19 18"><path d="M1 14 L12 14 L15 12 V15 L12 17 H1Z" fill="#c4c4c4"/><path d="M1 3.5 L4 1.5 H14.5 L12 3.5Z" fill="#a8d4f6"/><path d="M12 3.5 L14.5 1.5 V12 L12 14Z" fill="#3f8fd0"/><rect x="1" y="3.5" width="11" height="10.5" fill="#6db3ea"/><path d="M17 3 V13 M15.6 4.6 L17 2 L18.4 4.6Z" stroke="#222" stroke-width="1" fill="#222"/></svg><span class="tx fit" style="left:33px;transform-origin:0 50%;transform:scaleX(0.905)">押し出し3282</span></div>
<div class="row" style="left:58px;top:870px;width:106px"><svg style="left:1px;top:1px" width="19" height="18" viewBox="0 0 19 18"><path d="M1 14 L12 14 L15 12 V15 L12 17 H1Z" fill="#c4c4c4"/><path d="M1 3.5 L4 1.5 H14.5 L12 3.5Z" fill="#a8d4f6"/><path d="M12 3.5 L14.5 1.5 V12 L12 14Z" fill="#3f8fd0"/><rect x="1" y="3.5" width="11" height="10.5" fill="#6db3ea"/><path d="M17 3 V13 M15.6 4.6 L17 2 L18.4 4.6Z" stroke="#222" stroke-width="1" fill="#222"/></svg><span class="tx fit" style="left:33px;transform-origin:0 50%;transform:scaleX(0.905)">押し出し3283</span></div>
<div class="row" style="left:58px;top:894px;width:106px"><svg style="left:1px;top:1px" width="19" height="18" viewBox="0 0 19 18"><path d="M1 14 L12 14 L15 12 V15 L12 17 H1Z" fill="#c4c4c4"/><path d="M1 3.5 L4 1.5 H14.5 L12 3.5Z" fill="#a8d4f6"/><path d="M12 3.5 L14.5 1.5 V12 L12 14Z" fill="#3f8fd0"/><rect x="1" y="3.5" width="11" height="10.5" fill="#6db3ea"/><path d="M17 3 V13 M15.6 4.6 L17 2 L18.4 4.6Z" stroke="#222" stroke-width="1" fill="#222"/></svg><span class="tx fit" style="left:33px;transform-origin:0 50%;transform:scaleX(0.905)">押し出し3284</span></div>
<div class="row" style="left:58px;top:918px;width:106px"><svg style="left:1px;top:1px" width="19" height="18" viewBox="0 0 19 18"><path d="M1 14 L12 14 L15 12 V15 L12 17 H1Z" fill="#c4c4c4"/><path d="M1 3.5 L4 1.5 H14.5 L12 3.5Z" fill="#a8d4f6"/><path d="M12 3.5 L14.5 1.5 V12 L12 14Z" fill="#3f8fd0"/><rect x="1" y="3.5" width="11" height="10.5" fill="#6db3ea"/><path d="M17 3 V13 M15.6 4.6 L17 2 L18.4 4.6Z" stroke="#222" stroke-width="1" fill="#222"/></svg><span class="tx fit" style="left:33px;transform-origin:0 50%;transform:scaleX(0.905)">押し出し3285</span></div>
<div class="row" style="left:58px;top:942px;width:106px"><svg style="left:1px;top:1px" width="19" height="18" viewBox="0 0 19 18"><path d="M1 14 L12 14 L15 12 V15 L12 17 H1Z" fill="#c4c4c4"/><path d="M1 3.5 L4 1.5 H14.5 L12 3.5Z" fill="#a8d4f6"/><path d="M12 3.5 L14.5 1.5 V12 L12 14Z" fill="#3f8fd0"/><rect x="1" y="3.5" width="11" height="10.5" fill="#6db3ea"/><path d="M17 3 V13 M15.6 4.6 L17 2 L18.4 4.6Z" stroke="#222" stroke-width="1" fill="#222"/></svg><span class="tx fit" style="left:33px;transform-origin:0 50%;transform:scaleX(0.905)">押し出し3286</span></div>
<div class="row" style="left:58px;top:966px;width:106px"><svg style="left:1px;top:1px" width="19" height="18" viewBox="0 0 19 18"><path d="M1 14 L12 14 L15 12 V15 L12 17 H1Z" fill="#c4c4c4"/><path d="M1 3.5 L4 1.5 H14.5 L12 3.5Z" fill="#a8d4f6"/><path d="M12 3.5 L14.5 1.5 V12 L12 14Z" fill="#3f8fd0"/><rect x="1" y="3.5" width="11" height="10.5" fill="#6db3ea"/><path d="M17 3 V13 M15.6 4.6 L17 2 L18.4 4.6Z" stroke="#222" stroke-width="1" fill="#222"/></svg><span class="tx fit" style="left:33px;transform-origin:0 50%;transform:scaleX(0.905)">押し出し3287</span></div>
<div id="nav"><svg class="abs" style="left:0;top:0" width="235" height="24" viewBox="0 0 235 24"><path d="M10 4 V20" stroke="#444" stroke-width="2.4"/><path d="M10 4 V20" stroke="#fff" stroke-width="0.9"/><path d="M6.5 6 L10 1.5 L13.5 6Z" fill="#fff" stroke="#444" stroke-width="0.8"/><ellipse cx="10" cy="13.5" rx="7" ry="2.8" fill="none" stroke="#333" stroke-width="1.2"/><path d="M3 16 L8 13.5 V18.5Z" fill="#222"/><path d="M22.5 10.5 H29.5 L26 14.5Z" fill="#333"/><rect x="36" y="9" width="15" height="11" fill="#eee" stroke="#444" stroke-width="1"/><rect x="39" y="13" width="9" height="4" fill="#999" stroke="#444" stroke-width="0.7"/><path d="M37 9 L40 5.5 L43 7 L47 4.5 V9" fill="#bbb" stroke="#444" stroke-width="0.8"/><path d="M65.2 13.5 V7.4 a1.1 1.1 0 0 1 2.2 0 V12 V5.6 a1.1 1.1 0 0 1 2.2 0 V12 V6 a1.1 1.1 0 0 1 2.2 0 V12.3 V8 a1.1 1.1 0 0 1 2.2 0 V15 Q74 20 69.6 20 Q66.3 20 64.6 17 L61.7 13.3 Q61.2 12 62.4 11.8 Q63.3 11.9 65.2 14.8 Z" fill="#fff" stroke="#333" stroke-width="0.9" stroke-linejoin="round"/><circle cx="93" cy="11" r="4.8" fill="#d9ecec" stroke="#333" stroke-width="1.1"/><path d="M96.5 14.5 L101 19" stroke="#333" stroke-width="2.2"/><path d="M100 7 H105 M102.5 4.5 V9.5 M100 11.5 H105" stroke="#333" stroke-width="1"/><rect x="113.5" y="4.5" width="15" height="15" fill="none" stroke="#333" stroke-width="0.9" stroke-dasharray="2 1.5"/><circle cx="120" cy="11" r="6" fill="#dbeaea" stroke="#333" stroke-width="1.1"/><path d="M124.5 15.5 L128.5 19.5" stroke="#333" stroke-width="2.2"/><path d="M133.5 10.5 H140.5 L137 14.5Z" fill="#333"/><rect x="146.500" y="4.500" width="15" height="11.500" rx="1" fill="#eee" stroke="#333" stroke-width="1"/><rect x="148.500" y="6.500" width="11" height="7.500" fill="#7f9fd6" stroke="#33508a" stroke-width="0.6"/><path d="M151 16 H157 L158 19 H150Z" fill="#ccc" stroke="#333" stroke-width="0.7"/><path d="M163.5 10.5 H170.5 L167 14.5Z" fill="#333"/><rect x="178" y="4.500" width="14.500" height="14.500" fill="#fff" stroke="#333" stroke-width="0.9"/><path d="M181.500 4.500 V19 M185 4.500 V19 M188.500 4.500 V19 M178 8 H192.500 M178 11.500 H192.500 M178 15 H192.500" stroke="#556" stroke-width="0.9"/><path d="M194.5 10.5 H201.5 L198 14.5Z" fill="#333"/><rect x="208.500" y="5.500" width="14" height="12" rx="1" fill="#9db4e0" stroke="#2b4a8f" stroke-width="1.1"/><path d="M215.500 5.500 V17.500 M208.500 11.500 H222.500" stroke="#2b4a8f" stroke-width="1.3"/><path d="M225.5 10.5 H232.5 L229 14.5Z" fill="#333"/></svg></div>
</div>
<div class="abs" style="left:1920px;top:0;width:8px;height:33px;background:#eef0f5"></div><div class="abs" style="left:1920px;top:33px;width:8px;height:37px;background:#fff"></div><div class="abs" style="left:1920px;top:70px;width:8px;height:57px;background:#111"></div>
<div class="abs" style="left:0;top:1040px;width:1920px;height:8px;background:#111"></div><div class="abs" style="left:441px;top:1040px;width:48px;height:8px;background:#3a3a3a"></div><div class="abs" style="left:1920px;top:1047px;width:8px;height:1px;background:#fff"></div>
<div class="abs" style="left:1873px;top:1045px;font-size:9px;color:#fff;font-weight:bold;line-height:9px">1:55</div>
</body></html>
